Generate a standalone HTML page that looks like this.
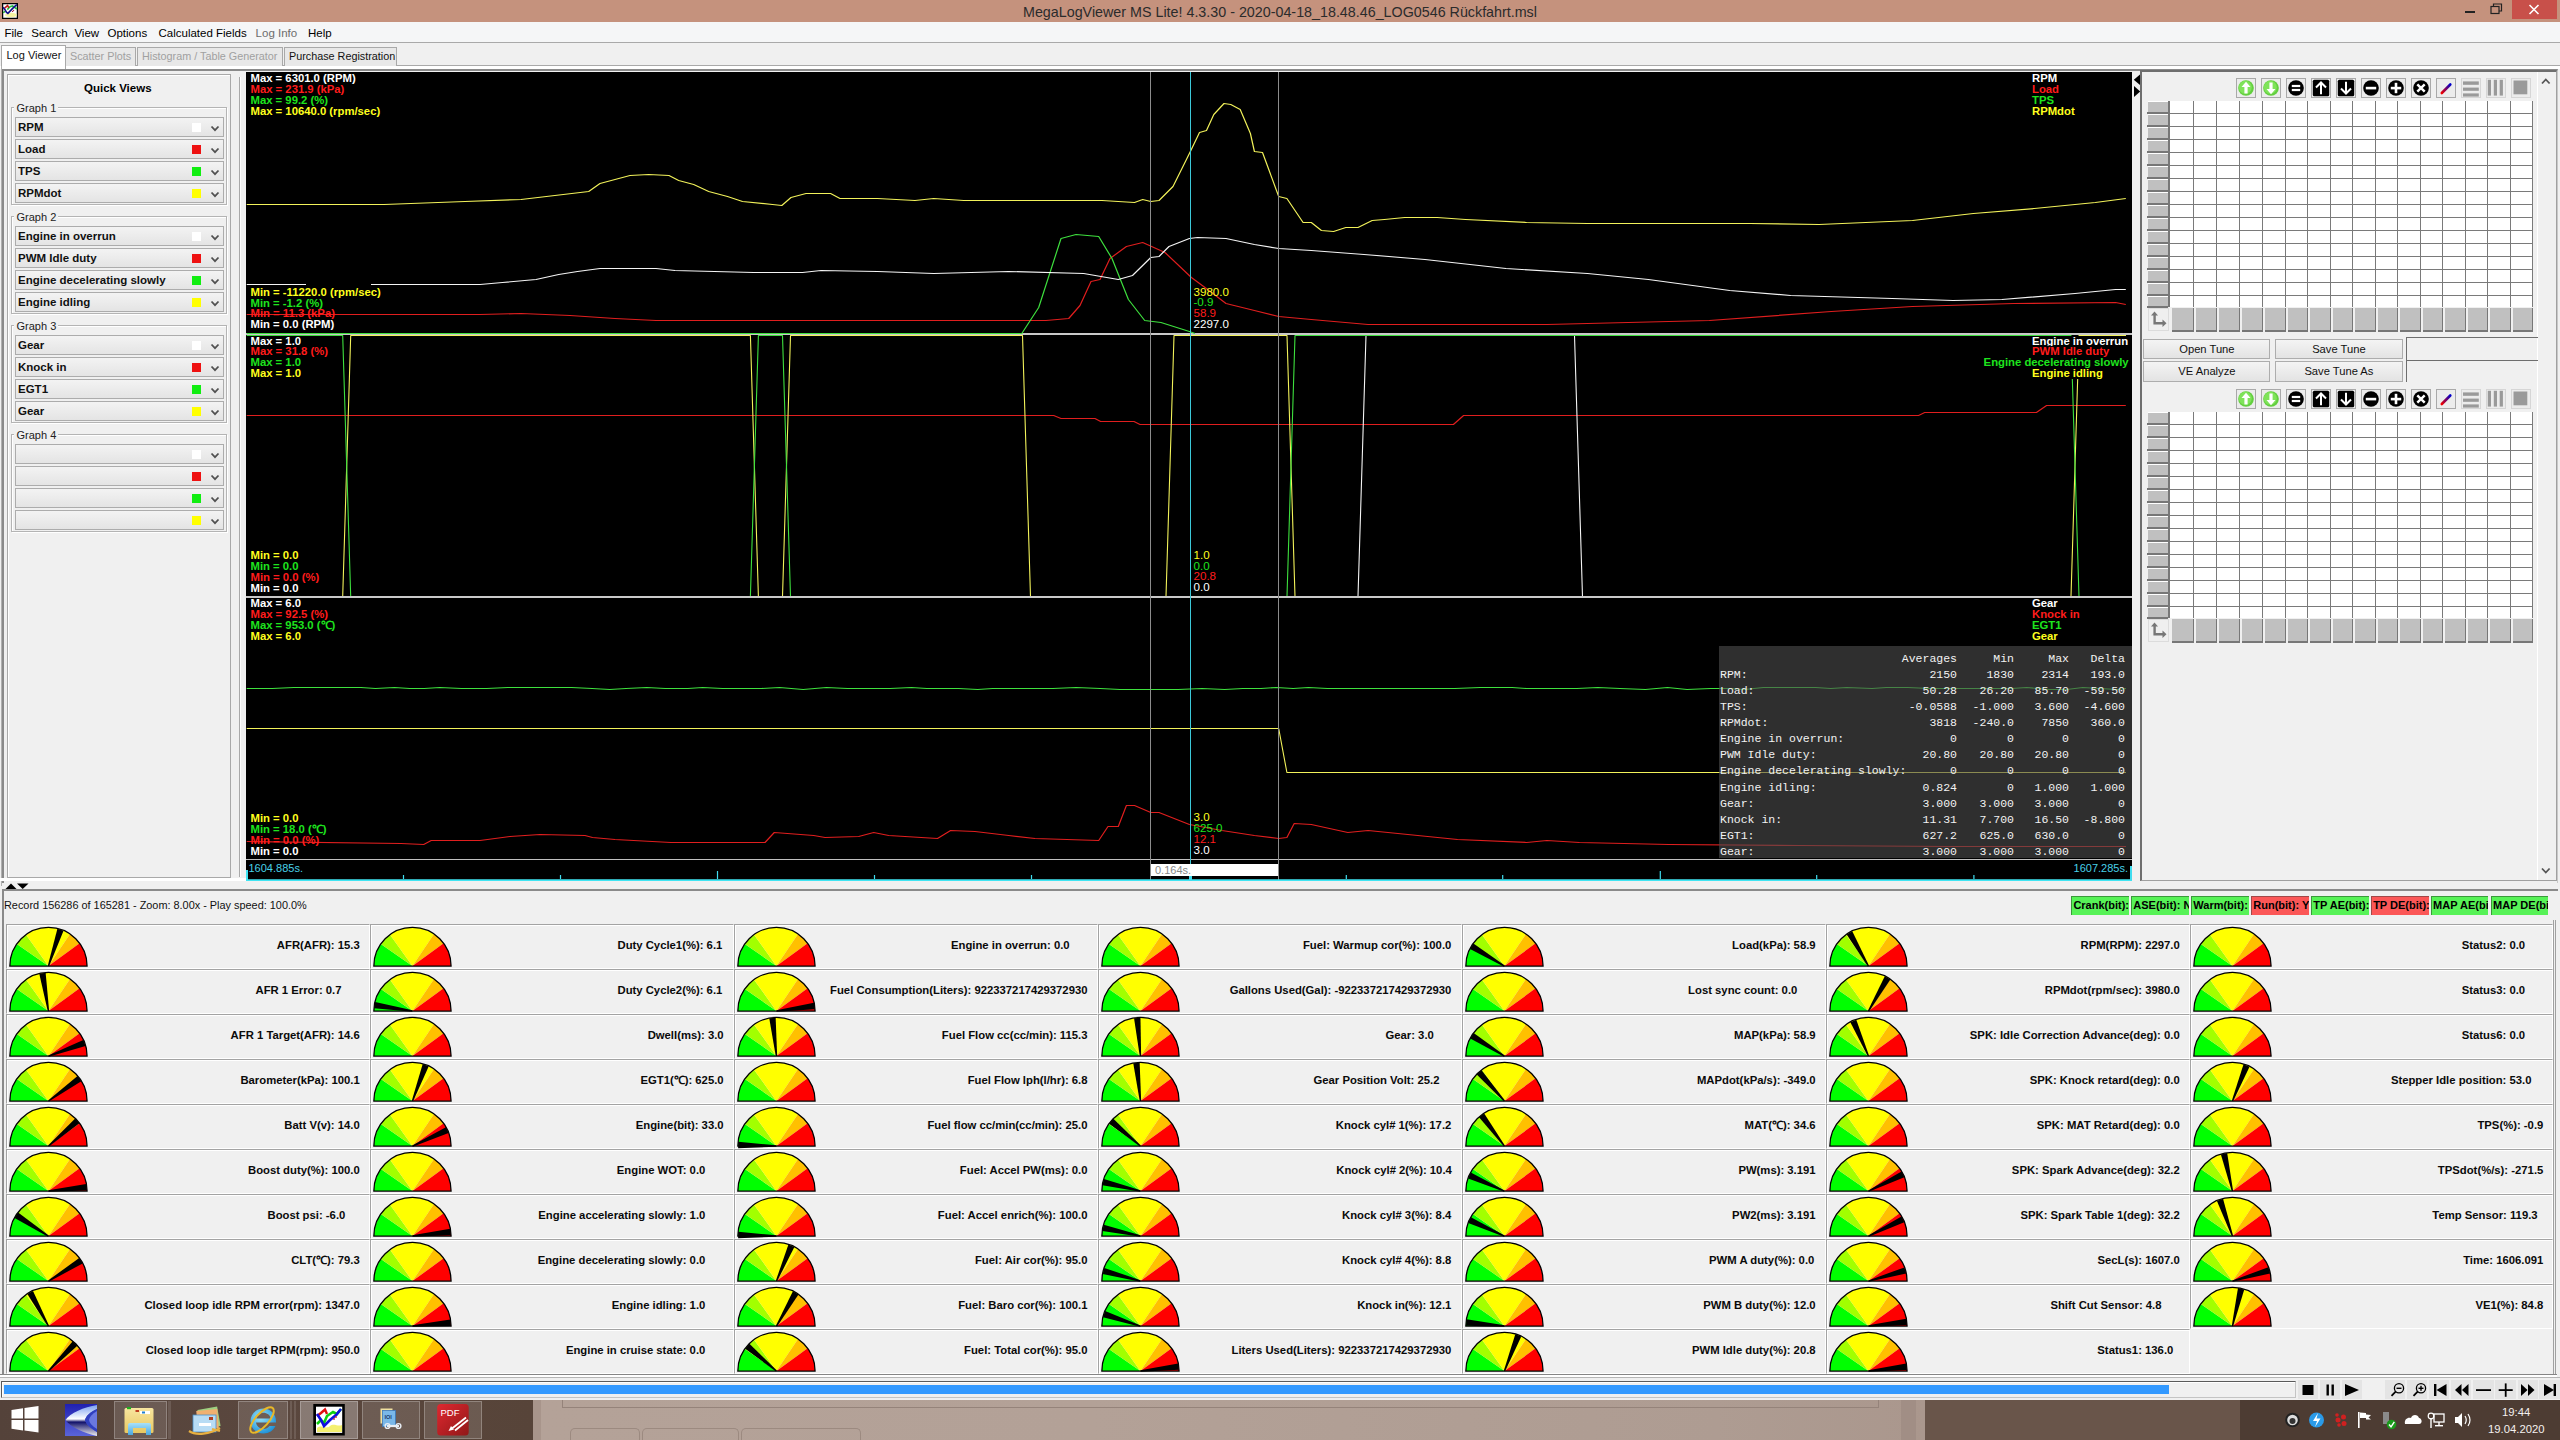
<!DOCTYPE html><html><head><meta charset="utf-8"><title>MegaLogViewer</title><style>html,body{margin:0;padding:0;width:2560px;height:1440px;overflow:hidden;background:#f0f0f0;position:relative;font-family:"Liberation Sans",sans-serif}div{box-sizing:border-box}</style></head><body>
<div style="position:absolute;left:0px;top:0px;width:2560px;height:22px;background:#c5927d"></div>
<div style="position:absolute;left:1023px;top:5px;font-family:'Liberation Sans', sans-serif;font-size:14.3px;line-height:14.3px;color:#2b2b2b;font-weight:normal;white-space:nowrap;">MegaLogViewer MS Lite! 4.3.30 - 2020-04-18_18.48.46_LOG0546 Rückfahrt.msl</div>
<div style="position:absolute;left:0px;top:22px;width:2560px;height:20px;background:#f5f6f7"></div>
<div style="position:absolute;left:0px;top:42px;width:2560px;height:1px;background:#a9a9a9"></div>
<div style="position:absolute;left:4.4px;top:28px;font-family:'Liberation Sans', sans-serif;font-size:11.5px;line-height:11.5px;color:#000;font-weight:normal;white-space:nowrap;">File</div>
<div style="position:absolute;left:31.3px;top:28px;font-family:'Liberation Sans', sans-serif;font-size:11.5px;line-height:11.5px;color:#000;font-weight:normal;white-space:nowrap;">Search</div>
<div style="position:absolute;left:74.4px;top:28px;font-family:'Liberation Sans', sans-serif;font-size:11.5px;line-height:11.5px;color:#000;font-weight:normal;white-space:nowrap;">View</div>
<div style="position:absolute;left:107.5px;top:28px;font-family:'Liberation Sans', sans-serif;font-size:11.5px;line-height:11.5px;color:#000;font-weight:normal;white-space:nowrap;">Options</div>
<div style="position:absolute;left:158.5px;top:28px;font-family:'Liberation Sans', sans-serif;font-size:11.5px;line-height:11.5px;color:#000;font-weight:normal;white-space:nowrap;">Calculated Fields</div>
<div style="position:absolute;left:255.6px;top:28px;font-family:'Liberation Sans', sans-serif;font-size:11.5px;line-height:11.5px;color:#6d6d6d;font-weight:normal;white-space:nowrap;">Log Info</div>
<div style="position:absolute;left:308px;top:28px;font-family:'Liberation Sans', sans-serif;font-size:11.5px;line-height:11.5px;color:#000;font-weight:normal;white-space:nowrap;">Help</div>
<div style="position:absolute;left:0px;top:43px;width:2560px;height:23px;background:#f0f0f0"></div>
<div style="position:absolute;left:65px;top:65px;width:2495px;height:1px;background:#a9a9a9"></div>
<div style="position:absolute;left:0px;top:66px;width:2560px;height:3px;background:#ffffff"></div>
<div style="position:absolute;left:0.6px;top:45.3px;width:65px;height:24px;background:#ffffff;border:1px solid #a9a9a9;border-bottom:none"></div>
<div style="position:absolute;left:6.5px;top:49.5px;font-family:'Liberation Sans', sans-serif;font-size:11px;line-height:11px;color:#111;font-weight:normal;white-space:nowrap;">Log Viewer</div>
<div style="position:absolute;left:65px;top:47.2px;width:71px;height:18.5px;background:#e8e8e8;border:1px solid #a9a9a9;border-bottom:none"></div>
<div style="position:absolute;left:70px;top:51px;font-family:'Liberation Sans', sans-serif;font-size:10.8px;line-height:10.8px;color:#a0a0a0;font-weight:normal;white-space:nowrap;">Scatter Plots</div>
<div style="position:absolute;left:137px;top:47.2px;width:146px;height:18.5px;background:#e8e8e8;border:1px solid #a9a9a9;border-bottom:none"></div>
<div style="position:absolute;left:142px;top:51px;font-family:'Liberation Sans', sans-serif;font-size:10.8px;line-height:10.8px;color:#a0a0a0;font-weight:normal;white-space:nowrap;">Histogram / Table Generator</div>
<div style="position:absolute;left:284px;top:47.2px;width:113px;height:18.5px;background:#e8e8e8;border:1px solid #a9a9a9;border-bottom:none"></div>
<div style="position:absolute;left:289px;top:51px;font-family:'Liberation Sans', sans-serif;font-size:10.8px;line-height:10.8px;color:#111;font-weight:normal;white-space:nowrap;">Purchase Registration</div>
<div style="position:absolute;left:0.6px;top:66px;width:1px;height:820px;background:#b0b0b0"></div>
<div style="position:absolute;left:2px;top:69px;width:2556px;height:814px;border-top:2px solid #8a8a8a;border-left:2px solid #8a8a8a;border-right:1px solid #c8c8c8"></div>
<div style="position:absolute;left:0px;top:878px;width:246px;height:3px;background:#ffffff"></div>
<div style="position:absolute;left:7px;top:74px;width:224px;height:804px;border:1px solid #a9a9a9;box-shadow:inset 1px 1px 0 #fff"></div>
<div style="position:absolute;left:239px;top:77px;width:2px;height:800px;border-left:1px solid #a9a9a9;border-right:1px solid #fff"></div>
<div style="position:absolute;left:84px;top:83px;font-family:'Liberation Sans', sans-serif;font-size:11.5px;line-height:11.5px;color:#000;font-weight:bold;white-space:nowrap;">Quick Views</div>
<div style="position:absolute;left:10.5px;top:106.5px;width:216px;height:98.5px;border:1px solid #b4b4b4;box-shadow:inset 1px 1px 0 #fff, 1px 1px 0 #fff"></div>
<div style="position:absolute;left:14px;top:101.5px;width:44px;height:12px;background:#f0f0f0"></div>
<div style="position:absolute;left:16.5px;top:102.5px;font-family:'Liberation Sans', sans-serif;font-size:11px;line-height:11px;color:#222;font-weight:normal;white-space:nowrap;">Graph 1</div>
<div style="position:absolute;left:14.5px;top:116.5px;width:209px;height:20px;border:1px solid #acacac;background:linear-gradient(#f3f3f3,#e4e4e4)"></div>
<div style="position:absolute;left:18px;top:122.0px;font-family:'Liberation Sans', sans-serif;font-size:11.5px;line-height:11.5px;color:#111;font-weight:bold;white-space:nowrap;">RPM</div>
<div style="position:absolute;left:192px;top:122.5px;width:9px;height:9px;background:#ffffff"></div>
<svg style="position:absolute;left:210px;top:124.5px" width="10" height="7"><polyline points="1.5,1.5 5,5.2 8.5,1.5" fill="none" stroke="#505050" stroke-width="1.8"/></svg>
<div style="position:absolute;left:14.5px;top:138.5px;width:209px;height:20px;border:1px solid #acacac;background:linear-gradient(#f3f3f3,#e4e4e4)"></div>
<div style="position:absolute;left:18px;top:144.0px;font-family:'Liberation Sans', sans-serif;font-size:11.5px;line-height:11.5px;color:#111;font-weight:bold;white-space:nowrap;">Load</div>
<div style="position:absolute;left:192px;top:144.5px;width:9px;height:9px;background:#ee1111"></div>
<svg style="position:absolute;left:210px;top:146.5px" width="10" height="7"><polyline points="1.5,1.5 5,5.2 8.5,1.5" fill="none" stroke="#505050" stroke-width="1.8"/></svg>
<div style="position:absolute;left:14.5px;top:160.5px;width:209px;height:20px;border:1px solid #acacac;background:linear-gradient(#f3f3f3,#e4e4e4)"></div>
<div style="position:absolute;left:18px;top:166.0px;font-family:'Liberation Sans', sans-serif;font-size:11.5px;line-height:11.5px;color:#111;font-weight:bold;white-space:nowrap;">TPS</div>
<div style="position:absolute;left:192px;top:166.5px;width:9px;height:9px;background:#11ee11"></div>
<svg style="position:absolute;left:210px;top:168.5px" width="10" height="7"><polyline points="1.5,1.5 5,5.2 8.5,1.5" fill="none" stroke="#505050" stroke-width="1.8"/></svg>
<div style="position:absolute;left:14.5px;top:182.5px;width:209px;height:20px;border:1px solid #acacac;background:linear-gradient(#f3f3f3,#e4e4e4)"></div>
<div style="position:absolute;left:18px;top:188.0px;font-family:'Liberation Sans', sans-serif;font-size:11.5px;line-height:11.5px;color:#111;font-weight:bold;white-space:nowrap;">RPMdot</div>
<div style="position:absolute;left:192px;top:188.5px;width:9px;height:9px;background:#ffff00"></div>
<svg style="position:absolute;left:210px;top:190.5px" width="10" height="7"><polyline points="1.5,1.5 5,5.2 8.5,1.5" fill="none" stroke="#505050" stroke-width="1.8"/></svg>
<div style="position:absolute;left:10.5px;top:215.5px;width:216px;height:98.5px;border:1px solid #b4b4b4;box-shadow:inset 1px 1px 0 #fff, 1px 1px 0 #fff"></div>
<div style="position:absolute;left:14px;top:210.5px;width:44px;height:12px;background:#f0f0f0"></div>
<div style="position:absolute;left:16.5px;top:211.5px;font-family:'Liberation Sans', sans-serif;font-size:11px;line-height:11px;color:#222;font-weight:normal;white-space:nowrap;">Graph 2</div>
<div style="position:absolute;left:14.5px;top:225.5px;width:209px;height:20px;border:1px solid #acacac;background:linear-gradient(#f3f3f3,#e4e4e4)"></div>
<div style="position:absolute;left:18px;top:231.0px;font-family:'Liberation Sans', sans-serif;font-size:11.5px;line-height:11.5px;color:#111;font-weight:bold;white-space:nowrap;">Engine in overrun</div>
<div style="position:absolute;left:192px;top:231.5px;width:9px;height:9px;background:#ffffff"></div>
<svg style="position:absolute;left:210px;top:233.5px" width="10" height="7"><polyline points="1.5,1.5 5,5.2 8.5,1.5" fill="none" stroke="#505050" stroke-width="1.8"/></svg>
<div style="position:absolute;left:14.5px;top:247.5px;width:209px;height:20px;border:1px solid #acacac;background:linear-gradient(#f3f3f3,#e4e4e4)"></div>
<div style="position:absolute;left:18px;top:253.0px;font-family:'Liberation Sans', sans-serif;font-size:11.5px;line-height:11.5px;color:#111;font-weight:bold;white-space:nowrap;">PWM Idle duty</div>
<div style="position:absolute;left:192px;top:253.5px;width:9px;height:9px;background:#ee1111"></div>
<svg style="position:absolute;left:210px;top:255.5px" width="10" height="7"><polyline points="1.5,1.5 5,5.2 8.5,1.5" fill="none" stroke="#505050" stroke-width="1.8"/></svg>
<div style="position:absolute;left:14.5px;top:269.5px;width:209px;height:20px;border:1px solid #acacac;background:linear-gradient(#f3f3f3,#e4e4e4)"></div>
<div style="position:absolute;left:18px;top:275.0px;font-family:'Liberation Sans', sans-serif;font-size:11.5px;line-height:11.5px;color:#111;font-weight:bold;white-space:nowrap;">Engine decelerating slowly</div>
<div style="position:absolute;left:192px;top:275.5px;width:9px;height:9px;background:#11ee11"></div>
<svg style="position:absolute;left:210px;top:277.5px" width="10" height="7"><polyline points="1.5,1.5 5,5.2 8.5,1.5" fill="none" stroke="#505050" stroke-width="1.8"/></svg>
<div style="position:absolute;left:14.5px;top:291.5px;width:209px;height:20px;border:1px solid #acacac;background:linear-gradient(#f3f3f3,#e4e4e4)"></div>
<div style="position:absolute;left:18px;top:297.0px;font-family:'Liberation Sans', sans-serif;font-size:11.5px;line-height:11.5px;color:#111;font-weight:bold;white-space:nowrap;">Engine idling</div>
<div style="position:absolute;left:192px;top:297.5px;width:9px;height:9px;background:#ffff00"></div>
<svg style="position:absolute;left:210px;top:299.5px" width="10" height="7"><polyline points="1.5,1.5 5,5.2 8.5,1.5" fill="none" stroke="#505050" stroke-width="1.8"/></svg>
<div style="position:absolute;left:10.5px;top:324.5px;width:216px;height:98.5px;border:1px solid #b4b4b4;box-shadow:inset 1px 1px 0 #fff, 1px 1px 0 #fff"></div>
<div style="position:absolute;left:14px;top:319.5px;width:44px;height:12px;background:#f0f0f0"></div>
<div style="position:absolute;left:16.5px;top:320.5px;font-family:'Liberation Sans', sans-serif;font-size:11px;line-height:11px;color:#222;font-weight:normal;white-space:nowrap;">Graph 3</div>
<div style="position:absolute;left:14.5px;top:334.5px;width:209px;height:20px;border:1px solid #acacac;background:linear-gradient(#f3f3f3,#e4e4e4)"></div>
<div style="position:absolute;left:18px;top:340.0px;font-family:'Liberation Sans', sans-serif;font-size:11.5px;line-height:11.5px;color:#111;font-weight:bold;white-space:nowrap;">Gear</div>
<div style="position:absolute;left:192px;top:340.5px;width:9px;height:9px;background:#ffffff"></div>
<svg style="position:absolute;left:210px;top:342.5px" width="10" height="7"><polyline points="1.5,1.5 5,5.2 8.5,1.5" fill="none" stroke="#505050" stroke-width="1.8"/></svg>
<div style="position:absolute;left:14.5px;top:356.5px;width:209px;height:20px;border:1px solid #acacac;background:linear-gradient(#f3f3f3,#e4e4e4)"></div>
<div style="position:absolute;left:18px;top:362.0px;font-family:'Liberation Sans', sans-serif;font-size:11.5px;line-height:11.5px;color:#111;font-weight:bold;white-space:nowrap;">Knock in</div>
<div style="position:absolute;left:192px;top:362.5px;width:9px;height:9px;background:#ee1111"></div>
<svg style="position:absolute;left:210px;top:364.5px" width="10" height="7"><polyline points="1.5,1.5 5,5.2 8.5,1.5" fill="none" stroke="#505050" stroke-width="1.8"/></svg>
<div style="position:absolute;left:14.5px;top:378.5px;width:209px;height:20px;border:1px solid #acacac;background:linear-gradient(#f3f3f3,#e4e4e4)"></div>
<div style="position:absolute;left:18px;top:384.0px;font-family:'Liberation Sans', sans-serif;font-size:11.5px;line-height:11.5px;color:#111;font-weight:bold;white-space:nowrap;">EGT1</div>
<div style="position:absolute;left:192px;top:384.5px;width:9px;height:9px;background:#11ee11"></div>
<svg style="position:absolute;left:210px;top:386.5px" width="10" height="7"><polyline points="1.5,1.5 5,5.2 8.5,1.5" fill="none" stroke="#505050" stroke-width="1.8"/></svg>
<div style="position:absolute;left:14.5px;top:400.5px;width:209px;height:20px;border:1px solid #acacac;background:linear-gradient(#f3f3f3,#e4e4e4)"></div>
<div style="position:absolute;left:18px;top:406.0px;font-family:'Liberation Sans', sans-serif;font-size:11.5px;line-height:11.5px;color:#111;font-weight:bold;white-space:nowrap;">Gear</div>
<div style="position:absolute;left:192px;top:406.5px;width:9px;height:9px;background:#ffff00"></div>
<svg style="position:absolute;left:210px;top:408.5px" width="10" height="7"><polyline points="1.5,1.5 5,5.2 8.5,1.5" fill="none" stroke="#505050" stroke-width="1.8"/></svg>
<div style="position:absolute;left:10.5px;top:433.5px;width:216px;height:98.5px;border:1px solid #b4b4b4;box-shadow:inset 1px 1px 0 #fff, 1px 1px 0 #fff"></div>
<div style="position:absolute;left:14px;top:428.5px;width:44px;height:12px;background:#f0f0f0"></div>
<div style="position:absolute;left:16.5px;top:429.5px;font-family:'Liberation Sans', sans-serif;font-size:11px;line-height:11px;color:#222;font-weight:normal;white-space:nowrap;">Graph 4</div>
<div style="position:absolute;left:14.5px;top:443.5px;width:209px;height:20px;border:1px solid #acacac;background:linear-gradient(#f3f3f3,#e4e4e4)"></div>
<div style="position:absolute;left:192px;top:449.5px;width:9px;height:9px;background:#ffffff"></div>
<svg style="position:absolute;left:210px;top:451.5px" width="10" height="7"><polyline points="1.5,1.5 5,5.2 8.5,1.5" fill="none" stroke="#505050" stroke-width="1.8"/></svg>
<div style="position:absolute;left:14.5px;top:465.5px;width:209px;height:20px;border:1px solid #acacac;background:linear-gradient(#f3f3f3,#e4e4e4)"></div>
<div style="position:absolute;left:192px;top:471.5px;width:9px;height:9px;background:#ee1111"></div>
<svg style="position:absolute;left:210px;top:473.5px" width="10" height="7"><polyline points="1.5,1.5 5,5.2 8.5,1.5" fill="none" stroke="#505050" stroke-width="1.8"/></svg>
<div style="position:absolute;left:14.5px;top:487.5px;width:209px;height:20px;border:1px solid #acacac;background:linear-gradient(#f3f3f3,#e4e4e4)"></div>
<div style="position:absolute;left:192px;top:493.5px;width:9px;height:9px;background:#11ee11"></div>
<svg style="position:absolute;left:210px;top:495.5px" width="10" height="7"><polyline points="1.5,1.5 5,5.2 8.5,1.5" fill="none" stroke="#505050" stroke-width="1.8"/></svg>
<div style="position:absolute;left:14.5px;top:509.5px;width:209px;height:20px;border:1px solid #acacac;background:linear-gradient(#f3f3f3,#e4e4e4)"></div>
<div style="position:absolute;left:192px;top:515.5px;width:9px;height:9px;background:#ffff00"></div>
<svg style="position:absolute;left:210px;top:517.5px" width="10" height="7"><polyline points="1.5,1.5 5,5.2 8.5,1.5" fill="none" stroke="#505050" stroke-width="1.8"/></svg>
<div style="position:absolute;left:246px;top:72px;width:1886px;height:809px;background:#000"></div>
<svg style="position:absolute;left:246px;top:72px" width="1886" height="809"><g transform="translate(-246,-72)"><line x1="246" y1="334" x2="2132" y2="334" stroke="#c8c8c8" stroke-width="2" opacity="1"/><polyline points="246.7,314.5 480.0,314.5 521.0,313.5 570.0,315.5 615.0,318.5 656.0,320.5 1046.0,320.5 1068.7,318.5 1080.0,305.5 1091.0,281.5 1100.0,279.5 1110.0,258.5 1126.4,246.5 1142.7,242.5 1165.0,252.5 1191.4,277.5 1207.7,289.5 1226.0,303.5 1254.4,310.5 1278.7,316.5 1311.3,319.5 1368.0,324.5 1546.9,324.5 1709.4,320.5 1831.3,311.5 1912.5,306.5 2014.0,303.5 2115.6,302.5 2125.8,304.5" fill="none" stroke="#e01e1e" stroke-width="1.2" stroke-linejoin="round" opacity="1"/><polyline points="246.7,333.5 1021.8,333.5 1038.7,307.5 1061.0,238.5 1076.0,234.5 1098.7,236.5 1112.0,258.5 1128.4,299.5 1144.7,320.5 1161.0,322.5 1189.4,331.5 1195.0,333.5" fill="none" stroke="#3ee03e" stroke-width="1.2" stroke-linejoin="round" opacity="1"/><polyline points="246.7,284.5 306.0,284.5" fill="none" stroke="#f4f4f4" stroke-width="1.2" stroke-linejoin="round" opacity="1"/><polyline points="371.0,284.5 480.0,284.5 502.5,282.5 536.0,279.5 558.7,274.5 577.5,271.5 600.0,268.5 656.0,268.5 675.0,270.5 753.7,272.5 802.5,272.5 821.0,270.5 877.5,271.5 933.7,273.5 1008.7,271.5 1083.7,273.5 1118.3,279.5 1132.5,275.5 1150.8,257.5 1159.0,256.5 1169.0,246.5 1189.4,238.5 1197.5,237.5 1226.0,238.5 1254.4,244.5 1278.7,248.5 1311.3,250.5 1364.0,254.5 1425.0,259.5 1506.0,268.5 1587.5,273.5 1648.4,279.5 1729.7,290.5 1790.6,295.5 1892.2,298.5 1953.0,300.5 2001.9,299.5 2075.0,293.5 2115.6,289.5 2125.8,289.5" fill="none" stroke="#f4f4f4" stroke-width="1.2" stroke-linejoin="round" opacity="1"/><polyline points="246.7,204.5 384.0,204.5 465.0,201.5 521.0,199.5 588.7,191.5 600.0,183.5 615.0,179.5 630.0,175.5 648.7,174.5 669.0,175.5 678.7,180.5 693.7,184.5 708.7,191.5 727.5,196.5 742.5,201.5 772.5,204.5 781.8,205.5 791.0,197.5 806.0,193.5 830.6,193.5 840.0,198.5 877.5,198.5 915.0,200.5 933.7,198.5 963.7,200.5 1102.0,200.5 1134.5,202.5 1142.7,199.5 1150.8,201.5 1159.0,200.5 1173.0,186.5 1189.4,153.5 1199.5,132.5 1206.5,130.5 1213.8,114.5 1224.0,103.5 1230.8,104.5 1240.2,109.5 1250.4,133.5 1254.4,151.5 1262.5,152.5 1278.7,196.5 1286.9,198.5 1303.1,222.5 1311.3,222.5 1321.4,230.5 1333.6,231.5 1345.8,227.5 1358.0,227.5 1372.2,220.5 1384.4,219.5 1404.7,217.5 1437.2,217.5 1465.6,219.5 1526.6,222.5 1587.5,223.5 1750.0,223.5 1819.0,224.5 1912.5,220.5 1973.4,213.5 2034.4,208.5 2095.3,202.5 2125.8,198.5" fill="none" stroke="#f2f25a" stroke-width="1.2" stroke-linejoin="round" opacity="1"/><polyline points="246.7,415.5 1053.7,415.5 1061.0,418.5 1095.0,418.5 1100.6,421.5 1134.0,421.5 1140.0,424.5 1453.4,424.5 1463.6,415.5 1918.6,415.5 1924.7,412.5 2036.4,412.5 2046.6,405.5 2125.8,405.5" fill="none" stroke="#e01e1e" stroke-width="1.2" stroke-linejoin="round" opacity="1"/><polyline points="246.7,596.5 1358.0,596.5 1366.0,335.5 1574.5,335.5 1582.5,596.5 2126.0,596.5" fill="none" stroke="#f4f4f4" stroke-width="1.1" stroke-linejoin="round" opacity="1"/><polyline points="246.7,596.5 342.7,596.5 350.7,335.5 750.4,335.5 758.4,596.5 782.5,596.5 790.5,335.5 1022.5,335.5 1030.5,596.5 1166.0,596.5 1174.0,335.5 1287.0,335.5 1295.0,596.5 2071.0,596.5 2079.0,335.5 2126.0,335.5" fill="none" stroke="#f2f25a" stroke-width="1.1" stroke-linejoin="round" opacity="1"/><polyline points="246.7,335.5 342.7,335.5 350.7,596.5 750.4,596.5 758.4,335.5 782.5,335.5 790.5,596.5 1287.0,596.5 1295.0,335.5 2071.0,335.5 2079.0,596.5 2126.0,596.5" fill="none" stroke="#3ee03e" stroke-width="1.1" stroke-linejoin="round" opacity="1"/><line x1="246" y1="597" x2="2132" y2="597" stroke="#c8c8c8" stroke-width="2" opacity="1"/><polyline points="246.7,688.5 272.1,688.5 293.9,687.5 317.7,687.5 336.1,687.5 361.0,687.5 375.5,688.5 394.5,687.5 409.6,688.5 424.3,688.5 439.8,687.5 461.4,688.5 486.7,688.5 507.8,687.5 533.5,687.5 554.2,687.5 571.6,687.5 592.1,688.5 609.8,689.5 626.0,688.5 646.8,687.5 665.3,688.5 687.9,688.5 702.6,687.5 722.5,688.5 741.7,688.5 761.3,688.5 779.6,687.5 803.1,689.5 826.5,687.5 847.4,688.5 867.3,688.5 890.1,688.5 911.4,687.5 926.8,688.5 942.8,688.5 958.6,688.5 977.7,689.5 992.6,688.5 1013.5,688.5 1031.5,688.5 1052.7,688.5 1076.2,687.5 1100.3,688.5 1120.0,689.5 1134.8,689.5 1157.2,689.5 1178.1,689.5 1202.0,688.5 1224.6,689.5 1242.8,688.5 1261.0,688.5 1276.4,687.5 1293.1,688.5 1308.6,687.5 1327.4,688.5 1342.4,688.5 1361.2,688.5 1385.8,688.5 1410.1,688.5 1432.6,688.5 1454.8,688.5 1480.3,687.5 1495.3,687.5 1512.1,687.5 1526.2,688.5 1542.4,688.5 1556.5,688.5 1576.9,688.5 1597.7,687.5 1620.0,688.5 1645.4,689.5 1667.5,687.5 1687.0,689.5 1710.5,688.5 1729.3,688.5 1744.6,689.5 1763.4,687.5 1778.2,687.5 1797.5,687.5 1815.5,687.5 1830.8,688.5 1846.6,687.5 1872.0,688.5 1886.3,687.5 1907.6,687.5 1929.3,688.5 1950.5,688.5 1966.0,688.5 1991.9,688.5 2011.6,688.5 2026.7,687.5 2049.7,689.5 2066.8,689.5 2082.8,687.5 2099.2,688.5 2117.6,689.5 2126.0,688.5" fill="none" stroke="#3ee03e" stroke-width="1.1" stroke-linejoin="round" opacity="1"/><polyline points="246.7,728.5 1278.7,728.5 1286.9,772.5 2126.0,772.5" fill="none" stroke="#f2f25a" stroke-width="1.1" stroke-linejoin="round" opacity="1"/><polyline points="246.7,841.5 401.0,843.5 423.7,844.5 431.2,840.5 480.0,840.5 510.0,836.5 540.0,834.5 585.0,835.5 592.5,837.5 615.0,839.5 671.0,842.5 765.0,842.5 774.3,832.5 813.7,835.5 825.0,837.5 858.7,836.5 873.7,832.5 888.7,835.5 937.5,838.5 950.6,830.5 975.0,831.5 1008.7,835.5 1035.0,838.5 1098.7,840.5 1108.0,826.5 1118.3,826.5 1126.4,805.5 1134.5,805.5 1150.8,812.5 1159.0,812.5 1189.4,824.5 1221.9,830.5 1254.4,835.5 1278.7,838.5 1286.9,837.5 1294.2,823.5 1311.3,824.5 1347.8,832.5 1368.1,830.5 1457.5,839.5 1526.6,842.5 1546.9,840.5 1579.4,842.5 1668.8,844.5 1800.0,845.5 1950.0,846.5 2126.0,846.5" fill="none" stroke="#e01e1e" stroke-width="1.2" stroke-linejoin="round" opacity="1"/><line x1="246" y1="859.5" x2="2132" y2="859.5" stroke="#c0c0c0" stroke-width="1.2" opacity="1"/><line x1="1150.5" y1="72" x2="1150.5" y2="880" stroke="#8c8c8c" stroke-width="1" opacity="1"/><line x1="1278.5" y1="72" x2="1278.5" y2="880" stroke="#8c8c8c" stroke-width="1" opacity="1"/><line x1="1190.5" y1="72" x2="1190.5" y2="880" stroke="#3cc8d8" stroke-width="1" opacity="1"/><line x1="246" y1="880.2" x2="2132" y2="880.2" stroke="#40e4f2" stroke-width="1.8" opacity="1"/><line x1="403.5" y1="875" x2="403.5" y2="879" stroke="#40dcef" stroke-width="1.2" opacity="1"/><line x1="560.5" y1="875" x2="560.5" y2="879" stroke="#40dcef" stroke-width="1.2" opacity="1"/><line x1="717.5" y1="871" x2="717.5" y2="879" stroke="#40dcef" stroke-width="1.2" opacity="1"/><line x1="874.5" y1="875" x2="874.5" y2="879" stroke="#40dcef" stroke-width="1.2" opacity="1"/><line x1="1031.5" y1="875" x2="1031.5" y2="879" stroke="#40dcef" stroke-width="1.2" opacity="1"/><line x1="1189.9" y1="875" x2="1189.9" y2="879" stroke="#40dcef" stroke-width="1.2" opacity="1"/><line x1="1346.3" y1="875" x2="1346.3" y2="879" stroke="#40dcef" stroke-width="1.2" opacity="1"/><line x1="1502.7" y1="875" x2="1502.7" y2="879" stroke="#40dcef" stroke-width="1.2" opacity="1"/><line x1="1660.3" y1="871" x2="1660.3" y2="879" stroke="#40dcef" stroke-width="1.2" opacity="1"/><line x1="1816.7" y1="875" x2="1816.7" y2="879" stroke="#40dcef" stroke-width="1.2" opacity="1"/><line x1="1973.9" y1="875" x2="1973.9" y2="879" stroke="#40dcef" stroke-width="1.2" opacity="1"/><line x1="247" y1="870" x2="247" y2="880" stroke="#40e4f2" stroke-width="2" opacity="1"/><line x1="2131" y1="866" x2="2131" y2="880" stroke="#40dcef" stroke-width="2" opacity="1"/><line x1="1190.5" y1="876" x2="1190.5" y2="881" stroke="#40dcef" stroke-width="3" opacity="1"/></g></svg>
<div style="position:absolute;left:1151px;top:864px;width:127px;height:12px;background:#fff"></div>
<div style="position:absolute;left:1155px;top:865px;font-family:'Liberation Sans', sans-serif;font-size:11px;line-height:11px;color:#888888;font-weight:normal;white-space:nowrap;">0.164s.</div>
<div style="position:absolute;left:248.5px;top:863px;font-family:'Liberation Sans', sans-serif;font-size:11px;line-height:11px;color:#48d0e8;font-weight:normal;white-space:nowrap;">1604.885s.</div>
<div style="position:absolute;right:432px;top:863px;font-family:'Liberation Sans', sans-serif;font-size:11px;line-height:11px;color:#48d0e8;font-weight:normal;white-space:nowrap;text-align:right;">1607.285s.</div>
<div style="position:absolute;left:250.5px;top:73px;font-family:'Liberation Sans', sans-serif;font-size:11.3px;line-height:11.3px;color:#ffffff;font-weight:bold;white-space:nowrap;">Max = 6301.0 (RPM)</div>
<div style="position:absolute;left:250.5px;top:84px;font-family:'Liberation Sans', sans-serif;font-size:11.3px;line-height:11.3px;color:#ff1c1c;font-weight:bold;white-space:nowrap;">Max = 231.9 (kPa)</div>
<div style="position:absolute;left:250.5px;top:95px;font-family:'Liberation Sans', sans-serif;font-size:11.3px;line-height:11.3px;color:#1ee41e;font-weight:bold;white-space:nowrap;">Max = 99.2 (%)</div>
<div style="position:absolute;left:250.5px;top:106px;font-family:'Liberation Sans', sans-serif;font-size:11.3px;line-height:11.3px;color:#ffff1e;font-weight:bold;white-space:nowrap;">Max = 10640.0 (rpm/sec)</div>
<div style="position:absolute;left:250.5px;top:287px;font-family:'Liberation Sans', sans-serif;font-size:11.3px;line-height:11.3px;color:#ffff1e;font-weight:bold;white-space:nowrap;">Min = -11220.0 (rpm/sec)</div>
<div style="position:absolute;left:250.5px;top:298px;font-family:'Liberation Sans', sans-serif;font-size:11.3px;line-height:11.3px;color:#1ee41e;font-weight:bold;white-space:nowrap;">Min = -1.2 (%)</div>
<div style="position:absolute;left:250.5px;top:308px;font-family:'Liberation Sans', sans-serif;font-size:11.3px;line-height:11.3px;color:#ff1c1c;font-weight:bold;white-space:nowrap;">Min = 11.3 (kPa)</div>
<div style="position:absolute;left:250.5px;top:319px;font-family:'Liberation Sans', sans-serif;font-size:11.3px;line-height:11.3px;color:#ffffff;font-weight:bold;white-space:nowrap;">Min = 0.0 (RPM)</div>
<div style="position:absolute;left:2032px;top:73px;font-family:'Liberation Sans', sans-serif;font-size:11.3px;line-height:11.3px;color:#ffffff;font-weight:bold;white-space:nowrap;">RPM</div>
<div style="position:absolute;left:2032px;top:84px;font-family:'Liberation Sans', sans-serif;font-size:11.3px;line-height:11.3px;color:#ff1c1c;font-weight:bold;white-space:nowrap;">Load</div>
<div style="position:absolute;left:2032px;top:95px;font-family:'Liberation Sans', sans-serif;font-size:11.3px;line-height:11.3px;color:#1ee41e;font-weight:bold;white-space:nowrap;">TPS</div>
<div style="position:absolute;left:2032px;top:106px;font-family:'Liberation Sans', sans-serif;font-size:11.3px;line-height:11.3px;color:#ffff1e;font-weight:bold;white-space:nowrap;">RPMdot</div>
<div style="position:absolute;left:1193.5px;top:286px;font-family:'Liberation Sans', sans-serif;font-size:11.6px;line-height:11.6px;color:#ffff1e;font-weight:normal;white-space:nowrap;">3980.0</div>
<div style="position:absolute;left:1193.5px;top:296px;font-family:'Liberation Sans', sans-serif;font-size:11.6px;line-height:11.6px;color:#1ee41e;font-weight:normal;white-space:nowrap;">-0.9</div>
<div style="position:absolute;left:1193.5px;top:307px;font-family:'Liberation Sans', sans-serif;font-size:11.6px;line-height:11.6px;color:#ff1c1c;font-weight:normal;white-space:nowrap;">58.9</div>
<div style="position:absolute;left:1193.5px;top:318px;font-family:'Liberation Sans', sans-serif;font-size:11.6px;line-height:11.6px;color:#ffffff;font-weight:normal;white-space:nowrap;">2297.0</div>
<div style="position:absolute;left:250.5px;top:336px;font-family:'Liberation Sans', sans-serif;font-size:11.3px;line-height:11.3px;color:#ffffff;font-weight:bold;white-space:nowrap;">Max = 1.0</div>
<div style="position:absolute;left:250.5px;top:346px;font-family:'Liberation Sans', sans-serif;font-size:11.3px;line-height:11.3px;color:#ff1c1c;font-weight:bold;white-space:nowrap;">Max = 31.8 (%)</div>
<div style="position:absolute;left:250.5px;top:357px;font-family:'Liberation Sans', sans-serif;font-size:11.3px;line-height:11.3px;color:#1ee41e;font-weight:bold;white-space:nowrap;">Max = 1.0</div>
<div style="position:absolute;left:250.5px;top:368px;font-family:'Liberation Sans', sans-serif;font-size:11.3px;line-height:11.3px;color:#ffff1e;font-weight:bold;white-space:nowrap;">Max = 1.0</div>
<div style="position:absolute;left:250.5px;top:550px;font-family:'Liberation Sans', sans-serif;font-size:11.3px;line-height:11.3px;color:#ffff1e;font-weight:bold;white-space:nowrap;">Min = 0.0</div>
<div style="position:absolute;left:250.5px;top:561px;font-family:'Liberation Sans', sans-serif;font-size:11.3px;line-height:11.3px;color:#1ee41e;font-weight:bold;white-space:nowrap;">Min = 0.0</div>
<div style="position:absolute;left:250.5px;top:572px;font-family:'Liberation Sans', sans-serif;font-size:11.3px;line-height:11.3px;color:#ff1c1c;font-weight:bold;white-space:nowrap;">Min = 0.0 (%)</div>
<div style="position:absolute;left:250.5px;top:583px;font-family:'Liberation Sans', sans-serif;font-size:11.3px;line-height:11.3px;color:#ffffff;font-weight:bold;white-space:nowrap;">Min = 0.0</div>
<div style="position:absolute;left:2032px;top:336px;font-family:'Liberation Sans', sans-serif;font-size:11.3px;line-height:11.3px;color:#ffffff;font-weight:bold;white-space:nowrap;background:#000;">Engine in overrun</div>
<div style="position:absolute;left:2032px;top:346px;font-family:'Liberation Sans', sans-serif;font-size:11.3px;line-height:11.3px;color:#ff1c1c;font-weight:bold;white-space:nowrap;background:#000;">PWM Idle duty</div>
<div style="position:absolute;left:1983.6px;top:357px;font-family:'Liberation Sans', sans-serif;font-size:11.3px;line-height:11.3px;color:#1ee41e;font-weight:bold;white-space:nowrap;background:#000;">Engine decelerating slowly</div>
<div style="position:absolute;left:2032px;top:368px;font-family:'Liberation Sans', sans-serif;font-size:11.3px;line-height:11.3px;color:#ffff1e;font-weight:bold;white-space:nowrap;background:#000;">Engine idling</div>
<div style="position:absolute;left:1193.5px;top:549px;font-family:'Liberation Sans', sans-serif;font-size:11.6px;line-height:11.6px;color:#ffff1e;font-weight:normal;white-space:nowrap;">1.0</div>
<div style="position:absolute;left:1193.5px;top:560px;font-family:'Liberation Sans', sans-serif;font-size:11.6px;line-height:11.6px;color:#1ee41e;font-weight:normal;white-space:nowrap;">0.0</div>
<div style="position:absolute;left:1193.5px;top:570px;font-family:'Liberation Sans', sans-serif;font-size:11.6px;line-height:11.6px;color:#ff1c1c;font-weight:normal;white-space:nowrap;">20.8</div>
<div style="position:absolute;left:1193.5px;top:581px;font-family:'Liberation Sans', sans-serif;font-size:11.6px;line-height:11.6px;color:#ffffff;font-weight:normal;white-space:nowrap;">0.0</div>
<div style="position:absolute;left:250.5px;top:598px;font-family:'Liberation Sans', sans-serif;font-size:11.3px;line-height:11.3px;color:#ffffff;font-weight:bold;white-space:nowrap;">Max = 6.0</div>
<div style="position:absolute;left:250.5px;top:609px;font-family:'Liberation Sans', sans-serif;font-size:11.3px;line-height:11.3px;color:#ff1c1c;font-weight:bold;white-space:nowrap;">Max = 92.5 (%)</div>
<div style="position:absolute;left:250.5px;top:620px;font-family:'Liberation Sans', sans-serif;font-size:11.3px;line-height:11.3px;color:#1ee41e;font-weight:bold;white-space:nowrap;">Max = 953.0 (&#8451;)</div>
<div style="position:absolute;left:250.5px;top:631px;font-family:'Liberation Sans', sans-serif;font-size:11.3px;line-height:11.3px;color:#ffff1e;font-weight:bold;white-space:nowrap;">Max = 6.0</div>
<div style="position:absolute;left:250.5px;top:813px;font-family:'Liberation Sans', sans-serif;font-size:11.3px;line-height:11.3px;color:#ffff1e;font-weight:bold;white-space:nowrap;">Min = 0.0</div>
<div style="position:absolute;left:250.5px;top:824px;font-family:'Liberation Sans', sans-serif;font-size:11.3px;line-height:11.3px;color:#1ee41e;font-weight:bold;white-space:nowrap;">Min = 18.0 (&#8451;)</div>
<div style="position:absolute;left:250.5px;top:835px;font-family:'Liberation Sans', sans-serif;font-size:11.3px;line-height:11.3px;color:#ff1c1c;font-weight:bold;white-space:nowrap;">Min = 0.0 (%)</div>
<div style="position:absolute;left:250.5px;top:846px;font-family:'Liberation Sans', sans-serif;font-size:11.3px;line-height:11.3px;color:#ffffff;font-weight:bold;white-space:nowrap;">Min = 0.0</div>
<div style="position:absolute;left:2032px;top:598px;font-family:'Liberation Sans', sans-serif;font-size:11.3px;line-height:11.3px;color:#ffffff;font-weight:bold;white-space:nowrap;">Gear</div>
<div style="position:absolute;left:2032px;top:609px;font-family:'Liberation Sans', sans-serif;font-size:11.3px;line-height:11.3px;color:#ff1c1c;font-weight:bold;white-space:nowrap;">Knock in</div>
<div style="position:absolute;left:2032px;top:620px;font-family:'Liberation Sans', sans-serif;font-size:11.3px;line-height:11.3px;color:#1ee41e;font-weight:bold;white-space:nowrap;">EGT1</div>
<div style="position:absolute;left:2032px;top:631px;font-family:'Liberation Sans', sans-serif;font-size:11.3px;line-height:11.3px;color:#ffff1e;font-weight:bold;white-space:nowrap;">Gear</div>
<div style="position:absolute;left:1193.5px;top:811px;font-family:'Liberation Sans', sans-serif;font-size:11.6px;line-height:11.6px;color:#ffff1e;font-weight:normal;white-space:nowrap;">3.0</div>
<div style="position:absolute;left:1193.5px;top:822px;font-family:'Liberation Sans', sans-serif;font-size:11.6px;line-height:11.6px;color:#1ee41e;font-weight:normal;white-space:nowrap;">625.0</div>
<div style="position:absolute;left:1193.5px;top:833px;font-family:'Liberation Sans', sans-serif;font-size:11.6px;line-height:11.6px;color:#ff1c1c;font-weight:normal;white-space:nowrap;">12.1</div>
<div style="position:absolute;left:1193.5px;top:844px;font-family:'Liberation Sans', sans-serif;font-size:11.6px;line-height:11.6px;color:#ffffff;font-weight:normal;white-space:nowrap;">3.0</div>
<div style="position:absolute;left:1719px;top:646px;width:413px;height:212px;background:rgba(76,76,76,0.62)"></div>
<div style="position:absolute;right:603px;top:653.42px;font-family:'Liberation Mono', monospace;font-size:11.5px;line-height:11.5px;color:#f2f2f2;font-weight:normal;white-space:nowrap;text-align:right;">Averages</div>
<div style="position:absolute;right:546px;top:653.42px;font-family:'Liberation Mono', monospace;font-size:11.5px;line-height:11.5px;color:#f2f2f2;font-weight:normal;white-space:nowrap;text-align:right;">Min</div>
<div style="position:absolute;right:491px;top:653.42px;font-family:'Liberation Mono', monospace;font-size:11.5px;line-height:11.5px;color:#f2f2f2;font-weight:normal;white-space:nowrap;text-align:right;">Max</div>
<div style="position:absolute;right:435px;top:653.42px;font-family:'Liberation Mono', monospace;font-size:11.5px;line-height:11.5px;color:#f2f2f2;font-weight:normal;white-space:nowrap;text-align:right;">Delta</div>
<div style="position:absolute;left:1720px;top:669.43px;font-family:'Liberation Mono', monospace;font-size:11.5px;line-height:11.5px;color:#f2f2f2;font-weight:normal;white-space:nowrap;">RPM:</div>
<div style="position:absolute;right:603px;top:669.43px;font-family:'Liberation Mono', monospace;font-size:11.5px;line-height:11.5px;color:#f2f2f2;font-weight:normal;white-space:nowrap;text-align:right;">2150</div>
<div style="position:absolute;right:546px;top:669.43px;font-family:'Liberation Mono', monospace;font-size:11.5px;line-height:11.5px;color:#f2f2f2;font-weight:normal;white-space:nowrap;text-align:right;">1830</div>
<div style="position:absolute;right:491px;top:669.43px;font-family:'Liberation Mono', monospace;font-size:11.5px;line-height:11.5px;color:#f2f2f2;font-weight:normal;white-space:nowrap;text-align:right;">2314</div>
<div style="position:absolute;right:435px;top:669.43px;font-family:'Liberation Mono', monospace;font-size:11.5px;line-height:11.5px;color:#f2f2f2;font-weight:normal;white-space:nowrap;text-align:right;">193.0</div>
<div style="position:absolute;left:1720px;top:685.44px;font-family:'Liberation Mono', monospace;font-size:11.5px;line-height:11.5px;color:#f2f2f2;font-weight:normal;white-space:nowrap;">Load:</div>
<div style="position:absolute;right:603px;top:685.44px;font-family:'Liberation Mono', monospace;font-size:11.5px;line-height:11.5px;color:#f2f2f2;font-weight:normal;white-space:nowrap;text-align:right;">50.28</div>
<div style="position:absolute;right:546px;top:685.44px;font-family:'Liberation Mono', monospace;font-size:11.5px;line-height:11.5px;color:#f2f2f2;font-weight:normal;white-space:nowrap;text-align:right;">26.20</div>
<div style="position:absolute;right:491px;top:685.44px;font-family:'Liberation Mono', monospace;font-size:11.5px;line-height:11.5px;color:#f2f2f2;font-weight:normal;white-space:nowrap;text-align:right;">85.70</div>
<div style="position:absolute;right:435px;top:685.44px;font-family:'Liberation Mono', monospace;font-size:11.5px;line-height:11.5px;color:#f2f2f2;font-weight:normal;white-space:nowrap;text-align:right;">-59.50</div>
<div style="position:absolute;left:1720px;top:701.45px;font-family:'Liberation Mono', monospace;font-size:11.5px;line-height:11.5px;color:#f2f2f2;font-weight:normal;white-space:nowrap;">TPS:</div>
<div style="position:absolute;right:603px;top:701.45px;font-family:'Liberation Mono', monospace;font-size:11.5px;line-height:11.5px;color:#f2f2f2;font-weight:normal;white-space:nowrap;text-align:right;">-0.0588</div>
<div style="position:absolute;right:546px;top:701.45px;font-family:'Liberation Mono', monospace;font-size:11.5px;line-height:11.5px;color:#f2f2f2;font-weight:normal;white-space:nowrap;text-align:right;">-1.000</div>
<div style="position:absolute;right:491px;top:701.45px;font-family:'Liberation Mono', monospace;font-size:11.5px;line-height:11.5px;color:#f2f2f2;font-weight:normal;white-space:nowrap;text-align:right;">3.600</div>
<div style="position:absolute;right:435px;top:701.45px;font-family:'Liberation Mono', monospace;font-size:11.5px;line-height:11.5px;color:#f2f2f2;font-weight:normal;white-space:nowrap;text-align:right;">-4.600</div>
<div style="position:absolute;left:1720px;top:717.46px;font-family:'Liberation Mono', monospace;font-size:11.5px;line-height:11.5px;color:#f2f2f2;font-weight:normal;white-space:nowrap;">RPMdot:</div>
<div style="position:absolute;right:603px;top:717.46px;font-family:'Liberation Mono', monospace;font-size:11.5px;line-height:11.5px;color:#f2f2f2;font-weight:normal;white-space:nowrap;text-align:right;">3818</div>
<div style="position:absolute;right:546px;top:717.46px;font-family:'Liberation Mono', monospace;font-size:11.5px;line-height:11.5px;color:#f2f2f2;font-weight:normal;white-space:nowrap;text-align:right;">-240.0</div>
<div style="position:absolute;right:491px;top:717.46px;font-family:'Liberation Mono', monospace;font-size:11.5px;line-height:11.5px;color:#f2f2f2;font-weight:normal;white-space:nowrap;text-align:right;">7850</div>
<div style="position:absolute;right:435px;top:717.46px;font-family:'Liberation Mono', monospace;font-size:11.5px;line-height:11.5px;color:#f2f2f2;font-weight:normal;white-space:nowrap;text-align:right;">360.0</div>
<div style="position:absolute;left:1720px;top:733.47px;font-family:'Liberation Mono', monospace;font-size:11.5px;line-height:11.5px;color:#f2f2f2;font-weight:normal;white-space:nowrap;">Engine in overrun:</div>
<div style="position:absolute;right:603px;top:733.47px;font-family:'Liberation Mono', monospace;font-size:11.5px;line-height:11.5px;color:#f2f2f2;font-weight:normal;white-space:nowrap;text-align:right;">0</div>
<div style="position:absolute;right:546px;top:733.47px;font-family:'Liberation Mono', monospace;font-size:11.5px;line-height:11.5px;color:#f2f2f2;font-weight:normal;white-space:nowrap;text-align:right;">0</div>
<div style="position:absolute;right:491px;top:733.47px;font-family:'Liberation Mono', monospace;font-size:11.5px;line-height:11.5px;color:#f2f2f2;font-weight:normal;white-space:nowrap;text-align:right;">0</div>
<div style="position:absolute;right:435px;top:733.47px;font-family:'Liberation Mono', monospace;font-size:11.5px;line-height:11.5px;color:#f2f2f2;font-weight:normal;white-space:nowrap;text-align:right;">0</div>
<div style="position:absolute;left:1720px;top:749.48px;font-family:'Liberation Mono', monospace;font-size:11.5px;line-height:11.5px;color:#f2f2f2;font-weight:normal;white-space:nowrap;">PWM Idle duty:</div>
<div style="position:absolute;right:603px;top:749.48px;font-family:'Liberation Mono', monospace;font-size:11.5px;line-height:11.5px;color:#f2f2f2;font-weight:normal;white-space:nowrap;text-align:right;">20.80</div>
<div style="position:absolute;right:546px;top:749.48px;font-family:'Liberation Mono', monospace;font-size:11.5px;line-height:11.5px;color:#f2f2f2;font-weight:normal;white-space:nowrap;text-align:right;">20.80</div>
<div style="position:absolute;right:491px;top:749.48px;font-family:'Liberation Mono', monospace;font-size:11.5px;line-height:11.5px;color:#f2f2f2;font-weight:normal;white-space:nowrap;text-align:right;">20.80</div>
<div style="position:absolute;right:435px;top:749.48px;font-family:'Liberation Mono', monospace;font-size:11.5px;line-height:11.5px;color:#f2f2f2;font-weight:normal;white-space:nowrap;text-align:right;">0</div>
<div style="position:absolute;left:1720px;top:765.49px;font-family:'Liberation Mono', monospace;font-size:11.5px;line-height:11.5px;color:#f2f2f2;font-weight:normal;white-space:nowrap;">Engine decelerating slowly:</div>
<div style="position:absolute;right:603px;top:765.49px;font-family:'Liberation Mono', monospace;font-size:11.5px;line-height:11.5px;color:#f2f2f2;font-weight:normal;white-space:nowrap;text-align:right;">0</div>
<div style="position:absolute;right:546px;top:765.49px;font-family:'Liberation Mono', monospace;font-size:11.5px;line-height:11.5px;color:#f2f2f2;font-weight:normal;white-space:nowrap;text-align:right;">0</div>
<div style="position:absolute;right:491px;top:765.49px;font-family:'Liberation Mono', monospace;font-size:11.5px;line-height:11.5px;color:#f2f2f2;font-weight:normal;white-space:nowrap;text-align:right;">0</div>
<div style="position:absolute;right:435px;top:765.49px;font-family:'Liberation Mono', monospace;font-size:11.5px;line-height:11.5px;color:#f2f2f2;font-weight:normal;white-space:nowrap;text-align:right;">0</div>
<div style="position:absolute;left:1720px;top:781.5px;font-family:'Liberation Mono', monospace;font-size:11.5px;line-height:11.5px;color:#f2f2f2;font-weight:normal;white-space:nowrap;">Engine idling:</div>
<div style="position:absolute;right:603px;top:781.5px;font-family:'Liberation Mono', monospace;font-size:11.5px;line-height:11.5px;color:#f2f2f2;font-weight:normal;white-space:nowrap;text-align:right;">0.824</div>
<div style="position:absolute;right:546px;top:781.5px;font-family:'Liberation Mono', monospace;font-size:11.5px;line-height:11.5px;color:#f2f2f2;font-weight:normal;white-space:nowrap;text-align:right;">0</div>
<div style="position:absolute;right:491px;top:781.5px;font-family:'Liberation Mono', monospace;font-size:11.5px;line-height:11.5px;color:#f2f2f2;font-weight:normal;white-space:nowrap;text-align:right;">1.000</div>
<div style="position:absolute;right:435px;top:781.5px;font-family:'Liberation Mono', monospace;font-size:11.5px;line-height:11.5px;color:#f2f2f2;font-weight:normal;white-space:nowrap;text-align:right;">1.000</div>
<div style="position:absolute;left:1720px;top:797.51px;font-family:'Liberation Mono', monospace;font-size:11.5px;line-height:11.5px;color:#f2f2f2;font-weight:normal;white-space:nowrap;">Gear:</div>
<div style="position:absolute;right:603px;top:797.51px;font-family:'Liberation Mono', monospace;font-size:11.5px;line-height:11.5px;color:#f2f2f2;font-weight:normal;white-space:nowrap;text-align:right;">3.000</div>
<div style="position:absolute;right:546px;top:797.51px;font-family:'Liberation Mono', monospace;font-size:11.5px;line-height:11.5px;color:#f2f2f2;font-weight:normal;white-space:nowrap;text-align:right;">3.000</div>
<div style="position:absolute;right:491px;top:797.51px;font-family:'Liberation Mono', monospace;font-size:11.5px;line-height:11.5px;color:#f2f2f2;font-weight:normal;white-space:nowrap;text-align:right;">3.000</div>
<div style="position:absolute;right:435px;top:797.51px;font-family:'Liberation Mono', monospace;font-size:11.5px;line-height:11.5px;color:#f2f2f2;font-weight:normal;white-space:nowrap;text-align:right;">0</div>
<div style="position:absolute;left:1720px;top:813.52px;font-family:'Liberation Mono', monospace;font-size:11.5px;line-height:11.5px;color:#f2f2f2;font-weight:normal;white-space:nowrap;">Knock in:</div>
<div style="position:absolute;right:603px;top:813.52px;font-family:'Liberation Mono', monospace;font-size:11.5px;line-height:11.5px;color:#f2f2f2;font-weight:normal;white-space:nowrap;text-align:right;">11.31</div>
<div style="position:absolute;right:546px;top:813.52px;font-family:'Liberation Mono', monospace;font-size:11.5px;line-height:11.5px;color:#f2f2f2;font-weight:normal;white-space:nowrap;text-align:right;">7.700</div>
<div style="position:absolute;right:491px;top:813.52px;font-family:'Liberation Mono', monospace;font-size:11.5px;line-height:11.5px;color:#f2f2f2;font-weight:normal;white-space:nowrap;text-align:right;">16.50</div>
<div style="position:absolute;right:435px;top:813.52px;font-family:'Liberation Mono', monospace;font-size:11.5px;line-height:11.5px;color:#f2f2f2;font-weight:normal;white-space:nowrap;text-align:right;">-8.800</div>
<div style="position:absolute;left:1720px;top:829.53px;font-family:'Liberation Mono', monospace;font-size:11.5px;line-height:11.5px;color:#f2f2f2;font-weight:normal;white-space:nowrap;">EGT1:</div>
<div style="position:absolute;right:603px;top:829.53px;font-family:'Liberation Mono', monospace;font-size:11.5px;line-height:11.5px;color:#f2f2f2;font-weight:normal;white-space:nowrap;text-align:right;">627.2</div>
<div style="position:absolute;right:546px;top:829.53px;font-family:'Liberation Mono', monospace;font-size:11.5px;line-height:11.5px;color:#f2f2f2;font-weight:normal;white-space:nowrap;text-align:right;">625.0</div>
<div style="position:absolute;right:491px;top:829.53px;font-family:'Liberation Mono', monospace;font-size:11.5px;line-height:11.5px;color:#f2f2f2;font-weight:normal;white-space:nowrap;text-align:right;">630.0</div>
<div style="position:absolute;right:435px;top:829.53px;font-family:'Liberation Mono', monospace;font-size:11.5px;line-height:11.5px;color:#f2f2f2;font-weight:normal;white-space:nowrap;text-align:right;">0</div>
<div style="position:absolute;left:1720px;top:845.54px;font-family:'Liberation Mono', monospace;font-size:11.5px;line-height:11.5px;color:#f2f2f2;font-weight:normal;white-space:nowrap;">Gear:</div>
<div style="position:absolute;right:603px;top:845.54px;font-family:'Liberation Mono', monospace;font-size:11.5px;line-height:11.5px;color:#f2f2f2;font-weight:normal;white-space:nowrap;text-align:right;">3.000</div>
<div style="position:absolute;right:546px;top:845.54px;font-family:'Liberation Mono', monospace;font-size:11.5px;line-height:11.5px;color:#f2f2f2;font-weight:normal;white-space:nowrap;text-align:right;">3.000</div>
<div style="position:absolute;right:491px;top:845.54px;font-family:'Liberation Mono', monospace;font-size:11.5px;line-height:11.5px;color:#f2f2f2;font-weight:normal;white-space:nowrap;text-align:right;">3.000</div>
<div style="position:absolute;right:435px;top:845.54px;font-family:'Liberation Mono', monospace;font-size:11.5px;line-height:11.5px;color:#f2f2f2;font-weight:normal;white-space:nowrap;text-align:right;">0</div>
<svg style="position:absolute;left:2133px;top:74px" width="8" height="24"><polygon points="7,0.5 7,11 0.8,5.8" fill="#000"/><polygon points="1,12 1,23 7.2,17.5" fill="#000"/></svg>
<div style="position:absolute;left:2140px;top:70px;width:417px;height:811px;border-left:2px solid #6e6e6e;border-top:2px solid #6e6e6e;border-right:1px solid #a0a0a0;border-bottom:1px solid #a0a0a0"></div>
<div style="position:absolute;left:2142px;top:72px;width:396px;height:808px;border-right:1px solid #ffffff"></div>
<svg style="position:absolute;left:2540px;top:76px" width="12" height="10"><polyline points="2,7.5 5.8,3.5 9.6,7.5" fill="none" stroke="#555" stroke-width="1.8"/></svg>
<svg style="position:absolute;left:2540px;top:866px" width="12" height="10"><polyline points="2,2.5 5.8,6.5 9.6,2.5" fill="none" stroke="#555" stroke-width="1.8"/></svg>
<svg style="position:absolute;left:2236.3px;top:78px" width="20" height="20"><rect x="0.5" y="0.5" width="19" height="19" fill="#ececec" stroke="#a9a9a9"/><circle cx="10" cy="10" r="7.8" fill="#63cf3f"/><circle cx="9.3" cy="9.3" r="6.5" fill="#7fe35a"/><polygon points="10,3.8 14.5,9 11.6,9 11.6,15.5 8.4,15.5 8.4,9 5.5,9" fill="#fff"/></svg>
<svg style="position:absolute;left:2261.3px;top:78px" width="20" height="20"><rect x="0.5" y="0.5" width="19" height="19" fill="#ececec" stroke="#a9a9a9"/><circle cx="10" cy="10" r="7.8" fill="#63cf3f"/><circle cx="9.3" cy="9.3" r="6.5" fill="#7fe35a"/><polygon points="10,16.2 14.5,11 11.6,11 11.6,4.5 8.4,4.5 8.4,11 5.5,11" fill="#fff"/></svg>
<svg style="position:absolute;left:2286.3px;top:78px" width="20" height="20"><rect x="0.5" y="0.5" width="19" height="19" fill="#ececec" stroke="#a9a9a9"/><circle cx="10" cy="10" r="7.8" fill="#000"/><rect x="5.8" y="6.9" width="8.4" height="2.2" fill="#fff"/><rect x="5.8" y="10.9" width="8.4" height="2.2" fill="#fff"/></svg>
<svg style="position:absolute;left:2311.3px;top:78px" width="20" height="20"><rect x="0.5" y="0.5" width="19" height="19" fill="#ececec" stroke="#a9a9a9"/><rect x="1.8" y="1.8" width="16.4" height="16.4" rx="1.5" fill="#000"/><path d="M10,16.3 V4.5 M5,9.5 L10,4.5 L15,9.5" stroke="#fff" stroke-width="2" fill="none"/></svg>
<svg style="position:absolute;left:2336.3px;top:78px" width="20" height="20"><rect x="0.5" y="0.5" width="19" height="19" fill="#ececec" stroke="#a9a9a9"/><rect x="1.8" y="1.8" width="16.4" height="16.4" rx="1.5" fill="#000"/><path d="M10,3.7 V15.5 M5,10.5 L10,15.5 L15,10.5" stroke="#fff" stroke-width="2" fill="none"/></svg>
<svg style="position:absolute;left:2361.2px;top:78px" width="20" height="20"><rect x="0.5" y="0.5" width="19" height="19" fill="#ececec" stroke="#a9a9a9"/><circle cx="10" cy="10" r="7.8" fill="#000"/><rect x="4.8" y="8.8" width="10.4" height="2.6" fill="#fff"/></svg>
<svg style="position:absolute;left:2386.2px;top:78px" width="20" height="20"><rect x="0.5" y="0.5" width="19" height="19" fill="#ececec" stroke="#a9a9a9"/><circle cx="10" cy="10" r="7.8" fill="#000"/><rect x="4.8" y="8.8" width="10.4" height="2.6" fill="#fff"/><rect x="8.7" y="4.8" width="2.6" height="10.4" fill="#fff"/></svg>
<svg style="position:absolute;left:2411.2px;top:78px" width="20" height="20"><rect x="0.5" y="0.5" width="19" height="19" fill="#ececec" stroke="#a9a9a9"/><circle cx="10" cy="10" r="7.8" fill="#000"/><path d="M6.3,6.3 L13.7,13.7 M13.7,6.3 L6.3,13.7" stroke="#fff" stroke-width="2.4"/></svg>
<svg style="position:absolute;left:2436.2px;top:78px" width="20" height="20"><rect x="0.5" y="0.5" width="19" height="19" fill="#ececec" stroke="#a9a9a9"/><defs><linearGradient id="pg" x1="0" y1="1" x2="1" y2="0"><stop offset="0" stop-color="#e00"/><stop offset="1" stop-color="#00c"/></linearGradient></defs><path d="M5.8,15 L14.3,6.5" stroke="url(#pg)" stroke-width="2.6" stroke-linecap="round"/></svg>
<svg style="position:absolute;left:2461.2px;top:78px" width="20" height="20"><rect x="0.5" y="0.5" width="19" height="19" fill="#ececec" stroke="#d6d6d6"/><rect x="2" y="3.4" width="15.8" height="3.4" fill="#9a9a9a"/><rect x="2" y="9.6" width="15.8" height="3.2" fill="#9a9a9a"/><rect x="2" y="15.4" width="15.8" height="3.2" fill="#9a9a9a"/></svg>
<svg style="position:absolute;left:2486.2px;top:78px" width="20" height="20"><rect x="0.5" y="0.5" width="19" height="19" fill="#ececec" stroke="#d6d6d6"/><rect x="1.8" y="1.8" width="3.2" height="15.8" fill="#9a9a9a"/><rect x="7.8" y="1.8" width="3.2" height="15.8" fill="#9a9a9a"/><rect x="13.7" y="1.8" width="3.2" height="15.8" fill="#9a9a9a"/></svg>
<svg style="position:absolute;left:2511.2px;top:78px" width="20" height="20"><rect x="0.5" y="0.5" width="19" height="19" fill="#ececec" stroke="#d6d6d6"/><rect x="2.5" y="2.5" width="13.8" height="13.8" fill="#9a9a9a"/></svg>
<svg style="position:absolute;left:2145px;top:99px" width="395" height="240" shape-rendering="crispEdges"><g transform="translate(-2145,-99)"><rect x="2170" y="101" width="363" height="206" fill="#fff"/><rect x="2148" y="101" width="20" height="1" fill="#ffffff"/><rect x="2148" y="102" width="20" height="10" fill="#c0c0c0"/><rect x="2147" y="112" width="21" height="2" fill="#777"/><rect x="2148" y="114" width="20" height="1" fill="#ffffff"/><rect x="2148" y="115" width="20" height="10" fill="#c0c0c0"/><rect x="2147" y="125" width="21" height="2" fill="#777"/><rect x="2148" y="127" width="20" height="1" fill="#ffffff"/><rect x="2148" y="128" width="20" height="10" fill="#c0c0c0"/><rect x="2147" y="138" width="21" height="2" fill="#777"/><rect x="2148" y="140" width="20" height="1" fill="#ffffff"/><rect x="2148" y="141" width="20" height="10" fill="#c0c0c0"/><rect x="2147" y="151" width="21" height="2" fill="#777"/><rect x="2148" y="153" width="20" height="1" fill="#ffffff"/><rect x="2148" y="154" width="20" height="10" fill="#c0c0c0"/><rect x="2147" y="164" width="21" height="2" fill="#777"/><rect x="2148" y="166" width="20" height="1" fill="#ffffff"/><rect x="2148" y="167" width="20" height="10" fill="#c0c0c0"/><rect x="2147" y="177" width="21" height="2" fill="#777"/><rect x="2148" y="179" width="20" height="1" fill="#ffffff"/><rect x="2148" y="180" width="20" height="10" fill="#c0c0c0"/><rect x="2147" y="190" width="21" height="2" fill="#777"/><rect x="2148" y="192" width="20" height="1" fill="#ffffff"/><rect x="2148" y="193" width="20" height="10" fill="#c0c0c0"/><rect x="2147" y="203" width="21" height="2" fill="#777"/><rect x="2148" y="205" width="20" height="1" fill="#ffffff"/><rect x="2148" y="206" width="20" height="10" fill="#c0c0c0"/><rect x="2147" y="216" width="21" height="2" fill="#777"/><rect x="2148" y="218" width="20" height="1" fill="#ffffff"/><rect x="2148" y="219" width="20" height="10" fill="#c0c0c0"/><rect x="2147" y="229" width="21" height="2" fill="#777"/><rect x="2148" y="231" width="20" height="1" fill="#ffffff"/><rect x="2148" y="232" width="20" height="10" fill="#c0c0c0"/><rect x="2147" y="242" width="21" height="2" fill="#777"/><rect x="2148" y="244" width="20" height="1" fill="#ffffff"/><rect x="2148" y="245" width="20" height="10" fill="#c0c0c0"/><rect x="2147" y="255" width="21" height="2" fill="#777"/><rect x="2148" y="257" width="20" height="1" fill="#ffffff"/><rect x="2148" y="258" width="20" height="10" fill="#c0c0c0"/><rect x="2147" y="268" width="21" height="2" fill="#777"/><rect x="2148" y="270" width="20" height="1" fill="#ffffff"/><rect x="2148" y="271" width="20" height="10" fill="#c0c0c0"/><rect x="2147" y="281" width="21" height="2" fill="#777"/><rect x="2148" y="283" width="20" height="1" fill="#ffffff"/><rect x="2148" y="284" width="20" height="10" fill="#c0c0c0"/><rect x="2147" y="294" width="21" height="2" fill="#777"/><rect x="2148" y="296" width="20" height="1" fill="#ffffff"/><rect x="2148" y="297" width="20" height="9" fill="#c0c0c0"/><rect x="2147" y="306" width="21" height="2" fill="#777"/><rect x="2168" y="101" width="2" height="206" fill="#777"/><rect x="2170" y="113" width="363" height="1" fill="#7a7a7a"/><rect x="2170" y="126" width="363" height="1" fill="#7a7a7a"/><rect x="2170" y="139" width="363" height="1" fill="#7a7a7a"/><rect x="2170" y="152" width="363" height="1" fill="#7a7a7a"/><rect x="2170" y="165" width="363" height="1" fill="#7a7a7a"/><rect x="2170" y="178" width="363" height="1" fill="#7a7a7a"/><rect x="2170" y="191" width="363" height="1" fill="#7a7a7a"/><rect x="2170" y="204" width="363" height="1" fill="#7a7a7a"/><rect x="2170" y="217" width="363" height="1" fill="#7a7a7a"/><rect x="2170" y="230" width="363" height="1" fill="#7a7a7a"/><rect x="2170" y="243" width="363" height="1" fill="#7a7a7a"/><rect x="2170" y="256" width="363" height="1" fill="#7a7a7a"/><rect x="2170" y="269" width="363" height="1" fill="#7a7a7a"/><rect x="2170" y="282" width="363" height="1" fill="#7a7a7a"/><rect x="2170" y="295" width="363" height="1" fill="#7a7a7a"/><rect x="2193" y="101" width="1" height="206" fill="#7a7a7a"/><rect x="2216" y="101" width="1" height="206" fill="#7a7a7a"/><rect x="2239" y="101" width="1" height="206" fill="#7a7a7a"/><rect x="2262" y="101" width="1" height="206" fill="#7a7a7a"/><rect x="2285" y="101" width="1" height="206" fill="#7a7a7a"/><rect x="2307" y="101" width="1" height="206" fill="#7a7a7a"/><rect x="2330" y="101" width="1" height="206" fill="#7a7a7a"/><rect x="2352" y="101" width="1" height="206" fill="#7a7a7a"/><rect x="2375" y="101" width="1" height="206" fill="#7a7a7a"/><rect x="2397" y="101" width="1" height="206" fill="#7a7a7a"/><rect x="2420" y="101" width="1" height="206" fill="#7a7a7a"/><rect x="2442" y="101" width="1" height="206" fill="#7a7a7a"/><rect x="2465" y="101" width="1" height="206" fill="#7a7a7a"/><rect x="2487" y="101" width="1" height="206" fill="#7a7a7a"/><rect x="2510" y="101" width="1" height="206" fill="#7a7a7a"/><rect x="2532" y="101" width="1" height="206" fill="#7a7a7a"/><rect x="2172" y="308" width="22" height="23" fill="#c0c0c0"/><rect x="2172" y="330" width="22" height="2" fill="#777"/><rect x="2193" y="308" width="1" height="24" fill="#777"/><rect x="2196" y="308" width="21" height="23" fill="#c0c0c0"/><rect x="2196" y="330" width="21" height="2" fill="#777"/><rect x="2216" y="308" width="1" height="24" fill="#777"/><rect x="2219" y="308" width="21" height="23" fill="#c0c0c0"/><rect x="2219" y="330" width="21" height="2" fill="#777"/><rect x="2239" y="308" width="1" height="24" fill="#777"/><rect x="2242" y="308" width="21" height="23" fill="#c0c0c0"/><rect x="2242" y="330" width="21" height="2" fill="#777"/><rect x="2262" y="308" width="1" height="24" fill="#777"/><rect x="2265" y="308" width="21" height="23" fill="#c0c0c0"/><rect x="2265" y="330" width="21" height="2" fill="#777"/><rect x="2285" y="308" width="1" height="24" fill="#777"/><rect x="2288" y="308" width="20" height="23" fill="#c0c0c0"/><rect x="2288" y="330" width="20" height="2" fill="#777"/><rect x="2307" y="308" width="1" height="24" fill="#777"/><rect x="2310" y="308" width="21" height="23" fill="#c0c0c0"/><rect x="2310" y="330" width="21" height="2" fill="#777"/><rect x="2330" y="308" width="1" height="24" fill="#777"/><rect x="2333" y="308" width="20" height="23" fill="#c0c0c0"/><rect x="2333" y="330" width="20" height="2" fill="#777"/><rect x="2352" y="308" width="1" height="24" fill="#777"/><rect x="2355" y="308" width="21" height="23" fill="#c0c0c0"/><rect x="2355" y="330" width="21" height="2" fill="#777"/><rect x="2375" y="308" width="1" height="24" fill="#777"/><rect x="2378" y="308" width="20" height="23" fill="#c0c0c0"/><rect x="2378" y="330" width="20" height="2" fill="#777"/><rect x="2397" y="308" width="1" height="24" fill="#777"/><rect x="2400" y="308" width="21" height="23" fill="#c0c0c0"/><rect x="2400" y="330" width="21" height="2" fill="#777"/><rect x="2420" y="308" width="1" height="24" fill="#777"/><rect x="2423" y="308" width="20" height="23" fill="#c0c0c0"/><rect x="2423" y="330" width="20" height="2" fill="#777"/><rect x="2442" y="308" width="1" height="24" fill="#777"/><rect x="2445" y="308" width="21" height="23" fill="#c0c0c0"/><rect x="2445" y="330" width="21" height="2" fill="#777"/><rect x="2465" y="308" width="1" height="24" fill="#777"/><rect x="2468" y="308" width="20" height="23" fill="#c0c0c0"/><rect x="2468" y="330" width="20" height="2" fill="#777"/><rect x="2487" y="308" width="1" height="24" fill="#777"/><rect x="2490" y="308" width="21" height="23" fill="#c0c0c0"/><rect x="2490" y="330" width="21" height="2" fill="#777"/><rect x="2510" y="308" width="1" height="24" fill="#777"/><rect x="2513" y="308" width="20" height="23" fill="#c0c0c0"/><rect x="2513" y="330" width="20" height="2" fill="#777"/><rect x="2532" y="308" width="1" height="24" fill="#777"/><rect x="2148.5" y="308.5" width="20" height="22" fill="#efefef" stroke="#dcdcdc"/></g></svg>
<svg style="position:absolute;left:2145px;top:308px" width="30" height="30"><g transform="translate(-2145,-308)"><path d="M2154.5,311.5 L2151,315.5 L2153.4,315.5 L2153.4,324.5 L2162.5,324.5 L2162.5,327 L2166.5,323.2 L2162.5,319.5 L2162.5,322 L2155.8,322 L2155.8,315.5 L2158,315.5 Z" fill="#777"/></g></svg>
<div style="position:absolute;left:2143.3px;top:338.5px;width:127.2px;height:20.5px;border:1px solid #adadad;background:linear-gradient(#f4f4f4,#e3e3e3)"></div>
<div style="position:absolute;left:2143.3px;top:338.5px;width:127.2px;height:20.5px;font-family:'Liberation Sans', sans-serif;font-size:11.2px;line-height:20.5px;text-align:center;color:#111;white-space:nowrap">Open Tune</div>
<div style="position:absolute;left:2275px;top:338.5px;width:127.8px;height:20.5px;border:1px solid #adadad;background:linear-gradient(#f4f4f4,#e3e3e3)"></div>
<div style="position:absolute;left:2275px;top:338.5px;width:127.8px;height:20.5px;font-family:'Liberation Sans', sans-serif;font-size:11.2px;line-height:20.5px;text-align:center;color:#111;white-space:nowrap">Save Tune</div>
<div style="position:absolute;left:2143.3px;top:361.4px;width:127.2px;height:20.5px;border:1px solid #adadad;background:linear-gradient(#f4f4f4,#e3e3e3)"></div>
<div style="position:absolute;left:2143.3px;top:361.4px;width:127.2px;height:20.5px;font-family:'Liberation Sans', sans-serif;font-size:11.2px;line-height:20.5px;text-align:center;color:#111;white-space:nowrap">VE Analyze</div>
<div style="position:absolute;left:2275px;top:361.4px;width:127.8px;height:20.5px;border:1px solid #adadad;background:linear-gradient(#f4f4f4,#e3e3e3)"></div>
<div style="position:absolute;left:2275px;top:361.4px;width:127.8px;height:20.5px;font-family:'Liberation Sans', sans-serif;font-size:11.2px;line-height:20.5px;text-align:center;color:#111;white-space:nowrap">Save Tune As</div>
<div style="position:absolute;left:2406px;top:337px;width:132px;height:23px;border-top:1px solid #6e6e6e;border-left:1px solid #6e6e6e"></div>
<div style="position:absolute;left:2406px;top:360px;width:132px;height:22px;border-top:1px solid #6e6e6e;border-left:1px solid #6e6e6e"></div>
<svg style="position:absolute;left:2236.3px;top:389px" width="20" height="20"><rect x="0.5" y="0.5" width="19" height="19" fill="#ececec" stroke="#a9a9a9"/><circle cx="10" cy="10" r="7.8" fill="#63cf3f"/><circle cx="9.3" cy="9.3" r="6.5" fill="#7fe35a"/><polygon points="10,3.8 14.5,9 11.6,9 11.6,15.5 8.4,15.5 8.4,9 5.5,9" fill="#fff"/></svg>
<svg style="position:absolute;left:2261.3px;top:389px" width="20" height="20"><rect x="0.5" y="0.5" width="19" height="19" fill="#ececec" stroke="#a9a9a9"/><circle cx="10" cy="10" r="7.8" fill="#63cf3f"/><circle cx="9.3" cy="9.3" r="6.5" fill="#7fe35a"/><polygon points="10,16.2 14.5,11 11.6,11 11.6,4.5 8.4,4.5 8.4,11 5.5,11" fill="#fff"/></svg>
<svg style="position:absolute;left:2286.3px;top:389px" width="20" height="20"><rect x="0.5" y="0.5" width="19" height="19" fill="#ececec" stroke="#a9a9a9"/><circle cx="10" cy="10" r="7.8" fill="#000"/><rect x="5.8" y="6.9" width="8.4" height="2.2" fill="#fff"/><rect x="5.8" y="10.9" width="8.4" height="2.2" fill="#fff"/></svg>
<svg style="position:absolute;left:2311.3px;top:389px" width="20" height="20"><rect x="0.5" y="0.5" width="19" height="19" fill="#ececec" stroke="#a9a9a9"/><rect x="1.8" y="1.8" width="16.4" height="16.4" rx="1.5" fill="#000"/><path d="M10,16.3 V4.5 M5,9.5 L10,4.5 L15,9.5" stroke="#fff" stroke-width="2" fill="none"/></svg>
<svg style="position:absolute;left:2336.3px;top:389px" width="20" height="20"><rect x="0.5" y="0.5" width="19" height="19" fill="#ececec" stroke="#a9a9a9"/><rect x="1.8" y="1.8" width="16.4" height="16.4" rx="1.5" fill="#000"/><path d="M10,3.7 V15.5 M5,10.5 L10,15.5 L15,10.5" stroke="#fff" stroke-width="2" fill="none"/></svg>
<svg style="position:absolute;left:2361.2px;top:389px" width="20" height="20"><rect x="0.5" y="0.5" width="19" height="19" fill="#ececec" stroke="#a9a9a9"/><circle cx="10" cy="10" r="7.8" fill="#000"/><rect x="4.8" y="8.8" width="10.4" height="2.6" fill="#fff"/></svg>
<svg style="position:absolute;left:2386.2px;top:389px" width="20" height="20"><rect x="0.5" y="0.5" width="19" height="19" fill="#ececec" stroke="#a9a9a9"/><circle cx="10" cy="10" r="7.8" fill="#000"/><rect x="4.8" y="8.8" width="10.4" height="2.6" fill="#fff"/><rect x="8.7" y="4.8" width="2.6" height="10.4" fill="#fff"/></svg>
<svg style="position:absolute;left:2411.2px;top:389px" width="20" height="20"><rect x="0.5" y="0.5" width="19" height="19" fill="#ececec" stroke="#a9a9a9"/><circle cx="10" cy="10" r="7.8" fill="#000"/><path d="M6.3,6.3 L13.7,13.7 M13.7,6.3 L6.3,13.7" stroke="#fff" stroke-width="2.4"/></svg>
<svg style="position:absolute;left:2436.2px;top:389px" width="20" height="20"><rect x="0.5" y="0.5" width="19" height="19" fill="#ececec" stroke="#a9a9a9"/><defs><linearGradient id="pg" x1="0" y1="1" x2="1" y2="0"><stop offset="0" stop-color="#e00"/><stop offset="1" stop-color="#00c"/></linearGradient></defs><path d="M5.8,15 L14.3,6.5" stroke="url(#pg)" stroke-width="2.6" stroke-linecap="round"/></svg>
<svg style="position:absolute;left:2461.2px;top:389px" width="20" height="20"><rect x="0.5" y="0.5" width="19" height="19" fill="#ececec" stroke="#d6d6d6"/><rect x="2" y="3.4" width="15.8" height="3.4" fill="#9a9a9a"/><rect x="2" y="9.6" width="15.8" height="3.2" fill="#9a9a9a"/><rect x="2" y="15.4" width="15.8" height="3.2" fill="#9a9a9a"/></svg>
<svg style="position:absolute;left:2486.2px;top:389px" width="20" height="20"><rect x="0.5" y="0.5" width="19" height="19" fill="#ececec" stroke="#d6d6d6"/><rect x="1.8" y="1.8" width="3.2" height="15.8" fill="#9a9a9a"/><rect x="7.8" y="1.8" width="3.2" height="15.8" fill="#9a9a9a"/><rect x="13.7" y="1.8" width="3.2" height="15.8" fill="#9a9a9a"/></svg>
<svg style="position:absolute;left:2511.2px;top:389px" width="20" height="20"><rect x="0.5" y="0.5" width="19" height="19" fill="#ececec" stroke="#d6d6d6"/><rect x="2.5" y="2.5" width="13.8" height="13.8" fill="#9a9a9a"/></svg>
<svg style="position:absolute;left:2145px;top:410px" width="395" height="240" shape-rendering="crispEdges"><g transform="translate(-2145,-410)"><rect x="2170" y="412" width="363" height="206" fill="#fff"/><rect x="2148" y="412" width="20" height="1" fill="#ffffff"/><rect x="2148" y="413" width="20" height="10" fill="#c0c0c0"/><rect x="2147" y="423" width="21" height="2" fill="#777"/><rect x="2148" y="425" width="20" height="1" fill="#ffffff"/><rect x="2148" y="426" width="20" height="10" fill="#c0c0c0"/><rect x="2147" y="436" width="21" height="2" fill="#777"/><rect x="2148" y="438" width="20" height="1" fill="#ffffff"/><rect x="2148" y="439" width="20" height="10" fill="#c0c0c0"/><rect x="2147" y="449" width="21" height="2" fill="#777"/><rect x="2148" y="451" width="20" height="1" fill="#ffffff"/><rect x="2148" y="452" width="20" height="10" fill="#c0c0c0"/><rect x="2147" y="462" width="21" height="2" fill="#777"/><rect x="2148" y="464" width="20" height="1" fill="#ffffff"/><rect x="2148" y="465" width="20" height="10" fill="#c0c0c0"/><rect x="2147" y="475" width="21" height="2" fill="#777"/><rect x="2148" y="477" width="20" height="1" fill="#ffffff"/><rect x="2148" y="478" width="20" height="10" fill="#c0c0c0"/><rect x="2147" y="488" width="21" height="2" fill="#777"/><rect x="2148" y="490" width="20" height="1" fill="#ffffff"/><rect x="2148" y="491" width="20" height="10" fill="#c0c0c0"/><rect x="2147" y="501" width="21" height="2" fill="#777"/><rect x="2148" y="503" width="20" height="1" fill="#ffffff"/><rect x="2148" y="504" width="20" height="10" fill="#c0c0c0"/><rect x="2147" y="514" width="21" height="2" fill="#777"/><rect x="2148" y="516" width="20" height="1" fill="#ffffff"/><rect x="2148" y="517" width="20" height="10" fill="#c0c0c0"/><rect x="2147" y="527" width="21" height="2" fill="#777"/><rect x="2148" y="529" width="20" height="1" fill="#ffffff"/><rect x="2148" y="530" width="20" height="10" fill="#c0c0c0"/><rect x="2147" y="540" width="21" height="2" fill="#777"/><rect x="2148" y="542" width="20" height="1" fill="#ffffff"/><rect x="2148" y="543" width="20" height="10" fill="#c0c0c0"/><rect x="2147" y="553" width="21" height="2" fill="#777"/><rect x="2148" y="555" width="20" height="1" fill="#ffffff"/><rect x="2148" y="556" width="20" height="10" fill="#c0c0c0"/><rect x="2147" y="566" width="21" height="2" fill="#777"/><rect x="2148" y="568" width="20" height="1" fill="#ffffff"/><rect x="2148" y="569" width="20" height="10" fill="#c0c0c0"/><rect x="2147" y="579" width="21" height="2" fill="#777"/><rect x="2148" y="581" width="20" height="1" fill="#ffffff"/><rect x="2148" y="582" width="20" height="10" fill="#c0c0c0"/><rect x="2147" y="592" width="21" height="2" fill="#777"/><rect x="2148" y="594" width="20" height="1" fill="#ffffff"/><rect x="2148" y="595" width="20" height="10" fill="#c0c0c0"/><rect x="2147" y="605" width="21" height="2" fill="#777"/><rect x="2148" y="607" width="20" height="1" fill="#ffffff"/><rect x="2148" y="608" width="20" height="9" fill="#c0c0c0"/><rect x="2147" y="617" width="21" height="2" fill="#777"/><rect x="2168" y="412" width="2" height="206" fill="#777"/><rect x="2170" y="424" width="363" height="1" fill="#7a7a7a"/><rect x="2170" y="437" width="363" height="1" fill="#7a7a7a"/><rect x="2170" y="450" width="363" height="1" fill="#7a7a7a"/><rect x="2170" y="463" width="363" height="1" fill="#7a7a7a"/><rect x="2170" y="476" width="363" height="1" fill="#7a7a7a"/><rect x="2170" y="489" width="363" height="1" fill="#7a7a7a"/><rect x="2170" y="502" width="363" height="1" fill="#7a7a7a"/><rect x="2170" y="515" width="363" height="1" fill="#7a7a7a"/><rect x="2170" y="528" width="363" height="1" fill="#7a7a7a"/><rect x="2170" y="541" width="363" height="1" fill="#7a7a7a"/><rect x="2170" y="554" width="363" height="1" fill="#7a7a7a"/><rect x="2170" y="567" width="363" height="1" fill="#7a7a7a"/><rect x="2170" y="580" width="363" height="1" fill="#7a7a7a"/><rect x="2170" y="593" width="363" height="1" fill="#7a7a7a"/><rect x="2170" y="606" width="363" height="1" fill="#7a7a7a"/><rect x="2193" y="412" width="1" height="206" fill="#7a7a7a"/><rect x="2216" y="412" width="1" height="206" fill="#7a7a7a"/><rect x="2239" y="412" width="1" height="206" fill="#7a7a7a"/><rect x="2262" y="412" width="1" height="206" fill="#7a7a7a"/><rect x="2285" y="412" width="1" height="206" fill="#7a7a7a"/><rect x="2307" y="412" width="1" height="206" fill="#7a7a7a"/><rect x="2330" y="412" width="1" height="206" fill="#7a7a7a"/><rect x="2352" y="412" width="1" height="206" fill="#7a7a7a"/><rect x="2375" y="412" width="1" height="206" fill="#7a7a7a"/><rect x="2397" y="412" width="1" height="206" fill="#7a7a7a"/><rect x="2420" y="412" width="1" height="206" fill="#7a7a7a"/><rect x="2442" y="412" width="1" height="206" fill="#7a7a7a"/><rect x="2465" y="412" width="1" height="206" fill="#7a7a7a"/><rect x="2487" y="412" width="1" height="206" fill="#7a7a7a"/><rect x="2510" y="412" width="1" height="206" fill="#7a7a7a"/><rect x="2532" y="412" width="1" height="206" fill="#7a7a7a"/><rect x="2172" y="619" width="22" height="23" fill="#c0c0c0"/><rect x="2172" y="641" width="22" height="2" fill="#777"/><rect x="2193" y="619" width="1" height="24" fill="#777"/><rect x="2196" y="619" width="21" height="23" fill="#c0c0c0"/><rect x="2196" y="641" width="21" height="2" fill="#777"/><rect x="2216" y="619" width="1" height="24" fill="#777"/><rect x="2219" y="619" width="21" height="23" fill="#c0c0c0"/><rect x="2219" y="641" width="21" height="2" fill="#777"/><rect x="2239" y="619" width="1" height="24" fill="#777"/><rect x="2242" y="619" width="21" height="23" fill="#c0c0c0"/><rect x="2242" y="641" width="21" height="2" fill="#777"/><rect x="2262" y="619" width="1" height="24" fill="#777"/><rect x="2265" y="619" width="21" height="23" fill="#c0c0c0"/><rect x="2265" y="641" width="21" height="2" fill="#777"/><rect x="2285" y="619" width="1" height="24" fill="#777"/><rect x="2288" y="619" width="20" height="23" fill="#c0c0c0"/><rect x="2288" y="641" width="20" height="2" fill="#777"/><rect x="2307" y="619" width="1" height="24" fill="#777"/><rect x="2310" y="619" width="21" height="23" fill="#c0c0c0"/><rect x="2310" y="641" width="21" height="2" fill="#777"/><rect x="2330" y="619" width="1" height="24" fill="#777"/><rect x="2333" y="619" width="20" height="23" fill="#c0c0c0"/><rect x="2333" y="641" width="20" height="2" fill="#777"/><rect x="2352" y="619" width="1" height="24" fill="#777"/><rect x="2355" y="619" width="21" height="23" fill="#c0c0c0"/><rect x="2355" y="641" width="21" height="2" fill="#777"/><rect x="2375" y="619" width="1" height="24" fill="#777"/><rect x="2378" y="619" width="20" height="23" fill="#c0c0c0"/><rect x="2378" y="641" width="20" height="2" fill="#777"/><rect x="2397" y="619" width="1" height="24" fill="#777"/><rect x="2400" y="619" width="21" height="23" fill="#c0c0c0"/><rect x="2400" y="641" width="21" height="2" fill="#777"/><rect x="2420" y="619" width="1" height="24" fill="#777"/><rect x="2423" y="619" width="20" height="23" fill="#c0c0c0"/><rect x="2423" y="641" width="20" height="2" fill="#777"/><rect x="2442" y="619" width="1" height="24" fill="#777"/><rect x="2445" y="619" width="21" height="23" fill="#c0c0c0"/><rect x="2445" y="641" width="21" height="2" fill="#777"/><rect x="2465" y="619" width="1" height="24" fill="#777"/><rect x="2468" y="619" width="20" height="23" fill="#c0c0c0"/><rect x="2468" y="641" width="20" height="2" fill="#777"/><rect x="2487" y="619" width="1" height="24" fill="#777"/><rect x="2490" y="619" width="21" height="23" fill="#c0c0c0"/><rect x="2490" y="641" width="21" height="2" fill="#777"/><rect x="2510" y="619" width="1" height="24" fill="#777"/><rect x="2513" y="619" width="20" height="23" fill="#c0c0c0"/><rect x="2513" y="641" width="20" height="2" fill="#777"/><rect x="2532" y="619" width="1" height="24" fill="#777"/><rect x="2148.5" y="619.5" width="20" height="22" fill="#efefef" stroke="#dcdcdc"/></g></svg>
<svg style="position:absolute;left:2145px;top:619px" width="30" height="30"><g transform="translate(-2145,-619)"><path d="M2154.5,622.5 L2151,626.5 L2153.4,626.5 L2153.4,635.5 L2162.5,635.5 L2162.5,638 L2166.5,634.2 L2162.5,630.5 L2162.5,633 L2155.8,633 L2155.8,626.5 L2158,626.5 Z" fill="#777"/></g></svg>
<div style="position:absolute;left:2px;top:889px;width:2556px;height:486px;border-top:2px solid #8a8a8a;border-left:2px solid #8a8a8a"></div>
<svg style="position:absolute;left:5px;top:883px" width="24" height="6"><polygon points="0.5,6 6,0.5 11.5,6" fill="#000"/><polygon points="12,0.5 23.5,0.5 17.7,6" fill="#000"/></svg>
<div style="position:absolute;left:4px;top:900px;font-family:'Liberation Sans', sans-serif;font-size:10.9px;line-height:10.9px;color:#111;font-weight:normal;white-space:nowrap;">Record 156286 of 165281 - Zoom: 8.00x - Play speed: 100.0%</div>
<div style="position:absolute;left:6px;top:924px;width:364px;height:45px;border-top:1px solid #a3a3a3;border-left:1px solid #a3a3a3;border-right:1px solid #fff;border-bottom:1px solid #fff;box-shadow:inset 1px 1px 0 #fff"></div><div style="position:absolute;left:6px;top:969px;width:364px;height:45px;border-top:1px solid #a3a3a3;border-left:1px solid #a3a3a3;border-right:1px solid #fff;border-bottom:1px solid #fff;box-shadow:inset 1px 1px 0 #fff"></div><div style="position:absolute;left:6px;top:1014px;width:364px;height:45px;border-top:1px solid #a3a3a3;border-left:1px solid #a3a3a3;border-right:1px solid #fff;border-bottom:1px solid #fff;box-shadow:inset 1px 1px 0 #fff"></div><div style="position:absolute;left:6px;top:1059px;width:364px;height:45px;border-top:1px solid #a3a3a3;border-left:1px solid #a3a3a3;border-right:1px solid #fff;border-bottom:1px solid #fff;box-shadow:inset 1px 1px 0 #fff"></div><div style="position:absolute;left:6px;top:1104px;width:364px;height:45px;border-top:1px solid #a3a3a3;border-left:1px solid #a3a3a3;border-right:1px solid #fff;border-bottom:1px solid #fff;box-shadow:inset 1px 1px 0 #fff"></div><div style="position:absolute;left:6px;top:1149px;width:364px;height:45px;border-top:1px solid #a3a3a3;border-left:1px solid #a3a3a3;border-right:1px solid #fff;border-bottom:1px solid #fff;box-shadow:inset 1px 1px 0 #fff"></div><div style="position:absolute;left:6px;top:1194px;width:364px;height:45px;border-top:1px solid #a3a3a3;border-left:1px solid #a3a3a3;border-right:1px solid #fff;border-bottom:1px solid #fff;box-shadow:inset 1px 1px 0 #fff"></div><div style="position:absolute;left:6px;top:1239px;width:364px;height:45px;border-top:1px solid #a3a3a3;border-left:1px solid #a3a3a3;border-right:1px solid #fff;border-bottom:1px solid #fff;box-shadow:inset 1px 1px 0 #fff"></div><div style="position:absolute;left:6px;top:1284px;width:364px;height:45px;border-top:1px solid #a3a3a3;border-left:1px solid #a3a3a3;border-right:1px solid #fff;border-bottom:1px solid #fff;box-shadow:inset 1px 1px 0 #fff"></div><div style="position:absolute;left:6px;top:1329px;width:364px;height:45px;border-top:1px solid #a3a3a3;border-left:1px solid #a3a3a3;border-right:1px solid #fff;border-bottom:1px solid #fff;box-shadow:inset 1px 1px 0 #fff"></div><div style="position:absolute;left:370px;top:924px;width:364px;height:45px;border-top:1px solid #a3a3a3;border-left:1px solid #a3a3a3;border-right:1px solid #fff;border-bottom:1px solid #fff;box-shadow:inset 1px 1px 0 #fff"></div><div style="position:absolute;left:370px;top:969px;width:364px;height:45px;border-top:1px solid #a3a3a3;border-left:1px solid #a3a3a3;border-right:1px solid #fff;border-bottom:1px solid #fff;box-shadow:inset 1px 1px 0 #fff"></div><div style="position:absolute;left:370px;top:1014px;width:364px;height:45px;border-top:1px solid #a3a3a3;border-left:1px solid #a3a3a3;border-right:1px solid #fff;border-bottom:1px solid #fff;box-shadow:inset 1px 1px 0 #fff"></div><div style="position:absolute;left:370px;top:1059px;width:364px;height:45px;border-top:1px solid #a3a3a3;border-left:1px solid #a3a3a3;border-right:1px solid #fff;border-bottom:1px solid #fff;box-shadow:inset 1px 1px 0 #fff"></div><div style="position:absolute;left:370px;top:1104px;width:364px;height:45px;border-top:1px solid #a3a3a3;border-left:1px solid #a3a3a3;border-right:1px solid #fff;border-bottom:1px solid #fff;box-shadow:inset 1px 1px 0 #fff"></div><div style="position:absolute;left:370px;top:1149px;width:364px;height:45px;border-top:1px solid #a3a3a3;border-left:1px solid #a3a3a3;border-right:1px solid #fff;border-bottom:1px solid #fff;box-shadow:inset 1px 1px 0 #fff"></div><div style="position:absolute;left:370px;top:1194px;width:364px;height:45px;border-top:1px solid #a3a3a3;border-left:1px solid #a3a3a3;border-right:1px solid #fff;border-bottom:1px solid #fff;box-shadow:inset 1px 1px 0 #fff"></div><div style="position:absolute;left:370px;top:1239px;width:364px;height:45px;border-top:1px solid #a3a3a3;border-left:1px solid #a3a3a3;border-right:1px solid #fff;border-bottom:1px solid #fff;box-shadow:inset 1px 1px 0 #fff"></div><div style="position:absolute;left:370px;top:1284px;width:364px;height:45px;border-top:1px solid #a3a3a3;border-left:1px solid #a3a3a3;border-right:1px solid #fff;border-bottom:1px solid #fff;box-shadow:inset 1px 1px 0 #fff"></div><div style="position:absolute;left:370px;top:1329px;width:364px;height:45px;border-top:1px solid #a3a3a3;border-left:1px solid #a3a3a3;border-right:1px solid #fff;border-bottom:1px solid #fff;box-shadow:inset 1px 1px 0 #fff"></div><div style="position:absolute;left:734px;top:924px;width:364px;height:45px;border-top:1px solid #a3a3a3;border-left:1px solid #a3a3a3;border-right:1px solid #fff;border-bottom:1px solid #fff;box-shadow:inset 1px 1px 0 #fff"></div><div style="position:absolute;left:734px;top:969px;width:364px;height:45px;border-top:1px solid #a3a3a3;border-left:1px solid #a3a3a3;border-right:1px solid #fff;border-bottom:1px solid #fff;box-shadow:inset 1px 1px 0 #fff"></div><div style="position:absolute;left:734px;top:1014px;width:364px;height:45px;border-top:1px solid #a3a3a3;border-left:1px solid #a3a3a3;border-right:1px solid #fff;border-bottom:1px solid #fff;box-shadow:inset 1px 1px 0 #fff"></div><div style="position:absolute;left:734px;top:1059px;width:364px;height:45px;border-top:1px solid #a3a3a3;border-left:1px solid #a3a3a3;border-right:1px solid #fff;border-bottom:1px solid #fff;box-shadow:inset 1px 1px 0 #fff"></div><div style="position:absolute;left:734px;top:1104px;width:364px;height:45px;border-top:1px solid #a3a3a3;border-left:1px solid #a3a3a3;border-right:1px solid #fff;border-bottom:1px solid #fff;box-shadow:inset 1px 1px 0 #fff"></div><div style="position:absolute;left:734px;top:1149px;width:364px;height:45px;border-top:1px solid #a3a3a3;border-left:1px solid #a3a3a3;border-right:1px solid #fff;border-bottom:1px solid #fff;box-shadow:inset 1px 1px 0 #fff"></div><div style="position:absolute;left:734px;top:1194px;width:364px;height:45px;border-top:1px solid #a3a3a3;border-left:1px solid #a3a3a3;border-right:1px solid #fff;border-bottom:1px solid #fff;box-shadow:inset 1px 1px 0 #fff"></div><div style="position:absolute;left:734px;top:1239px;width:364px;height:45px;border-top:1px solid #a3a3a3;border-left:1px solid #a3a3a3;border-right:1px solid #fff;border-bottom:1px solid #fff;box-shadow:inset 1px 1px 0 #fff"></div><div style="position:absolute;left:734px;top:1284px;width:364px;height:45px;border-top:1px solid #a3a3a3;border-left:1px solid #a3a3a3;border-right:1px solid #fff;border-bottom:1px solid #fff;box-shadow:inset 1px 1px 0 #fff"></div><div style="position:absolute;left:734px;top:1329px;width:364px;height:45px;border-top:1px solid #a3a3a3;border-left:1px solid #a3a3a3;border-right:1px solid #fff;border-bottom:1px solid #fff;box-shadow:inset 1px 1px 0 #fff"></div><div style="position:absolute;left:1098px;top:924px;width:364px;height:45px;border-top:1px solid #a3a3a3;border-left:1px solid #a3a3a3;border-right:1px solid #fff;border-bottom:1px solid #fff;box-shadow:inset 1px 1px 0 #fff"></div><div style="position:absolute;left:1098px;top:969px;width:364px;height:45px;border-top:1px solid #a3a3a3;border-left:1px solid #a3a3a3;border-right:1px solid #fff;border-bottom:1px solid #fff;box-shadow:inset 1px 1px 0 #fff"></div><div style="position:absolute;left:1098px;top:1014px;width:364px;height:45px;border-top:1px solid #a3a3a3;border-left:1px solid #a3a3a3;border-right:1px solid #fff;border-bottom:1px solid #fff;box-shadow:inset 1px 1px 0 #fff"></div><div style="position:absolute;left:1098px;top:1059px;width:364px;height:45px;border-top:1px solid #a3a3a3;border-left:1px solid #a3a3a3;border-right:1px solid #fff;border-bottom:1px solid #fff;box-shadow:inset 1px 1px 0 #fff"></div><div style="position:absolute;left:1098px;top:1104px;width:364px;height:45px;border-top:1px solid #a3a3a3;border-left:1px solid #a3a3a3;border-right:1px solid #fff;border-bottom:1px solid #fff;box-shadow:inset 1px 1px 0 #fff"></div><div style="position:absolute;left:1098px;top:1149px;width:364px;height:45px;border-top:1px solid #a3a3a3;border-left:1px solid #a3a3a3;border-right:1px solid #fff;border-bottom:1px solid #fff;box-shadow:inset 1px 1px 0 #fff"></div><div style="position:absolute;left:1098px;top:1194px;width:364px;height:45px;border-top:1px solid #a3a3a3;border-left:1px solid #a3a3a3;border-right:1px solid #fff;border-bottom:1px solid #fff;box-shadow:inset 1px 1px 0 #fff"></div><div style="position:absolute;left:1098px;top:1239px;width:364px;height:45px;border-top:1px solid #a3a3a3;border-left:1px solid #a3a3a3;border-right:1px solid #fff;border-bottom:1px solid #fff;box-shadow:inset 1px 1px 0 #fff"></div><div style="position:absolute;left:1098px;top:1284px;width:364px;height:45px;border-top:1px solid #a3a3a3;border-left:1px solid #a3a3a3;border-right:1px solid #fff;border-bottom:1px solid #fff;box-shadow:inset 1px 1px 0 #fff"></div><div style="position:absolute;left:1098px;top:1329px;width:364px;height:45px;border-top:1px solid #a3a3a3;border-left:1px solid #a3a3a3;border-right:1px solid #fff;border-bottom:1px solid #fff;box-shadow:inset 1px 1px 0 #fff"></div><div style="position:absolute;left:1462px;top:924px;width:364px;height:45px;border-top:1px solid #a3a3a3;border-left:1px solid #a3a3a3;border-right:1px solid #fff;border-bottom:1px solid #fff;box-shadow:inset 1px 1px 0 #fff"></div><div style="position:absolute;left:1462px;top:969px;width:364px;height:45px;border-top:1px solid #a3a3a3;border-left:1px solid #a3a3a3;border-right:1px solid #fff;border-bottom:1px solid #fff;box-shadow:inset 1px 1px 0 #fff"></div><div style="position:absolute;left:1462px;top:1014px;width:364px;height:45px;border-top:1px solid #a3a3a3;border-left:1px solid #a3a3a3;border-right:1px solid #fff;border-bottom:1px solid #fff;box-shadow:inset 1px 1px 0 #fff"></div><div style="position:absolute;left:1462px;top:1059px;width:364px;height:45px;border-top:1px solid #a3a3a3;border-left:1px solid #a3a3a3;border-right:1px solid #fff;border-bottom:1px solid #fff;box-shadow:inset 1px 1px 0 #fff"></div><div style="position:absolute;left:1462px;top:1104px;width:364px;height:45px;border-top:1px solid #a3a3a3;border-left:1px solid #a3a3a3;border-right:1px solid #fff;border-bottom:1px solid #fff;box-shadow:inset 1px 1px 0 #fff"></div><div style="position:absolute;left:1462px;top:1149px;width:364px;height:45px;border-top:1px solid #a3a3a3;border-left:1px solid #a3a3a3;border-right:1px solid #fff;border-bottom:1px solid #fff;box-shadow:inset 1px 1px 0 #fff"></div><div style="position:absolute;left:1462px;top:1194px;width:364px;height:45px;border-top:1px solid #a3a3a3;border-left:1px solid #a3a3a3;border-right:1px solid #fff;border-bottom:1px solid #fff;box-shadow:inset 1px 1px 0 #fff"></div><div style="position:absolute;left:1462px;top:1239px;width:364px;height:45px;border-top:1px solid #a3a3a3;border-left:1px solid #a3a3a3;border-right:1px solid #fff;border-bottom:1px solid #fff;box-shadow:inset 1px 1px 0 #fff"></div><div style="position:absolute;left:1462px;top:1284px;width:364px;height:45px;border-top:1px solid #a3a3a3;border-left:1px solid #a3a3a3;border-right:1px solid #fff;border-bottom:1px solid #fff;box-shadow:inset 1px 1px 0 #fff"></div><div style="position:absolute;left:1462px;top:1329px;width:364px;height:45px;border-top:1px solid #a3a3a3;border-left:1px solid #a3a3a3;border-right:1px solid #fff;border-bottom:1px solid #fff;box-shadow:inset 1px 1px 0 #fff"></div><div style="position:absolute;left:1826px;top:924px;width:364px;height:45px;border-top:1px solid #a3a3a3;border-left:1px solid #a3a3a3;border-right:1px solid #fff;border-bottom:1px solid #fff;box-shadow:inset 1px 1px 0 #fff"></div><div style="position:absolute;left:1826px;top:969px;width:364px;height:45px;border-top:1px solid #a3a3a3;border-left:1px solid #a3a3a3;border-right:1px solid #fff;border-bottom:1px solid #fff;box-shadow:inset 1px 1px 0 #fff"></div><div style="position:absolute;left:1826px;top:1014px;width:364px;height:45px;border-top:1px solid #a3a3a3;border-left:1px solid #a3a3a3;border-right:1px solid #fff;border-bottom:1px solid #fff;box-shadow:inset 1px 1px 0 #fff"></div><div style="position:absolute;left:1826px;top:1059px;width:364px;height:45px;border-top:1px solid #a3a3a3;border-left:1px solid #a3a3a3;border-right:1px solid #fff;border-bottom:1px solid #fff;box-shadow:inset 1px 1px 0 #fff"></div><div style="position:absolute;left:1826px;top:1104px;width:364px;height:45px;border-top:1px solid #a3a3a3;border-left:1px solid #a3a3a3;border-right:1px solid #fff;border-bottom:1px solid #fff;box-shadow:inset 1px 1px 0 #fff"></div><div style="position:absolute;left:1826px;top:1149px;width:364px;height:45px;border-top:1px solid #a3a3a3;border-left:1px solid #a3a3a3;border-right:1px solid #fff;border-bottom:1px solid #fff;box-shadow:inset 1px 1px 0 #fff"></div><div style="position:absolute;left:1826px;top:1194px;width:364px;height:45px;border-top:1px solid #a3a3a3;border-left:1px solid #a3a3a3;border-right:1px solid #fff;border-bottom:1px solid #fff;box-shadow:inset 1px 1px 0 #fff"></div><div style="position:absolute;left:1826px;top:1239px;width:364px;height:45px;border-top:1px solid #a3a3a3;border-left:1px solid #a3a3a3;border-right:1px solid #fff;border-bottom:1px solid #fff;box-shadow:inset 1px 1px 0 #fff"></div><div style="position:absolute;left:1826px;top:1284px;width:364px;height:45px;border-top:1px solid #a3a3a3;border-left:1px solid #a3a3a3;border-right:1px solid #fff;border-bottom:1px solid #fff;box-shadow:inset 1px 1px 0 #fff"></div><div style="position:absolute;left:1826px;top:1329px;width:364px;height:45px;border-top:1px solid #a3a3a3;border-left:1px solid #a3a3a3;border-right:1px solid #fff;border-bottom:1px solid #fff;box-shadow:inset 1px 1px 0 #fff"></div><div style="position:absolute;left:2190px;top:924px;width:363px;height:45px;border-top:1px solid #a3a3a3;border-left:1px solid #a3a3a3;border-right:1px solid #fff;border-bottom:1px solid #fff;box-shadow:inset 1px 1px 0 #fff"></div><div style="position:absolute;left:2190px;top:969px;width:363px;height:45px;border-top:1px solid #a3a3a3;border-left:1px solid #a3a3a3;border-right:1px solid #fff;border-bottom:1px solid #fff;box-shadow:inset 1px 1px 0 #fff"></div><div style="position:absolute;left:2190px;top:1014px;width:363px;height:45px;border-top:1px solid #a3a3a3;border-left:1px solid #a3a3a3;border-right:1px solid #fff;border-bottom:1px solid #fff;box-shadow:inset 1px 1px 0 #fff"></div><div style="position:absolute;left:2190px;top:1059px;width:363px;height:45px;border-top:1px solid #a3a3a3;border-left:1px solid #a3a3a3;border-right:1px solid #fff;border-bottom:1px solid #fff;box-shadow:inset 1px 1px 0 #fff"></div><div style="position:absolute;left:2190px;top:1104px;width:363px;height:45px;border-top:1px solid #a3a3a3;border-left:1px solid #a3a3a3;border-right:1px solid #fff;border-bottom:1px solid #fff;box-shadow:inset 1px 1px 0 #fff"></div><div style="position:absolute;left:2190px;top:1149px;width:363px;height:45px;border-top:1px solid #a3a3a3;border-left:1px solid #a3a3a3;border-right:1px solid #fff;border-bottom:1px solid #fff;box-shadow:inset 1px 1px 0 #fff"></div><div style="position:absolute;left:2190px;top:1194px;width:363px;height:45px;border-top:1px solid #a3a3a3;border-left:1px solid #a3a3a3;border-right:1px solid #fff;border-bottom:1px solid #fff;box-shadow:inset 1px 1px 0 #fff"></div><div style="position:absolute;left:2190px;top:1239px;width:363px;height:45px;border-top:1px solid #a3a3a3;border-left:1px solid #a3a3a3;border-right:1px solid #fff;border-bottom:1px solid #fff;box-shadow:inset 1px 1px 0 #fff"></div><div style="position:absolute;left:2190px;top:1284px;width:363px;height:45px;border-top:1px solid #a3a3a3;border-left:1px solid #a3a3a3;border-right:1px solid #fff;border-bottom:1px solid #fff;box-shadow:inset 1px 1px 0 #fff"></div>
<svg style="position:absolute;left:0;top:920px" width="2560" height="460"><g transform="translate(0,-920)"><path d="M48.45,966.05 L9.85,966.05 A38.6,38.6 0 0 1 16.83,943.91 Z" fill="#00ff00"/><path d="M48.45,966.05 L16.83,943.91 A38.6,38.6 0 0 1 26.03,934.63 Z" fill="#a2ff00"/><path d="M48.45,966.05 L26.03,934.63 A38.6,38.6 0 0 1 70.03,934.05 Z" fill="#ffff00"/><path d="M48.45,966.05 L70.03,934.05 A38.6,38.6 0 0 1 79.68,943.36 Z" fill="#ffc000"/><path d="M48.45,966.05 L79.68,943.36 A38.6,38.6 0 0 1 87.05,966.05 Z" fill="#ff0000"/><polygon points="47.79,965.83 57.41,928.71 63.52,930.73 49.11,966.27" fill="#000"/><path d="M9.85,966.05 A38.6,38.6 0 0 1 87.05,966.05 Z" fill="none" stroke="#000" stroke-width="1.3"/><path d="M48.45,1011.05 L9.85,1011.05 A38.6,38.6 0 0 1 16.83,988.91 Z" fill="#00ff00"/><path d="M48.45,1011.05 L16.83,988.91 A38.6,38.6 0 0 1 26.03,979.63 Z" fill="#a2ff00"/><path d="M48.45,1011.05 L26.03,979.63 A38.6,38.6 0 0 1 70.03,979.05 Z" fill="#ffff00"/><path d="M48.45,1011.05 L70.03,979.05 A38.6,38.6 0 0 1 79.68,988.36 Z" fill="#ffc000"/><path d="M48.45,1011.05 L79.68,988.36 A38.6,38.6 0 0 1 87.05,1011.05 Z" fill="#ff0000"/><polygon points="47.76,1011.16 39.29,973.76 45.64,972.75 49.14,1010.94" fill="#000"/><path d="M9.85,1011.05 A38.6,38.6 0 0 1 87.05,1011.05 Z" fill="none" stroke="#000" stroke-width="1.3"/><path d="M48.45,1056.05 L9.85,1056.05 A38.6,38.6 0 0 1 16.83,1033.91 Z" fill="#00ff00"/><path d="M48.45,1056.05 L16.83,1033.91 A38.6,38.6 0 0 1 26.03,1024.63 Z" fill="#a2ff00"/><path d="M48.45,1056.05 L26.03,1024.63 A38.6,38.6 0 0 1 70.03,1024.05 Z" fill="#ffff00"/><path d="M48.45,1056.05 L70.03,1024.05 A38.6,38.6 0 0 1 79.68,1033.36 Z" fill="#ffc000"/><path d="M48.45,1056.05 L79.68,1033.36 A38.6,38.6 0 0 1 87.05,1056.05 Z" fill="#ff0000"/><polygon points="48.21,1055.39 83.31,1039.94 85.51,1045.98 48.69,1056.71" fill="#000"/><path d="M9.85,1056.05 A38.6,38.6 0 0 1 87.05,1056.05 Z" fill="none" stroke="#000" stroke-width="1.3"/><path d="M48.45,1101.05 L9.85,1101.05 A38.6,38.6 0 0 1 16.83,1078.91 Z" fill="#00ff00"/><path d="M48.45,1101.05 L16.83,1078.91 A38.6,38.6 0 0 1 26.03,1069.63 Z" fill="#a2ff00"/><path d="M48.45,1101.05 L26.03,1069.63 A38.6,38.6 0 0 1 70.03,1069.05 Z" fill="#ffff00"/><path d="M48.45,1101.05 L70.03,1069.05 A38.6,38.6 0 0 1 79.68,1078.36 Z" fill="#ffc000"/><path d="M48.45,1101.05 L79.68,1078.36 A38.6,38.6 0 0 1 87.05,1101.05 Z" fill="#ff0000"/><polygon points="48.04,1100.48 77.52,1075.96 81.30,1081.16 48.86,1101.62" fill="#000"/><path d="M9.85,1101.05 A38.6,38.6 0 0 1 87.05,1101.05 Z" fill="none" stroke="#000" stroke-width="1.3"/><path d="M48.45,1146.05 L9.85,1146.05 A38.6,38.6 0 0 1 16.83,1123.91 Z" fill="#00ff00"/><path d="M48.45,1146.05 L16.83,1123.91 A38.6,38.6 0 0 1 26.03,1114.63 Z" fill="#a2ff00"/><path d="M48.45,1146.05 L26.03,1114.63 A38.6,38.6 0 0 1 70.03,1114.05 Z" fill="#ffff00"/><path d="M48.45,1146.05 L70.03,1114.05 A38.6,38.6 0 0 1 79.68,1123.36 Z" fill="#ffc000"/><path d="M48.45,1146.05 L79.68,1123.36 A38.6,38.6 0 0 1 87.05,1146.05 Z" fill="#ff0000"/><polygon points="47.99,1145.52 75.22,1118.52 79.44,1123.37 48.91,1146.58" fill="#000"/><path d="M9.85,1146.05 A38.6,38.6 0 0 1 87.05,1146.05 Z" fill="none" stroke="#000" stroke-width="1.3"/><path d="M48.45,1191.05 L9.85,1191.05 A38.6,38.6 0 0 1 16.83,1168.91 Z" fill="#00ff00"/><path d="M48.45,1191.05 L16.83,1168.91 A38.6,38.6 0 0 1 26.03,1159.63 Z" fill="#a2ff00"/><path d="M48.45,1191.05 L26.03,1159.63 A38.6,38.6 0 0 1 70.03,1159.05 Z" fill="#ffff00"/><path d="M48.45,1191.05 L70.03,1159.05 A38.6,38.6 0 0 1 79.68,1168.36 Z" fill="#ffc000"/><path d="M48.45,1191.05 L79.68,1168.36 A38.6,38.6 0 0 1 87.05,1191.05 Z" fill="#ff0000"/><polygon points="48.38,1190.35 86.21,1184.05 86.85,1190.45 48.52,1191.75" fill="#000"/><path d="M9.85,1191.05 A38.6,38.6 0 0 1 87.05,1191.05 Z" fill="none" stroke="#000" stroke-width="1.3"/><path d="M48.45,1236.05 L9.85,1236.05 A38.6,38.6 0 0 1 16.83,1213.91 Z" fill="#00ff00"/><path d="M48.45,1236.05 L16.83,1213.91 A38.6,38.6 0 0 1 26.03,1204.63 Z" fill="#a2ff00"/><path d="M48.45,1236.05 L26.03,1204.63 A38.6,38.6 0 0 1 70.03,1204.05 Z" fill="#ffff00"/><path d="M48.45,1236.05 L70.03,1204.05 A38.6,38.6 0 0 1 79.68,1213.36 Z" fill="#ffc000"/><path d="M48.45,1236.05 L79.68,1213.36 A38.6,38.6 0 0 1 87.05,1236.05 Z" fill="#ff0000"/><polygon points="48.07,1236.64 14.61,1217.90 18.11,1212.51 48.83,1235.46" fill="#000"/><path d="M9.85,1236.05 A38.6,38.6 0 0 1 87.05,1236.05 Z" fill="none" stroke="#000" stroke-width="1.3"/><path d="M48.45,1281.05 L9.85,1281.05 A38.6,38.6 0 0 1 16.83,1258.91 Z" fill="#00ff00"/><path d="M48.45,1281.05 L16.83,1258.91 A38.6,38.6 0 0 1 26.03,1249.63 Z" fill="#a2ff00"/><path d="M48.45,1281.05 L26.03,1249.63 A38.6,38.6 0 0 1 70.03,1249.05 Z" fill="#ffff00"/><path d="M48.45,1281.05 L70.03,1249.05 A38.6,38.6 0 0 1 79.68,1258.36 Z" fill="#ffc000"/><path d="M48.45,1281.05 L79.68,1258.36 A38.6,38.6 0 0 1 87.05,1281.05 Z" fill="#ff0000"/><polygon points="48.08,1280.46 79.20,1258.05 82.60,1263.50 48.82,1281.64" fill="#000"/><path d="M9.85,1281.05 A38.6,38.6 0 0 1 87.05,1281.05 Z" fill="none" stroke="#000" stroke-width="1.3"/><path d="M48.45,1326.05 L9.85,1326.05 A38.6,38.6 0 0 1 16.83,1303.91 Z" fill="#00ff00"/><path d="M48.45,1326.05 L16.83,1303.91 A38.6,38.6 0 0 1 26.03,1294.63 Z" fill="#a2ff00"/><path d="M48.45,1326.05 L26.03,1294.63 A38.6,38.6 0 0 1 70.03,1294.05 Z" fill="#ffff00"/><path d="M48.45,1326.05 L70.03,1294.05 A38.6,38.6 0 0 1 79.68,1303.36 Z" fill="#ffc000"/><path d="M48.45,1326.05 L79.68,1303.36 A38.6,38.6 0 0 1 87.05,1326.05 Z" fill="#ff0000"/><polygon points="47.83,1326.38 27.37,1293.95 33.02,1290.89 49.07,1325.72" fill="#000"/><path d="M9.85,1326.05 A38.6,38.6 0 0 1 87.05,1326.05 Z" fill="none" stroke="#000" stroke-width="1.3"/><path d="M48.45,1371.05 L9.85,1371.05 A38.6,38.6 0 0 1 16.83,1348.91 Z" fill="#00ff00"/><path d="M48.45,1371.05 L16.83,1348.91 A38.6,38.6 0 0 1 26.03,1339.63 Z" fill="#a2ff00"/><path d="M48.45,1371.05 L26.03,1339.63 A38.6,38.6 0 0 1 70.03,1339.05 Z" fill="#ffff00"/><path d="M48.45,1371.05 L70.03,1339.05 A38.6,38.6 0 0 1 79.68,1348.36 Z" fill="#ffc000"/><path d="M48.45,1371.05 L79.68,1348.36 A38.6,38.6 0 0 1 87.05,1371.05 Z" fill="#ff0000"/><polygon points="47.95,1370.56 72.72,1341.29 77.34,1345.76 48.95,1371.54" fill="#000"/><path d="M9.85,1371.05 A38.6,38.6 0 0 1 87.05,1371.05 Z" fill="none" stroke="#000" stroke-width="1.3"/><path d="M412.45,966.05 L373.85,966.05 A38.6,38.6 0 0 1 380.83,943.91 Z" fill="#00ff00"/><path d="M412.45,966.05 L380.83,943.91 A38.6,38.6 0 0 1 390.03,934.63 Z" fill="#a2ff00"/><path d="M412.45,966.05 L390.03,934.63 A38.6,38.6 0 0 1 434.03,934.05 Z" fill="#ffff00"/><path d="M412.45,966.05 L434.03,934.05 A38.6,38.6 0 0 1 443.68,943.36 Z" fill="#ffc000"/><path d="M412.45,966.05 L443.68,943.36 A38.6,38.6 0 0 1 451.05,966.05 Z" fill="#ff0000"/><path d="M373.85,966.05 A38.6,38.6 0 0 1 451.05,966.05 Z" fill="none" stroke="#000" stroke-width="1.3"/><path d="M412.45,1011.05 L373.85,1011.05 A38.6,38.6 0 0 1 380.83,988.91 Z" fill="#00ff00"/><path d="M412.45,1011.05 L380.83,988.91 A38.6,38.6 0 0 1 390.03,979.63 Z" fill="#a2ff00"/><path d="M412.45,1011.05 L390.03,979.63 A38.6,38.6 0 0 1 434.03,979.05 Z" fill="#ffff00"/><path d="M412.45,1011.05 L434.03,979.05 A38.6,38.6 0 0 1 443.68,988.36 Z" fill="#ffc000"/><path d="M412.45,1011.05 L443.68,988.36 A38.6,38.6 0 0 1 451.05,1011.05 Z" fill="#ff0000"/><polygon points="412.34,1011.74 374.15,1008.24 375.16,1001.89 412.56,1010.36" fill="#000"/><path d="M373.85,1011.05 A38.6,38.6 0 0 1 451.05,1011.05 Z" fill="none" stroke="#000" stroke-width="1.3"/><path d="M412.45,1056.05 L373.85,1056.05 A38.6,38.6 0 0 1 380.83,1033.91 Z" fill="#00ff00"/><path d="M412.45,1056.05 L380.83,1033.91 A38.6,38.6 0 0 1 390.03,1024.63 Z" fill="#a2ff00"/><path d="M412.45,1056.05 L390.03,1024.63 A38.6,38.6 0 0 1 434.03,1024.05 Z" fill="#ffff00"/><path d="M412.45,1056.05 L434.03,1024.05 A38.6,38.6 0 0 1 443.68,1033.36 Z" fill="#ffc000"/><path d="M412.45,1056.05 L443.68,1033.36 A38.6,38.6 0 0 1 451.05,1056.05 Z" fill="#ff0000"/><path d="M373.85,1056.05 A38.6,38.6 0 0 1 451.05,1056.05 Z" fill="none" stroke="#000" stroke-width="1.3"/><path d="M412.45,1101.05 L373.85,1101.05 A38.6,38.6 0 0 1 380.83,1078.91 Z" fill="#00ff00"/><path d="M412.45,1101.05 L380.83,1078.91 A38.6,38.6 0 0 1 390.03,1069.63 Z" fill="#a2ff00"/><path d="M412.45,1101.05 L390.03,1069.63 A38.6,38.6 0 0 1 434.03,1069.05 Z" fill="#ffff00"/><path d="M412.45,1101.05 L434.03,1069.05 A38.6,38.6 0 0 1 443.68,1078.36 Z" fill="#ffc000"/><path d="M412.45,1101.05 L443.68,1078.36 A38.6,38.6 0 0 1 451.05,1101.05 Z" fill="#ff0000"/><polygon points="411.79,1100.81 422.71,1064.05 428.74,1066.28 413.11,1101.29" fill="#000"/><path d="M373.85,1101.05 A38.6,38.6 0 0 1 451.05,1101.05 Z" fill="none" stroke="#000" stroke-width="1.3"/><path d="M412.45,1146.05 L373.85,1146.05 A38.6,38.6 0 0 1 380.83,1123.91 Z" fill="#00ff00"/><path d="M412.45,1146.05 L380.83,1123.91 A38.6,38.6 0 0 1 390.03,1114.63 Z" fill="#a2ff00"/><path d="M412.45,1146.05 L390.03,1114.63 A38.6,38.6 0 0 1 434.03,1114.05 Z" fill="#ffff00"/><path d="M412.45,1146.05 L434.03,1114.05 A38.6,38.6 0 0 1 443.68,1123.36 Z" fill="#ffc000"/><path d="M412.45,1146.05 L443.68,1123.36 A38.6,38.6 0 0 1 451.05,1146.05 Z" fill="#ff0000"/><polygon points="412.16,1145.41 445.87,1127.14 448.56,1132.98 412.74,1146.69" fill="#000"/><path d="M373.85,1146.05 A38.6,38.6 0 0 1 451.05,1146.05 Z" fill="none" stroke="#000" stroke-width="1.3"/><path d="M412.45,1191.05 L373.85,1191.05 A38.6,38.6 0 0 1 380.83,1168.91 Z" fill="#00ff00"/><path d="M412.45,1191.05 L380.83,1168.91 A38.6,38.6 0 0 1 390.03,1159.63 Z" fill="#a2ff00"/><path d="M412.45,1191.05 L390.03,1159.63 A38.6,38.6 0 0 1 434.03,1159.05 Z" fill="#ffff00"/><path d="M412.45,1191.05 L434.03,1159.05 A38.6,38.6 0 0 1 443.68,1168.36 Z" fill="#ffc000"/><path d="M412.45,1191.05 L443.68,1168.36 A38.6,38.6 0 0 1 451.05,1191.05 Z" fill="#ff0000"/><path d="M373.85,1191.05 A38.6,38.6 0 0 1 451.05,1191.05 Z" fill="none" stroke="#000" stroke-width="1.3"/><path d="M412.45,1236.05 L373.85,1236.05 A38.6,38.6 0 0 1 380.83,1213.91 Z" fill="#00ff00"/><path d="M412.45,1236.05 L380.83,1213.91 A38.6,38.6 0 0 1 390.03,1204.63 Z" fill="#a2ff00"/><path d="M412.45,1236.05 L390.03,1204.63 A38.6,38.6 0 0 1 434.03,1204.05 Z" fill="#ffff00"/><path d="M412.45,1236.05 L434.03,1204.05 A38.6,38.6 0 0 1 443.68,1213.36 Z" fill="#ffc000"/><path d="M412.45,1236.05 L443.68,1213.36 A38.6,38.6 0 0 1 451.05,1236.05 Z" fill="#ff0000"/><polygon points="412.38,1235.35 450.17,1228.85 450.84,1235.25 412.52,1236.75" fill="#000"/><path d="M373.85,1236.05 A38.6,38.6 0 0 1 451.05,1236.05 Z" fill="none" stroke="#000" stroke-width="1.3"/><path d="M412.45,1281.05 L373.85,1281.05 A38.6,38.6 0 0 1 380.83,1258.91 Z" fill="#00ff00"/><path d="M412.45,1281.05 L380.83,1258.91 A38.6,38.6 0 0 1 390.03,1249.63 Z" fill="#a2ff00"/><path d="M412.45,1281.05 L390.03,1249.63 A38.6,38.6 0 0 1 434.03,1249.05 Z" fill="#ffff00"/><path d="M412.45,1281.05 L434.03,1249.05 A38.6,38.6 0 0 1 443.68,1258.36 Z" fill="#ffc000"/><path d="M412.45,1281.05 L443.68,1258.36 A38.6,38.6 0 0 1 451.05,1281.05 Z" fill="#ff0000"/><path d="M373.85,1281.05 A38.6,38.6 0 0 1 451.05,1281.05 Z" fill="none" stroke="#000" stroke-width="1.3"/><path d="M412.45,1326.05 L373.85,1326.05 A38.6,38.6 0 0 1 380.83,1303.91 Z" fill="#00ff00"/><path d="M412.45,1326.05 L380.83,1303.91 A38.6,38.6 0 0 1 390.03,1294.63 Z" fill="#a2ff00"/><path d="M412.45,1326.05 L390.03,1294.63 A38.6,38.6 0 0 1 434.03,1294.05 Z" fill="#ffff00"/><path d="M412.45,1326.05 L434.03,1294.05 A38.6,38.6 0 0 1 443.68,1303.36 Z" fill="#ffc000"/><path d="M412.45,1326.05 L443.68,1303.36 A38.6,38.6 0 0 1 451.05,1326.05 Z" fill="#ff0000"/><polygon points="412.39,1325.35 450.29,1319.51 450.85,1325.92 412.51,1326.75" fill="#000"/><path d="M373.85,1326.05 A38.6,38.6 0 0 1 451.05,1326.05 Z" fill="none" stroke="#000" stroke-width="1.3"/><path d="M412.45,1371.05 L373.85,1371.05 A38.6,38.6 0 0 1 380.83,1348.91 Z" fill="#00ff00"/><path d="M412.45,1371.05 L380.83,1348.91 A38.6,38.6 0 0 1 390.03,1339.63 Z" fill="#a2ff00"/><path d="M412.45,1371.05 L390.03,1339.63 A38.6,38.6 0 0 1 434.03,1339.05 Z" fill="#ffff00"/><path d="M412.45,1371.05 L434.03,1339.05 A38.6,38.6 0 0 1 443.68,1348.36 Z" fill="#ffc000"/><path d="M412.45,1371.05 L443.68,1348.36 A38.6,38.6 0 0 1 451.05,1371.05 Z" fill="#ff0000"/><path d="M373.85,1371.05 A38.6,38.6 0 0 1 451.05,1371.05 Z" fill="none" stroke="#000" stroke-width="1.3"/><path d="M776.45,966.05 L737.85,966.05 A38.6,38.6 0 0 1 744.83,943.91 Z" fill="#00ff00"/><path d="M776.45,966.05 L744.83,943.91 A38.6,38.6 0 0 1 754.03,934.63 Z" fill="#a2ff00"/><path d="M776.45,966.05 L754.03,934.63 A38.6,38.6 0 0 1 798.03,934.05 Z" fill="#ffff00"/><path d="M776.45,966.05 L798.03,934.05 A38.6,38.6 0 0 1 807.68,943.36 Z" fill="#ffc000"/><path d="M776.45,966.05 L807.68,943.36 A38.6,38.6 0 0 1 815.05,966.05 Z" fill="#ff0000"/><path d="M737.85,966.05 A38.6,38.6 0 0 1 815.05,966.05 Z" fill="none" stroke="#000" stroke-width="1.3"/><path d="M776.45,1011.05 L737.85,1011.05 A38.6,38.6 0 0 1 744.83,988.91 Z" fill="#00ff00"/><path d="M776.45,1011.05 L744.83,988.91 A38.6,38.6 0 0 1 754.03,979.63 Z" fill="#a2ff00"/><path d="M776.45,1011.05 L754.03,979.63 A38.6,38.6 0 0 1 798.03,979.05 Z" fill="#ffff00"/><path d="M776.45,1011.05 L798.03,979.05 A38.6,38.6 0 0 1 807.68,988.36 Z" fill="#ffc000"/><path d="M776.45,1011.05 L807.68,988.36 A38.6,38.6 0 0 1 815.05,1011.05 Z" fill="#ff0000"/><polygon points="776.36,1010.36 813.95,1002.80 814.80,1009.17 776.54,1011.74" fill="#000"/><path d="M737.85,1011.05 A38.6,38.6 0 0 1 815.05,1011.05 Z" fill="none" stroke="#000" stroke-width="1.3"/><path d="M776.45,1056.05 L737.85,1056.05 A38.6,38.6 0 0 1 744.83,1033.91 Z" fill="#00ff00"/><path d="M776.45,1056.05 L744.83,1033.91 A38.6,38.6 0 0 1 754.03,1024.63 Z" fill="#a2ff00"/><path d="M776.45,1056.05 L754.03,1024.63 A38.6,38.6 0 0 1 798.03,1024.05 Z" fill="#ffff00"/><path d="M776.45,1056.05 L798.03,1024.05 A38.6,38.6 0 0 1 807.68,1033.36 Z" fill="#ffc000"/><path d="M776.45,1056.05 L807.68,1033.36 A38.6,38.6 0 0 1 815.05,1056.05 Z" fill="#ff0000"/><polygon points="775.75,1056.12 769.25,1018.33 775.65,1017.66 777.15,1055.98" fill="#000"/><path d="M737.85,1056.05 A38.6,38.6 0 0 1 815.05,1056.05 Z" fill="none" stroke="#000" stroke-width="1.3"/><path d="M776.45,1101.05 L737.85,1101.05 A38.6,38.6 0 0 1 744.83,1078.91 Z" fill="#00ff00"/><path d="M776.45,1101.05 L744.83,1078.91 A38.6,38.6 0 0 1 754.03,1069.63 Z" fill="#a2ff00"/><path d="M776.45,1101.05 L754.03,1069.63 A38.6,38.6 0 0 1 798.03,1069.05 Z" fill="#ffff00"/><path d="M776.45,1101.05 L798.03,1069.05 A38.6,38.6 0 0 1 807.68,1078.36 Z" fill="#ffc000"/><path d="M776.45,1101.05 L807.68,1078.36 A38.6,38.6 0 0 1 815.05,1101.05 Z" fill="#ff0000"/><path d="M737.85,1101.05 A38.6,38.6 0 0 1 815.05,1101.05 Z" fill="none" stroke="#000" stroke-width="1.3"/><path d="M776.45,1146.05 L737.85,1146.05 A38.6,38.6 0 0 1 744.83,1123.91 Z" fill="#00ff00"/><path d="M776.45,1146.05 L744.83,1123.91 A38.6,38.6 0 0 1 754.03,1114.63 Z" fill="#a2ff00"/><path d="M776.45,1146.05 L754.03,1114.63 A38.6,38.6 0 0 1 798.03,1114.05 Z" fill="#ffff00"/><path d="M776.45,1146.05 L798.03,1114.05 A38.6,38.6 0 0 1 807.68,1123.36 Z" fill="#ffc000"/><path d="M776.45,1146.05 L807.68,1123.36 A38.6,38.6 0 0 1 815.05,1146.05 Z" fill="#ff0000"/><polygon points="776.43,1146.75 738.11,1148.26 738.28,1141.84 776.47,1145.35" fill="#000"/><path d="M737.85,1146.05 A38.6,38.6 0 0 1 815.05,1146.05 Z" fill="none" stroke="#000" stroke-width="1.3"/><path d="M776.45,1191.05 L737.85,1191.05 A38.6,38.6 0 0 1 744.83,1168.91 Z" fill="#00ff00"/><path d="M776.45,1191.05 L744.83,1168.91 A38.6,38.6 0 0 1 754.03,1159.63 Z" fill="#a2ff00"/><path d="M776.45,1191.05 L754.03,1159.63 A38.6,38.6 0 0 1 798.03,1159.05 Z" fill="#ffff00"/><path d="M776.45,1191.05 L798.03,1159.05 A38.6,38.6 0 0 1 807.68,1168.36 Z" fill="#ffc000"/><path d="M776.45,1191.05 L807.68,1168.36 A38.6,38.6 0 0 1 815.05,1191.05 Z" fill="#ff0000"/><path d="M737.85,1191.05 A38.6,38.6 0 0 1 815.05,1191.05 Z" fill="none" stroke="#000" stroke-width="1.3"/><path d="M776.45,1236.05 L737.85,1236.05 A38.6,38.6 0 0 1 744.83,1213.91 Z" fill="#00ff00"/><path d="M776.45,1236.05 L744.83,1213.91 A38.6,38.6 0 0 1 754.03,1204.63 Z" fill="#a2ff00"/><path d="M776.45,1236.05 L754.03,1204.63 A38.6,38.6 0 0 1 798.03,1204.05 Z" fill="#ffff00"/><path d="M776.45,1236.05 L798.03,1204.05 A38.6,38.6 0 0 1 807.68,1213.36 Z" fill="#ffc000"/><path d="M776.45,1236.05 L807.68,1213.36 A38.6,38.6 0 0 1 815.05,1236.05 Z" fill="#ff0000"/><polygon points="776.43,1236.75 738.11,1238.26 738.28,1231.84 776.47,1235.35" fill="#000"/><path d="M737.85,1236.05 A38.6,38.6 0 0 1 815.05,1236.05 Z" fill="none" stroke="#000" stroke-width="1.3"/><path d="M776.45,1281.05 L737.85,1281.05 A38.6,38.6 0 0 1 744.83,1258.91 Z" fill="#00ff00"/><path d="M776.45,1281.05 L744.83,1258.91 A38.6,38.6 0 0 1 754.03,1249.63 Z" fill="#a2ff00"/><path d="M776.45,1281.05 L754.03,1249.63 A38.6,38.6 0 0 1 798.03,1249.05 Z" fill="#ffff00"/><path d="M776.45,1281.05 L798.03,1249.05 A38.6,38.6 0 0 1 807.68,1258.36 Z" fill="#ffc000"/><path d="M776.45,1281.05 L807.68,1258.36 A38.6,38.6 0 0 1 815.05,1281.05 Z" fill="#ff0000"/><polygon points="775.81,1280.78 788.44,1244.57 794.36,1247.08 777.09,1281.32" fill="#000"/><path d="M737.85,1281.05 A38.6,38.6 0 0 1 815.05,1281.05 Z" fill="none" stroke="#000" stroke-width="1.3"/><path d="M776.45,1326.05 L737.85,1326.05 A38.6,38.6 0 0 1 744.83,1303.91 Z" fill="#00ff00"/><path d="M776.45,1326.05 L744.83,1303.91 A38.6,38.6 0 0 1 754.03,1294.63 Z" fill="#a2ff00"/><path d="M776.45,1326.05 L754.03,1294.63 A38.6,38.6 0 0 1 798.03,1294.05 Z" fill="#ffff00"/><path d="M776.45,1326.05 L798.03,1294.05 A38.6,38.6 0 0 1 807.68,1303.36 Z" fill="#ffc000"/><path d="M776.45,1326.05 L807.68,1303.36 A38.6,38.6 0 0 1 815.05,1326.05 Z" fill="#ff0000"/><polygon points="775.85,1325.70 792.92,1291.36 798.48,1294.59 777.05,1326.40" fill="#000"/><path d="M737.85,1326.05 A38.6,38.6 0 0 1 815.05,1326.05 Z" fill="none" stroke="#000" stroke-width="1.3"/><path d="M776.45,1371.05 L737.85,1371.05 A38.6,38.6 0 0 1 744.83,1348.91 Z" fill="#00ff00"/><path d="M776.45,1371.05 L744.83,1348.91 A38.6,38.6 0 0 1 754.03,1339.63 Z" fill="#a2ff00"/><path d="M776.45,1371.05 L754.03,1339.63 A38.6,38.6 0 0 1 798.03,1339.05 Z" fill="#ffff00"/><path d="M776.45,1371.05 L798.03,1339.05 A38.6,38.6 0 0 1 807.68,1348.36 Z" fill="#ffc000"/><path d="M776.45,1371.05 L807.68,1348.36 A38.6,38.6 0 0 1 815.05,1371.05 Z" fill="#ff0000"/><polygon points="776.00,1371.58 745.27,1348.64 749.44,1343.76 776.90,1370.52" fill="#000"/><path d="M737.85,1371.05 A38.6,38.6 0 0 1 815.05,1371.05 Z" fill="none" stroke="#000" stroke-width="1.3"/><path d="M1140.45,966.05 L1101.85,966.05 A38.6,38.6 0 0 1 1108.83,943.91 Z" fill="#00ff00"/><path d="M1140.45,966.05 L1108.83,943.91 A38.6,38.6 0 0 1 1118.03,934.63 Z" fill="#a2ff00"/><path d="M1140.45,966.05 L1118.03,934.63 A38.6,38.6 0 0 1 1162.03,934.05 Z" fill="#ffff00"/><path d="M1140.45,966.05 L1162.03,934.05 A38.6,38.6 0 0 1 1171.68,943.36 Z" fill="#ffc000"/><path d="M1140.45,966.05 L1171.68,943.36 A38.6,38.6 0 0 1 1179.05,966.05 Z" fill="#ff0000"/><path d="M1101.85,966.05 A38.6,38.6 0 0 1 1179.05,966.05 Z" fill="none" stroke="#000" stroke-width="1.3"/><path d="M1140.45,1011.05 L1101.85,1011.05 A38.6,38.6 0 0 1 1108.83,988.91 Z" fill="#00ff00"/><path d="M1140.45,1011.05 L1108.83,988.91 A38.6,38.6 0 0 1 1118.03,979.63 Z" fill="#a2ff00"/><path d="M1140.45,1011.05 L1118.03,979.63 A38.6,38.6 0 0 1 1162.03,979.05 Z" fill="#ffff00"/><path d="M1140.45,1011.05 L1162.03,979.05 A38.6,38.6 0 0 1 1171.68,988.36 Z" fill="#ffc000"/><path d="M1140.45,1011.05 L1171.68,988.36 A38.6,38.6 0 0 1 1179.05,1011.05 Z" fill="#ff0000"/><path d="M1101.85,1011.05 A38.6,38.6 0 0 1 1179.05,1011.05 Z" fill="none" stroke="#000" stroke-width="1.3"/><path d="M1140.45,1056.05 L1101.85,1056.05 A38.6,38.6 0 0 1 1108.83,1033.91 Z" fill="#00ff00"/><path d="M1140.45,1056.05 L1108.83,1033.91 A38.6,38.6 0 0 1 1118.03,1024.63 Z" fill="#a2ff00"/><path d="M1140.45,1056.05 L1118.03,1024.63 A38.6,38.6 0 0 1 1162.03,1024.05 Z" fill="#ffff00"/><path d="M1140.45,1056.05 L1162.03,1024.05 A38.6,38.6 0 0 1 1171.68,1033.36 Z" fill="#ffc000"/><path d="M1140.45,1056.05 L1171.68,1033.36 A38.6,38.6 0 0 1 1179.05,1056.05 Z" fill="#ff0000"/><polygon points="1139.75,1056.11 1134.05,1018.19 1140.45,1017.65 1141.15,1055.99" fill="#000"/><path d="M1101.85,1056.05 A38.6,38.6 0 0 1 1179.05,1056.05 Z" fill="none" stroke="#000" stroke-width="1.3"/><path d="M1140.45,1101.05 L1101.85,1101.05 A38.6,38.6 0 0 1 1108.83,1078.91 Z" fill="#00ff00"/><path d="M1140.45,1101.05 L1108.83,1078.91 A38.6,38.6 0 0 1 1118.03,1069.63 Z" fill="#a2ff00"/><path d="M1140.45,1101.05 L1118.03,1069.63 A38.6,38.6 0 0 1 1162.03,1069.05 Z" fill="#ffff00"/><path d="M1140.45,1101.05 L1162.03,1069.05 A38.6,38.6 0 0 1 1171.68,1078.36 Z" fill="#ffc000"/><path d="M1140.45,1101.05 L1171.68,1078.36 A38.6,38.6 0 0 1 1179.05,1101.05 Z" fill="#ff0000"/><polygon points="1139.75,1101.12 1133.25,1063.33 1139.65,1062.66 1141.15,1100.98" fill="#000"/><path d="M1101.85,1101.05 A38.6,38.6 0 0 1 1179.05,1101.05 Z" fill="none" stroke="#000" stroke-width="1.3"/><path d="M1140.45,1146.05 L1101.85,1146.05 A38.6,38.6 0 0 1 1108.83,1123.91 Z" fill="#00ff00"/><path d="M1140.45,1146.05 L1108.83,1123.91 A38.6,38.6 0 0 1 1118.03,1114.63 Z" fill="#a2ff00"/><path d="M1140.45,1146.05 L1118.03,1114.63 A38.6,38.6 0 0 1 1162.03,1114.05 Z" fill="#ffff00"/><path d="M1140.45,1146.05 L1162.03,1114.05 A38.6,38.6 0 0 1 1171.68,1123.36 Z" fill="#ffc000"/><path d="M1140.45,1146.05 L1171.68,1123.36 A38.6,38.6 0 0 1 1179.05,1146.05 Z" fill="#ff0000"/><polygon points="1140.00,1146.58 1109.19,1123.75 1113.34,1118.85 1140.90,1145.52" fill="#000"/><path d="M1101.85,1146.05 A38.6,38.6 0 0 1 1179.05,1146.05 Z" fill="none" stroke="#000" stroke-width="1.3"/><path d="M1140.45,1191.05 L1101.85,1191.05 A38.6,38.6 0 0 1 1108.83,1168.91 Z" fill="#00ff00"/><path d="M1140.45,1191.05 L1108.83,1168.91 A38.6,38.6 0 0 1 1118.03,1159.63 Z" fill="#a2ff00"/><path d="M1140.45,1191.05 L1118.03,1159.63 A38.6,38.6 0 0 1 1162.03,1159.05 Z" fill="#ffff00"/><path d="M1140.45,1191.05 L1162.03,1159.05 A38.6,38.6 0 0 1 1171.68,1168.36 Z" fill="#ffc000"/><path d="M1140.45,1191.05 L1171.68,1168.36 A38.6,38.6 0 0 1 1179.05,1191.05 Z" fill="#ff0000"/><polygon points="1140.29,1191.73 1102.47,1185.37 1103.95,1179.12 1140.61,1190.37" fill="#000"/><path d="M1101.85,1191.05 A38.6,38.6 0 0 1 1179.05,1191.05 Z" fill="none" stroke="#000" stroke-width="1.3"/><path d="M1140.45,1236.05 L1101.85,1236.05 A38.6,38.6 0 0 1 1108.83,1213.91 Z" fill="#00ff00"/><path d="M1140.45,1236.05 L1108.83,1213.91 A38.6,38.6 0 0 1 1118.03,1204.63 Z" fill="#a2ff00"/><path d="M1140.45,1236.05 L1118.03,1204.63 A38.6,38.6 0 0 1 1162.03,1204.05 Z" fill="#ffff00"/><path d="M1140.45,1236.05 L1162.03,1204.05 A38.6,38.6 0 0 1 1171.68,1213.36 Z" fill="#ffc000"/><path d="M1140.45,1236.05 L1171.68,1213.36 A38.6,38.6 0 0 1 1179.05,1236.05 Z" fill="#ff0000"/><polygon points="1140.30,1236.73 1102.39,1230.97 1103.77,1224.69 1140.60,1235.37" fill="#000"/><path d="M1101.85,1236.05 A38.6,38.6 0 0 1 1179.05,1236.05 Z" fill="none" stroke="#000" stroke-width="1.3"/><path d="M1140.45,1281.05 L1101.85,1281.05 A38.6,38.6 0 0 1 1108.83,1258.91 Z" fill="#00ff00"/><path d="M1140.45,1281.05 L1108.83,1258.91 A38.6,38.6 0 0 1 1118.03,1249.63 Z" fill="#a2ff00"/><path d="M1140.45,1281.05 L1118.03,1249.63 A38.6,38.6 0 0 1 1162.03,1249.05 Z" fill="#ffff00"/><path d="M1140.45,1281.05 L1162.03,1249.05 A38.6,38.6 0 0 1 1171.68,1258.36 Z" fill="#ffc000"/><path d="M1140.45,1281.05 L1171.68,1258.36 A38.6,38.6 0 0 1 1179.05,1281.05 Z" fill="#ff0000"/><polygon points="1140.27,1281.73 1102.68,1274.12 1104.37,1267.92 1140.63,1280.37" fill="#000"/><path d="M1101.85,1281.05 A38.6,38.6 0 0 1 1179.05,1281.05 Z" fill="none" stroke="#000" stroke-width="1.3"/><path d="M1140.45,1326.05 L1101.85,1326.05 A38.6,38.6 0 0 1 1108.83,1303.91 Z" fill="#00ff00"/><path d="M1140.45,1326.05 L1108.83,1303.91 A38.6,38.6 0 0 1 1118.03,1294.63 Z" fill="#a2ff00"/><path d="M1140.45,1326.05 L1118.03,1294.63 A38.6,38.6 0 0 1 1162.03,1294.05 Z" fill="#ffff00"/><path d="M1140.45,1326.05 L1162.03,1294.05 A38.6,38.6 0 0 1 1171.68,1303.36 Z" fill="#ffc000"/><path d="M1140.45,1326.05 L1171.68,1303.36 A38.6,38.6 0 0 1 1179.05,1326.05 Z" fill="#ff0000"/><polygon points="1140.23,1326.72 1103.08,1317.22 1105.08,1311.11 1140.67,1325.38" fill="#000"/><path d="M1101.85,1326.05 A38.6,38.6 0 0 1 1179.05,1326.05 Z" fill="none" stroke="#000" stroke-width="1.3"/><path d="M1140.45,1371.05 L1101.85,1371.05 A38.6,38.6 0 0 1 1108.83,1348.91 Z" fill="#00ff00"/><path d="M1140.45,1371.05 L1108.83,1348.91 A38.6,38.6 0 0 1 1118.03,1339.63 Z" fill="#a2ff00"/><path d="M1140.45,1371.05 L1118.03,1339.63 A38.6,38.6 0 0 1 1162.03,1339.05 Z" fill="#ffff00"/><path d="M1140.45,1371.05 L1162.03,1339.05 A38.6,38.6 0 0 1 1171.68,1348.36 Z" fill="#ffc000"/><path d="M1140.45,1371.05 L1171.68,1348.36 A38.6,38.6 0 0 1 1179.05,1371.05 Z" fill="#ff0000"/><polygon points="1140.37,1370.35 1178.08,1363.39 1178.83,1369.78 1140.53,1371.75" fill="#000"/><path d="M1101.85,1371.05 A38.6,38.6 0 0 1 1179.05,1371.05 Z" fill="none" stroke="#000" stroke-width="1.3"/><path d="M1504.45,966.05 L1465.85,966.05 A38.6,38.6 0 0 1 1472.83,943.91 Z" fill="#00ff00"/><path d="M1504.45,966.05 L1472.83,943.91 A38.6,38.6 0 0 1 1482.03,934.63 Z" fill="#a2ff00"/><path d="M1504.45,966.05 L1482.03,934.63 A38.6,38.6 0 0 1 1526.03,934.05 Z" fill="#ffff00"/><path d="M1504.45,966.05 L1526.03,934.05 A38.6,38.6 0 0 1 1535.68,943.36 Z" fill="#ffc000"/><path d="M1504.45,966.05 L1535.68,943.36 A38.6,38.6 0 0 1 1543.05,966.05 Z" fill="#ff0000"/><polygon points="1504.09,966.65 1470.08,948.92 1473.42,943.42 1504.81,965.45" fill="#000"/><path d="M1465.85,966.05 A38.6,38.6 0 0 1 1543.05,966.05 Z" fill="none" stroke="#000" stroke-width="1.3"/><path d="M1504.45,1011.05 L1465.85,1011.05 A38.6,38.6 0 0 1 1472.83,988.91 Z" fill="#00ff00"/><path d="M1504.45,1011.05 L1472.83,988.91 A38.6,38.6 0 0 1 1482.03,979.63 Z" fill="#a2ff00"/><path d="M1504.45,1011.05 L1482.03,979.63 A38.6,38.6 0 0 1 1526.03,979.05 Z" fill="#ffff00"/><path d="M1504.45,1011.05 L1526.03,979.05 A38.6,38.6 0 0 1 1535.68,988.36 Z" fill="#ffc000"/><path d="M1504.45,1011.05 L1535.68,988.36 A38.6,38.6 0 0 1 1543.05,1011.05 Z" fill="#ff0000"/><path d="M1465.85,1011.05 A38.6,38.6 0 0 1 1543.05,1011.05 Z" fill="none" stroke="#000" stroke-width="1.3"/><path d="M1504.45,1056.05 L1465.85,1056.05 A38.6,38.6 0 0 1 1472.83,1033.91 Z" fill="#00ff00"/><path d="M1504.45,1056.05 L1472.83,1033.91 A38.6,38.6 0 0 1 1482.03,1024.63 Z" fill="#a2ff00"/><path d="M1504.45,1056.05 L1482.03,1024.63 A38.6,38.6 0 0 1 1526.03,1024.05 Z" fill="#ffff00"/><path d="M1504.45,1056.05 L1526.03,1024.05 A38.6,38.6 0 0 1 1535.68,1033.36 Z" fill="#ffc000"/><path d="M1504.45,1056.05 L1535.68,1033.36 A38.6,38.6 0 0 1 1543.05,1056.05 Z" fill="#ff0000"/><polygon points="1504.08,1056.64 1470.30,1038.50 1473.70,1033.05 1504.82,1055.46" fill="#000"/><path d="M1465.85,1056.05 A38.6,38.6 0 0 1 1543.05,1056.05 Z" fill="none" stroke="#000" stroke-width="1.3"/><path d="M1504.45,1101.05 L1465.85,1101.05 A38.6,38.6 0 0 1 1472.83,1078.91 Z" fill="#00ff00"/><path d="M1504.45,1101.05 L1472.83,1078.91 A38.6,38.6 0 0 1 1482.03,1069.63 Z" fill="#a2ff00"/><path d="M1504.45,1101.05 L1482.03,1069.63 A38.6,38.6 0 0 1 1526.03,1069.05 Z" fill="#ffff00"/><path d="M1504.45,1101.05 L1526.03,1069.05 A38.6,38.6 0 0 1 1535.68,1078.36 Z" fill="#ffc000"/><path d="M1504.45,1101.05 L1535.68,1078.36 A38.6,38.6 0 0 1 1543.05,1101.05 Z" fill="#ff0000"/><polygon points="1503.92,1101.51 1476.73,1074.47 1481.55,1070.22 1504.98,1100.59" fill="#000"/><path d="M1465.85,1101.05 A38.6,38.6 0 0 1 1543.05,1101.05 Z" fill="none" stroke="#000" stroke-width="1.3"/><path d="M1504.45,1146.05 L1465.85,1146.05 A38.6,38.6 0 0 1 1472.83,1123.91 Z" fill="#00ff00"/><path d="M1504.45,1146.05 L1472.83,1123.91 A38.6,38.6 0 0 1 1482.03,1114.63 Z" fill="#a2ff00"/><path d="M1504.45,1146.05 L1482.03,1114.63 A38.6,38.6 0 0 1 1526.03,1114.05 Z" fill="#ffff00"/><path d="M1504.45,1146.05 L1526.03,1114.05 A38.6,38.6 0 0 1 1535.68,1123.36 Z" fill="#ffc000"/><path d="M1504.45,1146.05 L1535.68,1123.36 A38.6,38.6 0 0 1 1543.05,1146.05 Z" fill="#ff0000"/><polygon points="1503.89,1146.47 1479.06,1117.25 1484.21,1113.41 1505.01,1145.63" fill="#000"/><path d="M1465.85,1146.05 A38.6,38.6 0 0 1 1543.05,1146.05 Z" fill="none" stroke="#000" stroke-width="1.3"/><path d="M1504.45,1191.05 L1465.85,1191.05 A38.6,38.6 0 0 1 1472.83,1168.91 Z" fill="#00ff00"/><path d="M1504.45,1191.05 L1472.83,1168.91 A38.6,38.6 0 0 1 1482.03,1159.63 Z" fill="#a2ff00"/><path d="M1504.45,1191.05 L1482.03,1159.63 A38.6,38.6 0 0 1 1526.03,1159.05 Z" fill="#ffff00"/><path d="M1504.45,1191.05 L1526.03,1159.05 A38.6,38.6 0 0 1 1535.68,1168.36 Z" fill="#ffc000"/><path d="M1504.45,1191.05 L1535.68,1168.36 A38.6,38.6 0 0 1 1543.05,1191.05 Z" fill="#ff0000"/><polygon points="1504.17,1191.69 1468.19,1178.42 1470.80,1172.55 1504.73,1190.41" fill="#000"/><path d="M1465.85,1191.05 A38.6,38.6 0 0 1 1543.05,1191.05 Z" fill="none" stroke="#000" stroke-width="1.3"/><path d="M1504.45,1236.05 L1465.85,1236.05 A38.6,38.6 0 0 1 1472.83,1213.91 Z" fill="#00ff00"/><path d="M1504.45,1236.05 L1472.83,1213.91 A38.6,38.6 0 0 1 1482.03,1204.63 Z" fill="#a2ff00"/><path d="M1504.45,1236.05 L1482.03,1204.63 A38.6,38.6 0 0 1 1526.03,1204.05 Z" fill="#ffff00"/><path d="M1504.45,1236.05 L1526.03,1204.05 A38.6,38.6 0 0 1 1535.68,1213.36 Z" fill="#ffc000"/><path d="M1504.45,1236.05 L1535.68,1213.36 A38.6,38.6 0 0 1 1543.05,1236.05 Z" fill="#ff0000"/><polygon points="1504.16,1236.69 1468.30,1223.11 1470.96,1217.26 1504.74,1235.41" fill="#000"/><path d="M1465.85,1236.05 A38.6,38.6 0 0 1 1543.05,1236.05 Z" fill="none" stroke="#000" stroke-width="1.3"/><path d="M1504.45,1281.05 L1465.85,1281.05 A38.6,38.6 0 0 1 1472.83,1258.91 Z" fill="#00ff00"/><path d="M1504.45,1281.05 L1472.83,1258.91 A38.6,38.6 0 0 1 1482.03,1249.63 Z" fill="#a2ff00"/><path d="M1504.45,1281.05 L1482.03,1249.63 A38.6,38.6 0 0 1 1526.03,1249.05 Z" fill="#ffff00"/><path d="M1504.45,1281.05 L1526.03,1249.05 A38.6,38.6 0 0 1 1535.68,1258.36 Z" fill="#ffc000"/><path d="M1504.45,1281.05 L1535.68,1258.36 A38.6,38.6 0 0 1 1543.05,1281.05 Z" fill="#ff0000"/><path d="M1465.85,1281.05 A38.6,38.6 0 0 1 1543.05,1281.05 Z" fill="none" stroke="#000" stroke-width="1.3"/><path d="M1504.45,1326.05 L1465.85,1326.05 A38.6,38.6 0 0 1 1472.83,1303.91 Z" fill="#00ff00"/><path d="M1504.45,1326.05 L1472.83,1303.91 A38.6,38.6 0 0 1 1482.03,1294.63 Z" fill="#a2ff00"/><path d="M1504.45,1326.05 L1482.03,1294.63 A38.6,38.6 0 0 1 1526.03,1294.05 Z" fill="#ffff00"/><path d="M1504.45,1326.05 L1526.03,1294.05 A38.6,38.6 0 0 1 1535.68,1303.36 Z" fill="#ffc000"/><path d="M1504.45,1326.05 L1535.68,1303.36 A38.6,38.6 0 0 1 1543.05,1326.05 Z" fill="#ff0000"/><polygon points="1504.39,1326.75 1466.05,1325.71 1466.65,1319.32 1504.51,1325.35" fill="#000"/><path d="M1465.85,1326.05 A38.6,38.6 0 0 1 1543.05,1326.05 Z" fill="none" stroke="#000" stroke-width="1.3"/><path d="M1504.45,1371.05 L1465.85,1371.05 A38.6,38.6 0 0 1 1472.83,1348.91 Z" fill="#00ff00"/><path d="M1504.45,1371.05 L1472.83,1348.91 A38.6,38.6 0 0 1 1482.03,1339.63 Z" fill="#a2ff00"/><path d="M1504.45,1371.05 L1482.03,1339.63 A38.6,38.6 0 0 1 1526.03,1339.05 Z" fill="#ffff00"/><path d="M1504.45,1371.05 L1526.03,1339.05 A38.6,38.6 0 0 1 1535.68,1348.36 Z" fill="#ffc000"/><path d="M1504.45,1371.05 L1535.68,1348.36 A38.6,38.6 0 0 1 1543.05,1371.05 Z" fill="#ff0000"/><polygon points="1503.80,1370.80 1515.29,1334.21 1521.28,1336.54 1505.10,1371.30" fill="#000"/><path d="M1465.85,1371.05 A38.6,38.6 0 0 1 1543.05,1371.05 Z" fill="none" stroke="#000" stroke-width="1.3"/><path d="M1868.45,966.05 L1829.85,966.05 A38.6,38.6 0 0 1 1836.83,943.91 Z" fill="#00ff00"/><path d="M1868.45,966.05 L1836.83,943.91 A38.6,38.6 0 0 1 1846.03,934.63 Z" fill="#a2ff00"/><path d="M1868.45,966.05 L1846.03,934.63 A38.6,38.6 0 0 1 1890.03,934.05 Z" fill="#ffff00"/><path d="M1868.45,966.05 L1890.03,934.05 A38.6,38.6 0 0 1 1899.68,943.36 Z" fill="#ffc000"/><path d="M1868.45,966.05 L1899.68,943.36 A38.6,38.6 0 0 1 1907.05,966.05 Z" fill="#ff0000"/><polygon points="1867.84,966.40 1846.70,934.40 1852.28,931.22 1869.06,965.70" fill="#000"/><path d="M1829.85,966.05 A38.6,38.6 0 0 1 1907.05,966.05 Z" fill="none" stroke="#000" stroke-width="1.3"/><path d="M1868.45,1011.05 L1829.85,1011.05 A38.6,38.6 0 0 1 1836.83,988.91 Z" fill="#00ff00"/><path d="M1868.45,1011.05 L1836.83,988.91 A38.6,38.6 0 0 1 1846.03,979.63 Z" fill="#a2ff00"/><path d="M1868.45,1011.05 L1846.03,979.63 A38.6,38.6 0 0 1 1890.03,979.05 Z" fill="#ffff00"/><path d="M1868.45,1011.05 L1890.03,979.05 A38.6,38.6 0 0 1 1899.68,988.36 Z" fill="#ffc000"/><path d="M1868.45,1011.05 L1899.68,988.36 A38.6,38.6 0 0 1 1907.05,1011.05 Z" fill="#ff0000"/><polygon points="1867.84,1010.70 1884.80,976.30 1890.37,979.52 1869.06,1011.40" fill="#000"/><path d="M1829.85,1011.05 A38.6,38.6 0 0 1 1907.05,1011.05 Z" fill="none" stroke="#000" stroke-width="1.3"/><path d="M1868.45,1056.05 L1829.85,1056.05 A38.6,38.6 0 0 1 1836.83,1033.91 Z" fill="#00ff00"/><path d="M1868.45,1056.05 L1836.83,1033.91 A38.6,38.6 0 0 1 1846.03,1024.63 Z" fill="#a2ff00"/><path d="M1868.45,1056.05 L1846.03,1024.63 A38.6,38.6 0 0 1 1890.03,1024.05 Z" fill="#ffff00"/><path d="M1868.45,1056.05 L1890.03,1024.05 A38.6,38.6 0 0 1 1899.68,1033.36 Z" fill="#ffc000"/><path d="M1868.45,1056.05 L1899.68,1033.36 A38.6,38.6 0 0 1 1907.05,1056.05 Z" fill="#ff0000"/><polygon points="1867.81,1056.33 1850.36,1022.18 1856.27,1019.63 1869.09,1055.77" fill="#000"/><path d="M1829.85,1056.05 A38.6,38.6 0 0 1 1907.05,1056.05 Z" fill="none" stroke="#000" stroke-width="1.3"/><path d="M1868.45,1101.05 L1829.85,1101.05 A38.6,38.6 0 0 1 1836.83,1078.91 Z" fill="#00ff00"/><path d="M1868.45,1101.05 L1836.83,1078.91 A38.6,38.6 0 0 1 1846.03,1069.63 Z" fill="#a2ff00"/><path d="M1868.45,1101.05 L1846.03,1069.63 A38.6,38.6 0 0 1 1890.03,1069.05 Z" fill="#ffff00"/><path d="M1868.45,1101.05 L1890.03,1069.05 A38.6,38.6 0 0 1 1899.68,1078.36 Z" fill="#ffc000"/><path d="M1868.45,1101.05 L1899.68,1078.36 A38.6,38.6 0 0 1 1907.05,1101.05 Z" fill="#ff0000"/><path d="M1829.85,1101.05 A38.6,38.6 0 0 1 1907.05,1101.05 Z" fill="none" stroke="#000" stroke-width="1.3"/><path d="M1868.45,1146.05 L1829.85,1146.05 A38.6,38.6 0 0 1 1836.83,1123.91 Z" fill="#00ff00"/><path d="M1868.45,1146.05 L1836.83,1123.91 A38.6,38.6 0 0 1 1846.03,1114.63 Z" fill="#a2ff00"/><path d="M1868.45,1146.05 L1846.03,1114.63 A38.6,38.6 0 0 1 1890.03,1114.05 Z" fill="#ffff00"/><path d="M1868.45,1146.05 L1890.03,1114.05 A38.6,38.6 0 0 1 1899.68,1123.36 Z" fill="#ffc000"/><path d="M1868.45,1146.05 L1899.68,1123.36 A38.6,38.6 0 0 1 1907.05,1146.05 Z" fill="#ff0000"/><path d="M1829.85,1146.05 A38.6,38.6 0 0 1 1907.05,1146.05 Z" fill="none" stroke="#000" stroke-width="1.3"/><path d="M1868.45,1191.05 L1829.85,1191.05 A38.6,38.6 0 0 1 1836.83,1168.91 Z" fill="#00ff00"/><path d="M1868.45,1191.05 L1836.83,1168.91 A38.6,38.6 0 0 1 1846.03,1159.63 Z" fill="#a2ff00"/><path d="M1868.45,1191.05 L1846.03,1159.63 A38.6,38.6 0 0 1 1890.03,1159.05 Z" fill="#ffff00"/><path d="M1868.45,1191.05 L1890.03,1159.05 A38.6,38.6 0 0 1 1899.68,1168.36 Z" fill="#ffc000"/><path d="M1868.45,1191.05 L1899.68,1168.36 A38.6,38.6 0 0 1 1907.05,1191.05 Z" fill="#ff0000"/><polygon points="1868.15,1190.42 1901.54,1171.56 1904.32,1177.35 1868.75,1191.68" fill="#000"/><path d="M1829.85,1191.05 A38.6,38.6 0 0 1 1907.05,1191.05 Z" fill="none" stroke="#000" stroke-width="1.3"/><path d="M1868.45,1236.05 L1829.85,1236.05 A38.6,38.6 0 0 1 1836.83,1213.91 Z" fill="#00ff00"/><path d="M1868.45,1236.05 L1836.83,1213.91 A38.6,38.6 0 0 1 1846.03,1204.63 Z" fill="#a2ff00"/><path d="M1868.45,1236.05 L1846.03,1204.63 A38.6,38.6 0 0 1 1890.03,1204.05 Z" fill="#ffff00"/><path d="M1868.45,1236.05 L1890.03,1204.05 A38.6,38.6 0 0 1 1899.68,1213.36 Z" fill="#ffc000"/><path d="M1868.45,1236.05 L1899.68,1213.36 A38.6,38.6 0 0 1 1907.05,1236.05 Z" fill="#ff0000"/><polygon points="1868.14,1235.42 1901.43,1216.39 1904.25,1222.16 1868.76,1236.68" fill="#000"/><path d="M1829.85,1236.05 A38.6,38.6 0 0 1 1907.05,1236.05 Z" fill="none" stroke="#000" stroke-width="1.3"/><path d="M1868.45,1281.05 L1829.85,1281.05 A38.6,38.6 0 0 1 1836.83,1258.91 Z" fill="#00ff00"/><path d="M1868.45,1281.05 L1836.83,1258.91 A38.6,38.6 0 0 1 1846.03,1249.63 Z" fill="#a2ff00"/><path d="M1868.45,1281.05 L1846.03,1249.63 A38.6,38.6 0 0 1 1890.03,1249.05 Z" fill="#ffff00"/><path d="M1868.45,1281.05 L1890.03,1249.05 A38.6,38.6 0 0 1 1899.68,1258.36 Z" fill="#ffc000"/><path d="M1868.45,1281.05 L1899.68,1258.36 A38.6,38.6 0 0 1 1907.05,1281.05 Z" fill="#ff0000"/><polygon points="1868.26,1280.38 1904.35,1267.41 1906.12,1273.59 1868.64,1281.72" fill="#000"/><path d="M1829.85,1281.05 A38.6,38.6 0 0 1 1907.05,1281.05 Z" fill="none" stroke="#000" stroke-width="1.3"/><path d="M1868.45,1326.05 L1829.85,1326.05 A38.6,38.6 0 0 1 1836.83,1303.91 Z" fill="#00ff00"/><path d="M1868.45,1326.05 L1836.83,1303.91 A38.6,38.6 0 0 1 1846.03,1294.63 Z" fill="#a2ff00"/><path d="M1868.45,1326.05 L1846.03,1294.63 A38.6,38.6 0 0 1 1890.03,1294.05 Z" fill="#ffff00"/><path d="M1868.45,1326.05 L1890.03,1294.05 A38.6,38.6 0 0 1 1899.68,1303.36 Z" fill="#ffc000"/><path d="M1868.45,1326.05 L1899.68,1303.36 A38.6,38.6 0 0 1 1907.05,1326.05 Z" fill="#ff0000"/><polygon points="1868.38,1325.35 1906.17,1318.85 1906.84,1325.25 1868.52,1326.75" fill="#000"/><path d="M1829.85,1326.05 A38.6,38.6 0 0 1 1907.05,1326.05 Z" fill="none" stroke="#000" stroke-width="1.3"/><path d="M1868.45,1371.05 L1829.85,1371.05 A38.6,38.6 0 0 1 1836.83,1348.91 Z" fill="#00ff00"/><path d="M1868.45,1371.05 L1836.83,1348.91 A38.6,38.6 0 0 1 1846.03,1339.63 Z" fill="#a2ff00"/><path d="M1868.45,1371.05 L1846.03,1339.63 A38.6,38.6 0 0 1 1890.03,1339.05 Z" fill="#ffff00"/><path d="M1868.45,1371.05 L1890.03,1339.05 A38.6,38.6 0 0 1 1899.68,1348.36 Z" fill="#ffc000"/><path d="M1868.45,1371.05 L1899.68,1348.36 A38.6,38.6 0 0 1 1907.05,1371.05 Z" fill="#ff0000"/><polygon points="1868.37,1370.35 1906.11,1363.53 1906.83,1369.91 1868.53,1371.75" fill="#000"/><path d="M1829.85,1371.05 A38.6,38.6 0 0 1 1907.05,1371.05 Z" fill="none" stroke="#000" stroke-width="1.3"/><path d="M2232.45,966.05 L2193.85,966.05 A38.6,38.6 0 0 1 2200.83,943.91 Z" fill="#00ff00"/><path d="M2232.45,966.05 L2200.83,943.91 A38.6,38.6 0 0 1 2210.03,934.63 Z" fill="#a2ff00"/><path d="M2232.45,966.05 L2210.03,934.63 A38.6,38.6 0 0 1 2254.03,934.05 Z" fill="#ffff00"/><path d="M2232.45,966.05 L2254.03,934.05 A38.6,38.6 0 0 1 2263.68,943.36 Z" fill="#ffc000"/><path d="M2232.45,966.05 L2263.68,943.36 A38.6,38.6 0 0 1 2271.05,966.05 Z" fill="#ff0000"/><path d="M2193.85,966.05 A38.6,38.6 0 0 1 2271.05,966.05 Z" fill="none" stroke="#000" stroke-width="1.3"/><path d="M2232.45,1011.05 L2193.85,1011.05 A38.6,38.6 0 0 1 2200.83,988.91 Z" fill="#00ff00"/><path d="M2232.45,1011.05 L2200.83,988.91 A38.6,38.6 0 0 1 2210.03,979.63 Z" fill="#a2ff00"/><path d="M2232.45,1011.05 L2210.03,979.63 A38.6,38.6 0 0 1 2254.03,979.05 Z" fill="#ffff00"/><path d="M2232.45,1011.05 L2254.03,979.05 A38.6,38.6 0 0 1 2263.68,988.36 Z" fill="#ffc000"/><path d="M2232.45,1011.05 L2263.68,988.36 A38.6,38.6 0 0 1 2271.05,1011.05 Z" fill="#ff0000"/><path d="M2193.85,1011.05 A38.6,38.6 0 0 1 2271.05,1011.05 Z" fill="none" stroke="#000" stroke-width="1.3"/><path d="M2232.45,1056.05 L2193.85,1056.05 A38.6,38.6 0 0 1 2200.83,1033.91 Z" fill="#00ff00"/><path d="M2232.45,1056.05 L2200.83,1033.91 A38.6,38.6 0 0 1 2210.03,1024.63 Z" fill="#a2ff00"/><path d="M2232.45,1056.05 L2210.03,1024.63 A38.6,38.6 0 0 1 2254.03,1024.05 Z" fill="#ffff00"/><path d="M2232.45,1056.05 L2254.03,1024.05 A38.6,38.6 0 0 1 2263.68,1033.36 Z" fill="#ffc000"/><path d="M2232.45,1056.05 L2263.68,1033.36 A38.6,38.6 0 0 1 2271.05,1056.05 Z" fill="#ff0000"/><path d="M2193.85,1056.05 A38.6,38.6 0 0 1 2271.05,1056.05 Z" fill="none" stroke="#000" stroke-width="1.3"/><path d="M2232.45,1101.05 L2193.85,1101.05 A38.6,38.6 0 0 1 2200.83,1078.91 Z" fill="#00ff00"/><path d="M2232.45,1101.05 L2200.83,1078.91 A38.6,38.6 0 0 1 2210.03,1069.63 Z" fill="#a2ff00"/><path d="M2232.45,1101.05 L2210.03,1069.63 A38.6,38.6 0 0 1 2254.03,1069.05 Z" fill="#ffff00"/><path d="M2232.45,1101.05 L2254.03,1069.05 A38.6,38.6 0 0 1 2263.68,1078.36 Z" fill="#ffc000"/><path d="M2232.45,1101.05 L2263.68,1078.36 A38.6,38.6 0 0 1 2271.05,1101.05 Z" fill="#ff0000"/><polygon points="2231.80,1100.79 2243.55,1064.29 2249.52,1066.65 2233.10,1101.31" fill="#000"/><path d="M2193.85,1101.05 A38.6,38.6 0 0 1 2271.05,1101.05 Z" fill="none" stroke="#000" stroke-width="1.3"/><path d="M2232.45,1146.05 L2193.85,1146.05 A38.6,38.6 0 0 1 2200.83,1123.91 Z" fill="#00ff00"/><path d="M2232.45,1146.05 L2200.83,1123.91 A38.6,38.6 0 0 1 2210.03,1114.63 Z" fill="#a2ff00"/><path d="M2232.45,1146.05 L2210.03,1114.63 A38.6,38.6 0 0 1 2254.03,1114.05 Z" fill="#ffff00"/><path d="M2232.45,1146.05 L2254.03,1114.05 A38.6,38.6 0 0 1 2263.68,1123.36 Z" fill="#ffc000"/><path d="M2232.45,1146.05 L2263.68,1123.36 A38.6,38.6 0 0 1 2271.05,1146.05 Z" fill="#ff0000"/><path d="M2193.85,1146.05 A38.6,38.6 0 0 1 2271.05,1146.05 Z" fill="none" stroke="#000" stroke-width="1.3"/><path d="M2232.45,1191.05 L2193.85,1191.05 A38.6,38.6 0 0 1 2200.83,1168.91 Z" fill="#00ff00"/><path d="M2232.45,1191.05 L2200.83,1168.91 A38.6,38.6 0 0 1 2210.03,1159.63 Z" fill="#a2ff00"/><path d="M2232.45,1191.05 L2210.03,1159.63 A38.6,38.6 0 0 1 2254.03,1159.05 Z" fill="#ffff00"/><path d="M2232.45,1191.05 L2254.03,1159.05 A38.6,38.6 0 0 1 2263.68,1168.36 Z" fill="#ffc000"/><path d="M2232.45,1191.05 L2263.68,1168.36 A38.6,38.6 0 0 1 2271.05,1191.05 Z" fill="#ff0000"/><polygon points="2231.77,1191.20 2220.90,1154.43 2227.17,1153.01 2233.13,1190.90" fill="#000"/><path d="M2193.85,1191.05 A38.6,38.6 0 0 1 2271.05,1191.05 Z" fill="none" stroke="#000" stroke-width="1.3"/><path d="M2232.45,1236.05 L2193.85,1236.05 A38.6,38.6 0 0 1 2200.83,1213.91 Z" fill="#00ff00"/><path d="M2232.45,1236.05 L2200.83,1213.91 A38.6,38.6 0 0 1 2210.03,1204.63 Z" fill="#a2ff00"/><path d="M2232.45,1236.05 L2210.03,1204.63 A38.6,38.6 0 0 1 2254.03,1204.05 Z" fill="#ffff00"/><path d="M2232.45,1236.05 L2254.03,1204.05 A38.6,38.6 0 0 1 2263.68,1213.36 Z" fill="#ffc000"/><path d="M2232.45,1236.05 L2263.68,1213.36 A38.6,38.6 0 0 1 2271.05,1236.05 Z" fill="#ff0000"/><polygon points="2231.79,1236.28 2216.95,1200.92 2223.03,1198.82 2233.11,1235.82" fill="#000"/><path d="M2193.85,1236.05 A38.6,38.6 0 0 1 2271.05,1236.05 Z" fill="none" stroke="#000" stroke-width="1.3"/><path d="M2232.45,1281.05 L2193.85,1281.05 A38.6,38.6 0 0 1 2200.83,1258.91 Z" fill="#00ff00"/><path d="M2232.45,1281.05 L2200.83,1258.91 A38.6,38.6 0 0 1 2210.03,1249.63 Z" fill="#a2ff00"/><path d="M2232.45,1281.05 L2210.03,1249.63 A38.6,38.6 0 0 1 2254.03,1249.05 Z" fill="#ffff00"/><path d="M2232.45,1281.05 L2254.03,1249.05 A38.6,38.6 0 0 1 2263.68,1258.36 Z" fill="#ffc000"/><path d="M2232.45,1281.05 L2263.68,1258.36 A38.6,38.6 0 0 1 2271.05,1281.05 Z" fill="#ff0000"/><polygon points="2232.25,1280.38 2268.30,1267.29 2270.09,1273.46 2232.65,1281.72" fill="#000"/><path d="M2193.85,1281.05 A38.6,38.6 0 0 1 2271.05,1281.05 Z" fill="none" stroke="#000" stroke-width="1.3"/><path d="M2232.45,1326.05 L2193.85,1326.05 A38.6,38.6 0 0 1 2200.83,1303.91 Z" fill="#00ff00"/><path d="M2232.45,1326.05 L2200.83,1303.91 A38.6,38.6 0 0 1 2210.03,1294.63 Z" fill="#a2ff00"/><path d="M2232.45,1326.05 L2210.03,1294.63 A38.6,38.6 0 0 1 2254.03,1294.05 Z" fill="#ffff00"/><path d="M2232.45,1326.05 L2254.03,1294.05 A38.6,38.6 0 0 1 2263.68,1303.36 Z" fill="#ffc000"/><path d="M2232.45,1326.05 L2263.68,1303.36 A38.6,38.6 0 0 1 2271.05,1326.05 Z" fill="#ff0000"/><polygon points="2231.77,1325.89 2237.99,1288.05 2244.25,1289.51 2233.13,1326.21" fill="#000"/><path d="M2193.85,1326.05 A38.6,38.6 0 0 1 2271.05,1326.05 Z" fill="none" stroke="#000" stroke-width="1.3"/></g></svg>
<div style="position:absolute;right:2200.3px;top:939.83px;font-family:'Liberation Sans', sans-serif;font-size:11.3px;line-height:11.3px;color:#0a0a0a;font-weight:bold;white-space:nowrap;text-align:right;">AFR(AFR): 15.3</div>
<div style="position:absolute;right:2218.5px;top:984.83px;font-family:'Liberation Sans', sans-serif;font-size:11.3px;line-height:11.3px;color:#0a0a0a;font-weight:bold;white-space:nowrap;text-align:right;">AFR 1 Error: 0.7</div>
<div style="position:absolute;right:2200.3px;top:1029.83px;font-family:'Liberation Sans', sans-serif;font-size:11.3px;line-height:11.3px;color:#0a0a0a;font-weight:bold;white-space:nowrap;text-align:right;">AFR 1 Target(AFR): 14.6</div>
<div style="position:absolute;right:2200.3px;top:1074.83px;font-family:'Liberation Sans', sans-serif;font-size:11.3px;line-height:11.3px;color:#0a0a0a;font-weight:bold;white-space:nowrap;text-align:right;">Barometer(kPa): 100.1</div>
<div style="position:absolute;right:2200.3px;top:1119.83px;font-family:'Liberation Sans', sans-serif;font-size:11.3px;line-height:11.3px;color:#0a0a0a;font-weight:bold;white-space:nowrap;text-align:right;">Batt V(v): 14.0</div>
<div style="position:absolute;right:2200.3px;top:1164.83px;font-family:'Liberation Sans', sans-serif;font-size:11.3px;line-height:11.3px;color:#0a0a0a;font-weight:bold;white-space:nowrap;text-align:right;">Boost duty(%): 100.0</div>
<div style="position:absolute;right:2214.7px;top:1209.83px;font-family:'Liberation Sans', sans-serif;font-size:11.3px;line-height:11.3px;color:#0a0a0a;font-weight:bold;white-space:nowrap;text-align:right;">Boost psi: -6.0</div>
<div style="position:absolute;right:2200.3px;top:1254.83px;font-family:'Liberation Sans', sans-serif;font-size:11.3px;line-height:11.3px;color:#0a0a0a;font-weight:bold;white-space:nowrap;text-align:right;">CLT(&#8451;): 79.3</div>
<div style="position:absolute;right:2200.3px;top:1299.83px;font-family:'Liberation Sans', sans-serif;font-size:11.3px;line-height:11.3px;color:#0a0a0a;font-weight:bold;white-space:nowrap;text-align:right;">Closed loop idle RPM error(rpm): 1347.0</div>
<div style="position:absolute;right:2200.3px;top:1344.83px;font-family:'Liberation Sans', sans-serif;font-size:11.3px;line-height:11.3px;color:#0a0a0a;font-weight:bold;white-space:nowrap;text-align:right;">Closed loop idle target RPM(rpm): 950.0</div>
<div style="position:absolute;right:1837.7px;top:939.83px;font-family:'Liberation Sans', sans-serif;font-size:11.3px;line-height:11.3px;color:#0a0a0a;font-weight:bold;white-space:nowrap;text-align:right;">Duty Cycle1(%): 6.1</div>
<div style="position:absolute;right:1837.7px;top:984.83px;font-family:'Liberation Sans', sans-serif;font-size:11.3px;line-height:11.3px;color:#0a0a0a;font-weight:bold;white-space:nowrap;text-align:right;">Duty Cycle2(%): 6.1</div>
<div style="position:absolute;right:1836.4px;top:1029.83px;font-family:'Liberation Sans', sans-serif;font-size:11.3px;line-height:11.3px;color:#0a0a0a;font-weight:bold;white-space:nowrap;text-align:right;">Dwell(ms): 3.0</div>
<div style="position:absolute;right:1836.4px;top:1074.83px;font-family:'Liberation Sans', sans-serif;font-size:11.3px;line-height:11.3px;color:#0a0a0a;font-weight:bold;white-space:nowrap;text-align:right;">EGT1(&#8451;): 625.0</div>
<div style="position:absolute;right:1836.4px;top:1119.83px;font-family:'Liberation Sans', sans-serif;font-size:11.3px;line-height:11.3px;color:#0a0a0a;font-weight:bold;white-space:nowrap;text-align:right;">Engine(bit): 33.0</div>
<div style="position:absolute;right:1854.7px;top:1164.83px;font-family:'Liberation Sans', sans-serif;font-size:11.3px;line-height:11.3px;color:#0a0a0a;font-weight:bold;white-space:nowrap;text-align:right;">Engine WOT: 0.0</div>
<div style="position:absolute;right:1854.7px;top:1209.83px;font-family:'Liberation Sans', sans-serif;font-size:11.3px;line-height:11.3px;color:#0a0a0a;font-weight:bold;white-space:nowrap;text-align:right;">Engine accelerating slowly: 1.0</div>
<div style="position:absolute;right:1854.7px;top:1254.83px;font-family:'Liberation Sans', sans-serif;font-size:11.3px;line-height:11.3px;color:#0a0a0a;font-weight:bold;white-space:nowrap;text-align:right;">Engine decelerating slowly: 0.0</div>
<div style="position:absolute;right:1854.7px;top:1299.83px;font-family:'Liberation Sans', sans-serif;font-size:11.3px;line-height:11.3px;color:#0a0a0a;font-weight:bold;white-space:nowrap;text-align:right;">Engine idling: 1.0</div>
<div style="position:absolute;right:1854.7px;top:1344.83px;font-family:'Liberation Sans', sans-serif;font-size:11.3px;line-height:11.3px;color:#0a0a0a;font-weight:bold;white-space:nowrap;text-align:right;">Engine in cruise state: 0.0</div>
<div style="position:absolute;right:1490.4px;top:939.83px;font-family:'Liberation Sans', sans-serif;font-size:11.3px;line-height:11.3px;color:#0a0a0a;font-weight:bold;white-space:nowrap;text-align:right;">Engine in overrun: 0.0</div>
<div style="position:absolute;right:1472.5px;top:984.83px;font-family:'Liberation Sans', sans-serif;font-size:11.3px;line-height:11.3px;color:#0a0a0a;font-weight:bold;white-space:nowrap;text-align:right;">Fuel Consumption(Liters): 922337217429372930</div>
<div style="position:absolute;right:1472.5px;top:1029.83px;font-family:'Liberation Sans', sans-serif;font-size:11.3px;line-height:11.3px;color:#0a0a0a;font-weight:bold;white-space:nowrap;text-align:right;">Fuel Flow cc(cc/min): 115.3</div>
<div style="position:absolute;right:1472.5px;top:1074.83px;font-family:'Liberation Sans', sans-serif;font-size:11.3px;line-height:11.3px;color:#0a0a0a;font-weight:bold;white-space:nowrap;text-align:right;">Fuel Flow lph(l/hr): 6.8</div>
<div style="position:absolute;right:1472.5px;top:1119.83px;font-family:'Liberation Sans', sans-serif;font-size:11.3px;line-height:11.3px;color:#0a0a0a;font-weight:bold;white-space:nowrap;text-align:right;">Fuel flow cc/min(cc/min): 25.0</div>
<div style="position:absolute;right:1472.5px;top:1164.83px;font-family:'Liberation Sans', sans-serif;font-size:11.3px;line-height:11.3px;color:#0a0a0a;font-weight:bold;white-space:nowrap;text-align:right;">Fuel: Accel PW(ms): 0.0</div>
<div style="position:absolute;right:1472.5px;top:1209.83px;font-family:'Liberation Sans', sans-serif;font-size:11.3px;line-height:11.3px;color:#0a0a0a;font-weight:bold;white-space:nowrap;text-align:right;">Fuel: Accel enrich(%): 100.0</div>
<div style="position:absolute;right:1472.5px;top:1254.83px;font-family:'Liberation Sans', sans-serif;font-size:11.3px;line-height:11.3px;color:#0a0a0a;font-weight:bold;white-space:nowrap;text-align:right;">Fuel: Air cor(%): 95.0</div>
<div style="position:absolute;right:1472.5px;top:1299.83px;font-family:'Liberation Sans', sans-serif;font-size:11.3px;line-height:11.3px;color:#0a0a0a;font-weight:bold;white-space:nowrap;text-align:right;">Fuel: Baro cor(%): 100.1</div>
<div style="position:absolute;right:1472.5px;top:1344.83px;font-family:'Liberation Sans', sans-serif;font-size:11.3px;line-height:11.3px;color:#0a0a0a;font-weight:bold;white-space:nowrap;text-align:right;">Fuel: Total cor(%): 95.0</div>
<div style="position:absolute;right:1108.7px;top:939.83px;font-family:'Liberation Sans', sans-serif;font-size:11.3px;line-height:11.3px;color:#0a0a0a;font-weight:bold;white-space:nowrap;text-align:right;">Fuel: Warmup cor(%): 100.0</div>
<div style="position:absolute;right:1108.7px;top:984.83px;font-family:'Liberation Sans', sans-serif;font-size:11.3px;line-height:11.3px;color:#0a0a0a;font-weight:bold;white-space:nowrap;text-align:right;">Gallons Used(Gal): -922337217429372930</div>
<div style="position:absolute;right:1126.2px;top:1029.83px;font-family:'Liberation Sans', sans-serif;font-size:11.3px;line-height:11.3px;color:#0a0a0a;font-weight:bold;white-space:nowrap;text-align:right;">Gear: 3.0</div>
<div style="position:absolute;right:1120.5px;top:1074.83px;font-family:'Liberation Sans', sans-serif;font-size:11.3px;line-height:11.3px;color:#0a0a0a;font-weight:bold;white-space:nowrap;text-align:right;">Gear Position Volt: 25.2</div>
<div style="position:absolute;right:1108.7px;top:1119.83px;font-family:'Liberation Sans', sans-serif;font-size:11.3px;line-height:11.3px;color:#0a0a0a;font-weight:bold;white-space:nowrap;text-align:right;">Knock cyl# 1(%): 17.2</div>
<div style="position:absolute;right:1108.2px;top:1164.83px;font-family:'Liberation Sans', sans-serif;font-size:11.3px;line-height:11.3px;color:#0a0a0a;font-weight:bold;white-space:nowrap;text-align:right;">Knock cyl# 2(%): 10.4</div>
<div style="position:absolute;right:1108.7px;top:1209.83px;font-family:'Liberation Sans', sans-serif;font-size:11.3px;line-height:11.3px;color:#0a0a0a;font-weight:bold;white-space:nowrap;text-align:right;">Knock cyl# 3(%): 8.4</div>
<div style="position:absolute;right:1108.7px;top:1254.83px;font-family:'Liberation Sans', sans-serif;font-size:11.3px;line-height:11.3px;color:#0a0a0a;font-weight:bold;white-space:nowrap;text-align:right;">Knock cyl# 4(%): 8.8</div>
<div style="position:absolute;right:1108.7px;top:1299.83px;font-family:'Liberation Sans', sans-serif;font-size:11.3px;line-height:11.3px;color:#0a0a0a;font-weight:bold;white-space:nowrap;text-align:right;">Knock in(%): 12.1</div>
<div style="position:absolute;right:1108.7px;top:1344.83px;font-family:'Liberation Sans', sans-serif;font-size:11.3px;line-height:11.3px;color:#0a0a0a;font-weight:bold;white-space:nowrap;text-align:right;">Liters Used(Liters): 922337217429372930</div>
<div style="position:absolute;right:744.4000000000001px;top:939.83px;font-family:'Liberation Sans', sans-serif;font-size:11.3px;line-height:11.3px;color:#0a0a0a;font-weight:bold;white-space:nowrap;text-align:right;">Load(kPa): 58.9</div>
<div style="position:absolute;right:762.7px;top:984.83px;font-family:'Liberation Sans', sans-serif;font-size:11.3px;line-height:11.3px;color:#0a0a0a;font-weight:bold;white-space:nowrap;text-align:right;">Lost sync count: 0.0</div>
<div style="position:absolute;right:744.4000000000001px;top:1029.83px;font-family:'Liberation Sans', sans-serif;font-size:11.3px;line-height:11.3px;color:#0a0a0a;font-weight:bold;white-space:nowrap;text-align:right;">MAP(kPa): 58.9</div>
<div style="position:absolute;right:744.4000000000001px;top:1074.83px;font-family:'Liberation Sans', sans-serif;font-size:11.3px;line-height:11.3px;color:#0a0a0a;font-weight:bold;white-space:nowrap;text-align:right;">MAPdot(kPa/s): -349.0</div>
<div style="position:absolute;right:744.4000000000001px;top:1119.83px;font-family:'Liberation Sans', sans-serif;font-size:11.3px;line-height:11.3px;color:#0a0a0a;font-weight:bold;white-space:nowrap;text-align:right;">MAT(&#8451;): 34.6</div>
<div style="position:absolute;right:744.4000000000001px;top:1164.83px;font-family:'Liberation Sans', sans-serif;font-size:11.3px;line-height:11.3px;color:#0a0a0a;font-weight:bold;white-space:nowrap;text-align:right;">PW(ms): 3.191</div>
<div style="position:absolute;right:744.4000000000001px;top:1209.83px;font-family:'Liberation Sans', sans-serif;font-size:11.3px;line-height:11.3px;color:#0a0a0a;font-weight:bold;white-space:nowrap;text-align:right;">PW2(ms): 3.191</div>
<div style="position:absolute;right:745.7px;top:1254.83px;font-family:'Liberation Sans', sans-serif;font-size:11.3px;line-height:11.3px;color:#0a0a0a;font-weight:bold;white-space:nowrap;text-align:right;">PWM A duty(%): 0.0</div>
<div style="position:absolute;right:744.4000000000001px;top:1299.83px;font-family:'Liberation Sans', sans-serif;font-size:11.3px;line-height:11.3px;color:#0a0a0a;font-weight:bold;white-space:nowrap;text-align:right;">PWM B duty(%): 12.0</div>
<div style="position:absolute;right:744.4000000000001px;top:1344.83px;font-family:'Liberation Sans', sans-serif;font-size:11.3px;line-height:11.3px;color:#0a0a0a;font-weight:bold;white-space:nowrap;text-align:right;">PWM Idle duty(%): 20.8</div>
<div style="position:absolute;right:380.2999999999997px;top:939.83px;font-family:'Liberation Sans', sans-serif;font-size:11.3px;line-height:11.3px;color:#0a0a0a;font-weight:bold;white-space:nowrap;text-align:right;">RPM(RPM): 2297.0</div>
<div style="position:absolute;right:380.2999999999997px;top:984.83px;font-family:'Liberation Sans', sans-serif;font-size:11.3px;line-height:11.3px;color:#0a0a0a;font-weight:bold;white-space:nowrap;text-align:right;">RPMdot(rpm/sec): 3980.0</div>
<div style="position:absolute;right:380.2999999999997px;top:1029.83px;font-family:'Liberation Sans', sans-serif;font-size:11.3px;line-height:11.3px;color:#0a0a0a;font-weight:bold;white-space:nowrap;text-align:right;">SPK: Idle Correction Advance(deg): 0.0</div>
<div style="position:absolute;right:380.2999999999997px;top:1074.83px;font-family:'Liberation Sans', sans-serif;font-size:11.3px;line-height:11.3px;color:#0a0a0a;font-weight:bold;white-space:nowrap;text-align:right;">SPK: Knock retard(deg): 0.0</div>
<div style="position:absolute;right:380.2999999999997px;top:1119.83px;font-family:'Liberation Sans', sans-serif;font-size:11.3px;line-height:11.3px;color:#0a0a0a;font-weight:bold;white-space:nowrap;text-align:right;">SPK: MAT Retard(deg): 0.0</div>
<div style="position:absolute;right:380.2999999999997px;top:1164.83px;font-family:'Liberation Sans', sans-serif;font-size:11.3px;line-height:11.3px;color:#0a0a0a;font-weight:bold;white-space:nowrap;text-align:right;">SPK: Spark Advance(deg): 32.2</div>
<div style="position:absolute;right:380.2999999999997px;top:1209.83px;font-family:'Liberation Sans', sans-serif;font-size:11.3px;line-height:11.3px;color:#0a0a0a;font-weight:bold;white-space:nowrap;text-align:right;">SPK: Spark Table 1(deg): 32.2</div>
<div style="position:absolute;right:380.2999999999997px;top:1254.83px;font-family:'Liberation Sans', sans-serif;font-size:11.3px;line-height:11.3px;color:#0a0a0a;font-weight:bold;white-space:nowrap;text-align:right;">SecL(s): 1607.0</div>
<div style="position:absolute;right:398.5px;top:1299.83px;font-family:'Liberation Sans', sans-serif;font-size:11.3px;line-height:11.3px;color:#0a0a0a;font-weight:bold;white-space:nowrap;text-align:right;">Shift Cut Sensor: 4.8</div>
<div style="position:absolute;right:386.6999999999998px;top:1344.83px;font-family:'Liberation Sans', sans-serif;font-size:11.3px;line-height:11.3px;color:#0a0a0a;font-weight:bold;white-space:nowrap;text-align:right;">Status1: 136.0</div>
<div style="position:absolute;right:34.899999999999636px;top:939.83px;font-family:'Liberation Sans', sans-serif;font-size:11.3px;line-height:11.3px;color:#0a0a0a;font-weight:bold;white-space:nowrap;text-align:right;">Status2: 0.0</div>
<div style="position:absolute;right:34.899999999999636px;top:984.83px;font-family:'Liberation Sans', sans-serif;font-size:11.3px;line-height:11.3px;color:#0a0a0a;font-weight:bold;white-space:nowrap;text-align:right;">Status3: 0.0</div>
<div style="position:absolute;right:34.899999999999636px;top:1029.83px;font-family:'Liberation Sans', sans-serif;font-size:11.3px;line-height:11.3px;color:#0a0a0a;font-weight:bold;white-space:nowrap;text-align:right;">Status6: 0.0</div>
<div style="position:absolute;right:28.5px;top:1074.83px;font-family:'Liberation Sans', sans-serif;font-size:11.3px;line-height:11.3px;color:#0a0a0a;font-weight:bold;white-space:nowrap;text-align:right;">Stepper Idle position: 53.0</div>
<div style="position:absolute;right:16.699999999999818px;top:1119.83px;font-family:'Liberation Sans', sans-serif;font-size:11.3px;line-height:11.3px;color:#0a0a0a;font-weight:bold;white-space:nowrap;text-align:right;">TPS(%): -0.9</div>
<div style="position:absolute;right:16.699999999999818px;top:1164.83px;font-family:'Liberation Sans', sans-serif;font-size:11.3px;line-height:11.3px;color:#0a0a0a;font-weight:bold;white-space:nowrap;text-align:right;">TPSdot(%/s): -271.5</div>
<div style="position:absolute;right:22.399999999999636px;top:1209.83px;font-family:'Liberation Sans', sans-serif;font-size:11.3px;line-height:11.3px;color:#0a0a0a;font-weight:bold;white-space:nowrap;text-align:right;">Temp Sensor: 119.3</div>
<div style="position:absolute;right:16.699999999999818px;top:1254.83px;font-family:'Liberation Sans', sans-serif;font-size:11.3px;line-height:11.3px;color:#0a0a0a;font-weight:bold;white-space:nowrap;text-align:right;">Time: 1606.091</div>
<div style="position:absolute;right:16.699999999999818px;top:1299.83px;font-family:'Liberation Sans', sans-serif;font-size:11.3px;line-height:11.3px;color:#0a0a0a;font-weight:bold;white-space:nowrap;text-align:right;">VE1(%): 84.8</div>
<div style="position:absolute;left:2553px;top:920px;width:3px;height:454px;border-left:1px solid #a0a0a0;border-right:1px solid #a0a0a0"></div>
<div style="position:absolute;left:0px;top:1374px;width:2560px;height:26px;background:#f0f0f0"></div>
<div style="position:absolute;left:0px;top:1374px;width:2557px;height:1px;background:#858585"></div>
<div style="position:absolute;left:0px;top:1375px;width:2557px;height:2px;background:#ffffff"></div>
<div style="position:absolute;left:0px;top:1377px;width:2560px;height:1px;background:#b5b5b5"></div>
<div style="position:absolute;left:1px;top:1381px;width:2295px;height:17px;border-top:1px solid #5a5a5a;border-left:1px solid #5a5a5a;border-bottom:1px solid #c4c4c4;border-right:1px solid #c4c4c4;box-shadow:inset 1px 1px 0 #fff;background:#f0f0f0"></div>
<div style="position:absolute;left:4px;top:1385px;width:2165px;height:9px;background:#3399ff"></div>
<svg style="position:absolute;left:2px;top:3px" width="16" height="16"><rect x="0.6" y="0.6" width="14.8" height="14.8" fill="#fff" stroke="#000" stroke-width="1.3"/><ellipse cx="9" cy="12" rx="6" ry="2.2" fill="#f4f08a" opacity="0.8"/><polyline points="1.2,9.8 3,8.4" fill="none" stroke="#20b030" stroke-width="1.4"/><polyline points="5.3,6.6 8,3.8 10.5,2.9 14.8,6" fill="none" stroke="#28c040" stroke-width="1.6"/><polyline points="2.4,5.4 5.6,2.4 6.8,4.8" fill="none" stroke="#c01818" stroke-width="1.5"/><polyline points="0.9,4.3 3,6.6 4.4,9.2 5.9,10.4 11.4,4.6 14.8,1.6" fill="none" stroke="#10108a" stroke-width="1.6"/><circle cx="10.6" cy="8.4" r="0.7" fill="#a02040"/><circle cx="11.6" cy="7.4" r="0.6" fill="#a02040"/></svg>
<div style="position:absolute;left:2465px;top:11px;width:10px;height:2px;background:#222"></div>
<svg style="position:absolute;left:2490px;top:3px" width="14" height="12"><rect x="1" y="3.5" width="8" height="7" fill="none" stroke="#222" stroke-width="1.2"/><polyline points="3.5,3.5 3.5,1 11.5,1 11.5,8 9,8" fill="none" stroke="#222" stroke-width="1.2"/></svg>
<div style="position:absolute;left:2512px;top:0px;width:45px;height:19px;background:#c8504a"></div>
<svg style="position:absolute;left:2528px;top:4px" width="12" height="11"><path d="M1.5,1 L10.5,10 M10.5,1 L1.5,10" stroke="#fff" stroke-width="1.6"/></svg>
<div style="position:absolute;left:2071.4px;top:896.2px;width:57.4px;height:18.4px;background:#57f257;border-top:1px solid #3a9a3a;border-left:1px solid #3a9a3a;overflow:hidden;font-family:'Liberation Sans', sans-serif;font-weight:bold;font-size:11px;line-height:17px;color:#000;white-space:nowrap;padding-left:1px">Crank(bit): N</div>
<div style="position:absolute;left:2131.35px;top:896.2px;width:57.4px;height:18.4px;background:#57f257;border-top:1px solid #3a9a3a;border-left:1px solid #3a9a3a;overflow:hidden;font-family:'Liberation Sans', sans-serif;font-weight:bold;font-size:11px;line-height:17px;color:#000;white-space:nowrap;padding-left:1px">ASE(bit): N</div>
<div style="position:absolute;left:2191.3px;top:896.2px;width:57.4px;height:18.4px;background:#57f257;border-top:1px solid #3a9a3a;border-left:1px solid #3a9a3a;overflow:hidden;font-family:'Liberation Sans', sans-serif;font-weight:bold;font-size:11px;line-height:17px;color:#000;white-space:nowrap;padding-left:1px">Warm(bit): N</div>
<div style="position:absolute;left:2251.25px;top:896.2px;width:57.4px;height:18.4px;background:#fb5757;border-top:1px solid #a04848;border-left:1px solid #a04848;overflow:hidden;font-family:'Liberation Sans', sans-serif;font-weight:bold;font-size:11px;line-height:17px;color:#000;white-space:nowrap;padding-left:1px">Run(bit): Y</div>
<div style="position:absolute;left:2311.2px;top:896.2px;width:57.4px;height:18.4px;background:#57f257;border-top:1px solid #3a9a3a;border-left:1px solid #3a9a3a;overflow:hidden;font-family:'Liberation Sans', sans-serif;font-weight:bold;font-size:11px;line-height:17px;color:#000;white-space:nowrap;padding-left:1px">TP AE(bit): N</div>
<div style="position:absolute;left:2371.15px;top:896.2px;width:57.4px;height:18.4px;background:#fb5757;border-top:1px solid #a04848;border-left:1px solid #a04848;overflow:hidden;font-family:'Liberation Sans', sans-serif;font-weight:bold;font-size:11px;line-height:17px;color:#000;white-space:nowrap;padding-left:1px">TP DE(bit): Y</div>
<div style="position:absolute;left:2431.1px;top:896.2px;width:57.4px;height:18.4px;background:#57f257;border-top:1px solid #3a9a3a;border-left:1px solid #3a9a3a;overflow:hidden;font-family:'Liberation Sans', sans-serif;font-weight:bold;font-size:11px;line-height:17px;color:#000;white-space:nowrap;padding-left:1px">MAP AE(bit): N</div>
<div style="position:absolute;left:2491.05px;top:896.2px;width:57.4px;height:18.4px;background:#57f257;border-top:1px solid #3a9a3a;border-left:1px solid #3a9a3a;overflow:hidden;font-family:'Liberation Sans', sans-serif;font-weight:bold;font-size:11px;line-height:17px;color:#000;white-space:nowrap;padding-left:1px">MAP DE(bit): N</div>
<div style="position:absolute;left:2297.5px;top:1380px;width:20.0px;height:19px;background:#e4e4e4"></div>
<div style="position:absolute;left:2320px;top:1380px;width:20px;height:19px;background:#e4e4e4"></div>
<div style="position:absolute;left:2341.5px;top:1380px;width:20.0px;height:19px;background:#e4e4e4"></div>
<div style="position:absolute;left:2385px;top:1380px;width:20px;height:19px;background:#e4e4e4"></div>
<div style="position:absolute;left:2406.5px;top:1380px;width:20.5px;height:19px;background:#e4e4e4"></div>
<div style="position:absolute;left:2429px;top:1380px;width:20px;height:19px;background:#e4e4e4"></div>
<div style="position:absolute;left:2451px;top:1380px;width:20px;height:19px;background:#e4e4e4"></div>
<div style="position:absolute;left:2473px;top:1380px;width:21px;height:19px;background:#e4e4e4"></div>
<div style="position:absolute;left:2495px;top:1380px;width:21px;height:19px;background:#e4e4e4"></div>
<div style="position:absolute;left:2517.5px;top:1380px;width:20.5px;height:19px;background:#e4e4e4"></div>
<div style="position:absolute;left:2539px;top:1380px;width:21px;height:19px;background:#e4e4e4"></div>
<svg style="position:absolute;left:2296px;top:1380px" width="264" height="20"><g transform="translate(-2296,-1380)" fill="#000"><rect x="2302.5" y="1385" width="11" height="10"/><rect x="2326.5" y="1384.5" width="2.4" height="11"/><rect x="2331.5" y="1384.5" width="2.4" height="11"/><polygon points="2345,1384 2359,1390 2345,1396"/><circle cx="2399.0" cy="1388.3" r="4.6" fill="none" stroke="#000" stroke-width="1.3"/><line x1="2395.9" y1="1391.4" x2="2391.5" y2="1395.8" stroke="#000" stroke-width="1.8"/><rect x="2396.5" y="1387.6" width="5" height="1.4"/><circle cx="2421.0" cy="1388.3" r="4.6" fill="none" stroke="#000" stroke-width="1.3"/><line x1="2417.9" y1="1391.4" x2="2413.5" y2="1395.8" stroke="#000" stroke-width="1.8"/><rect x="2418.5" y="1387.6" width="5" height="1.4"/><rect x="2420.3" y="1385.8" width="1.4" height="5"/><rect x="2434" y="1384" width="2.4" height="12"/><polygon points="2446.5,1384 2436.5,1390 2446.5,1396"/><polygon points="2461.5,1384 2455,1390 2461.5,1396"/><polygon points="2468.5,1384 2462,1390 2468.5,1396"/><rect x="2476" y="1389.2" width="15" height="1.8"/><rect x="2498.7" y="1389.2" width="14" height="1.8"/><rect x="2504.8" y="1383.4" width="1.8" height="13.4"/><polygon points="2521,1384 2527.5,1390 2521,1396"/><polygon points="2528,1384 2534.5,1390 2528,1396"/><polygon points="2544,1384 2554,1390 2544,1396"/><rect x="2553.6" y="1384" width="2.4" height="12"/></g></svg>
<div style="position:absolute;left:0px;top:1400px;width:533px;height:40px;background:linear-gradient(90deg,#54423a,#5a473e 50%,#574439)"></div>
<div style="position:absolute;left:533px;top:1400px;width:1392px;height:40px;background:linear-gradient(90deg,#b4a298,#b3a197 40%,#ae9c92 85%,#aa978d)"></div>
<div style="position:absolute;left:533px;top:1400px;width:8px;height:40px;background:#a8958b"></div>
<div style="position:absolute;left:562px;top:1400px;width:1317px;height:8px;border:1px solid #95837a;border-top:none"></div>
<div style="position:absolute;left:570px;top:1428px;width:70px;height:14px;border:1px solid #9c8a80;border-bottom:none;border-radius:5px 5px 0 0"></div>
<div style="position:absolute;left:642px;top:1428px;width:97px;height:14px;border:1px solid #9c8a80;border-bottom:none;border-radius:5px 5px 0 0"></div>
<div style="position:absolute;left:741px;top:1428px;width:120px;height:14px;border:1px solid #9c8a80;border-bottom:none;border-radius:5px 5px 0 0"></div>
<div style="position:absolute;left:1901px;top:1400px;width:15px;height:40px;background:#a18e85"></div>
<div style="position:absolute;left:1925px;top:1400px;width:315px;height:40px;background:#69554a"></div>
<div style="position:absolute;left:2240px;top:1400px;width:320px;height:40px;background:#4d3c33"></div>
<div style="position:absolute;left:114px;top:1401px;width:53px;height:38px;background:rgba(255,255,255,0.12);border:1px solid rgba(255,255,255,0.25)"></div>
<div style="position:absolute;left:238px;top:1401px;width:50px;height:38px;background:rgba(255,255,255,0.12);border:1px solid rgba(255,255,255,0.25)"></div>
<div style="position:absolute;left:300px;top:1401px;width:58px;height:38px;background:rgba(255,255,255,0.28);border:1px solid rgba(255,255,255,0.25)"></div>
<div style="position:absolute;left:362px;top:1401px;width:58px;height:38px;background:rgba(255,255,255,0.12);border:1px solid rgba(255,255,255,0.25)"></div>
<div style="position:absolute;left:424px;top:1401px;width:58px;height:38px;background:rgba(255,255,255,0.12);border:1px solid rgba(255,255,255,0.25)"></div>
<div style="position:absolute;left:168px;top:1401px;width:3px;height:38px;background:rgba(255,255,255,0.12)"></div>
<div style="position:absolute;left:290px;top:1401px;width:2px;height:38px;background:rgba(255,255,255,0.12)"></div>
<div style="position:absolute;left:294px;top:1401px;width:2px;height:38px;background:rgba(255,255,255,0.12)"></div>
<svg style="position:absolute;left:0;top:1400px" width="2560" height="40"><g transform="translate(0,-1400)"><polygon points="11.5,1410 23,1408.3 23,1418.6 11.5,1418.6" fill="#fff"/><polygon points="24.5,1408 38.5,1406 38.5,1418.6 24.5,1418.6" fill="#fff"/><polygon points="11.5,1420 23,1420 23,1430.4 11.5,1428.8" fill="#fff"/><polygon points="24.5,1420 38.5,1420 38.5,1432.5 24.5,1430.6" fill="#fff"/><defs><linearGradient id="bsq" x1="0" y1="0" x2="0" y2="1"><stop offset="0" stop-color="#2020b0"/><stop offset="1" stop-color="#5a64d8"/></linearGradient><linearGradient id="bsw" x1="0" y1="0" x2="0" y2="1"><stop offset="0" stop-color="#7aa0f0"/><stop offset="0.45" stop-color="#ffffff"/><stop offset="0.55" stop-color="#10106a"/><stop offset="1" stop-color="#f0f0f0"/></linearGradient></defs><rect x="65" y="1404" width="32" height="32" fill="url(#bsq)"/><path d="M97,1405 C84,1407 70,1413 65.5,1420 C70,1427 84,1433 97,1436 L97,1432 C90,1428 86,1424 85,1420 C86,1416 90,1412 97,1409 Z" fill="url(#bsw)"/><path d="M97,1409 C90,1412 86,1416 85,1420 C86,1424 90,1428 97,1432 Z" fill="#3040c0"/><path d="M97,1411 C92,1414 89.5,1417 89,1420 C89.5,1423 92,1426 97,1429 Z" fill="#6a78e0"/><defs><linearGradient id="fld" x1="0" y1="0" x2="0" y2="1"><stop offset="0" stop-color="#f8e6a0"/><stop offset="1" stop-color="#e8c860"/></linearGradient><linearGradient id="fbl" x1="0" y1="0" x2="0" y2="1"><stop offset="0" stop-color="#a8e0f8"/><stop offset="1" stop-color="#4aa8e0"/></linearGradient></defs><rect x="124.5" y="1408" width="29" height="25" rx="1.5" fill="url(#fld)"/><rect x="127" y="1407" width="4" height="2.2" fill="#20b020"/><rect x="135.5" y="1410" width="3.5" height="2" fill="#c04020"/><rect x="140" y="1411" width="10" height="3" fill="#fff"/><rect x="142" y="1411.5" width="3" height="2" fill="#2080d0"/><path d="M128,1435 L128,1425 Q128,1423 130,1423 L149,1423 Q151,1423 151,1425 L151,1435 L146,1435 L146,1428 L133,1428 L133,1435 Z" fill="url(#fbl)"/><rect x="199" y="1408" width="20" height="20" fill="#9ed080" transform="rotate(-10 209 1418)"/><rect x="197" y="1410" width="21" height="19" fill="#f0b070" transform="rotate(-5 207 1419)"/><rect x="193" y="1415" width="23" height="17" fill="#b8dcf4" stroke="#4a90c8" stroke-width="0.8"/><rect x="209" y="1417" width="4" height="3" fill="#b04020"/><rect x="199" y="1423" width="12" height="3" fill="#fff"/><path d="M189,1431 C196,1436 210,1434 220,1428 M212,1429 L220,1431" stroke="#e8b040" stroke-width="2.2" fill="none"/><defs><radialGradient id="ieg" cx="0.4" cy="0.35" r="0.7"><stop offset="0" stop-color="#9ae4fa"/><stop offset="1" stop-color="#1a90d8"/></radialGradient></defs><path d="M276,1421.5 C276,1414 270.5,1408.5 263.5,1408.5 C256,1408.5 250.5,1414.5 250.5,1421 C250.5,1428 256,1433.5 263.5,1433.5 C269,1433.5 273.5,1430.5 275.5,1426 L269.5,1426 C268,1428 266,1429 263.5,1429 C259.5,1429 256.5,1426 256,1422.5 L276,1422.5 Z M256.3,1418.5 C257,1415 260,1412.8 263.5,1412.8 C267,1412.8 270,1415 270.7,1418.5 Z" fill="url(#ieg)"/><ellipse cx="262" cy="1420" rx="16" ry="6.5" fill="none" stroke="#e8b828" stroke-width="2" transform="rotate(-48 262 1420)"/><rect x="313.3" y="1404" width="31.5" height="31.5" fill="#000"/><rect x="316" y="1406.7" width="26.2" height="26.2" fill="#fff"/><path d="M317,1428 C322,1424 326,1430 330,1426 C334,1423 338,1427 342,1425 L342,1432 L317,1432 Z" fill="#f4f070"/><polyline points="317,1424 321,1420 324,1423 327,1416 333,1412 337,1414 341,1409" fill="none" stroke="#10d010" stroke-width="2.6"/><polyline points="317,1416 321,1413 325,1409.5 327,1414" fill="none" stroke="#e01010" stroke-width="2.4"/><polyline points="317,1414 321,1420 324,1426 330,1420 336,1415 341,1409" fill="none" stroke="#1010e0" stroke-width="2.6"/><circle cx="334" cy="1419" r="0.9" fill="#c02040"/><circle cx="336" cy="1417" r="0.9" fill="#c02040"/><rect x="380.5" y="1408.5" width="12" height="15" fill="#f0e0a0"/><rect x="382.5" y="1410.5" width="13" height="16" fill="#7ab8e8" stroke="#3a78b8" stroke-width="0.8"/><text x="384.5" y="1419" font-family="Liberation Sans" font-size="5.5" font-weight="bold" fill="#1a3a6a">IOI</text><path d="M387,1426 L399,1426" stroke="#e8eef4" stroke-width="2.2"/><circle cx="387.5" cy="1426" r="2.4" fill="none" stroke="#e8eef4" stroke-width="1.4"/><circle cx="398.5" cy="1426" r="2.4" fill="none" stroke="#e8eef4" stroke-width="1.4"/><defs><linearGradient id="pdfg" x1="0" y1="0" x2="1" y2="1"><stop offset="0" stop-color="#e02830"/><stop offset="1" stop-color="#901818"/></linearGradient></defs><rect x="437.2" y="1404" width="31.5" height="31.5" rx="3.5" fill="url(#pdfg)"/><text x="440.5" y="1415.5" font-family="Liberation Sans" font-size="9.5" fill="#fff">PDF</text><path d="M452,1428.5 L466,1417.5 M455,1430.5 L468,1420" stroke="#fff" stroke-width="1.8"/><polygon points="448.5,1431 451,1426 454,1429.5" fill="#fff"/><circle cx="2292.5" cy="1420" r="6.3" fill="#ddd" stroke="#222" stroke-width="2"/><circle cx="2292.5" cy="1421" r="3" fill="#333"/><circle cx="2316.5" cy="1420" r="7.5" fill="#2a9ae8"/><path d="M2318,1413 L2313,1421 L2317,1421 L2315,1427 L2320.5,1418.5 L2316.5,1418.5 Z" fill="#fff"/><circle cx="2338" cy="1420" r="2.5" fill="#d02020"/><circle cx="2343.5" cy="1417" r="2.5" fill="#d02020"/><circle cx="2344" cy="1423.5" r="2.5" fill="#d02020"/><circle cx="2339" cy="1425" r="1.8" fill="#d02020"/><circle cx="2337" cy="1415" r="1.8" fill="#d02020"/><rect x="2358" y="1412" width="1.6" height="16" fill="#fff"/><path d="M2360,1412.5 L2366,1413 L2366,1418 L2360,1418 Z M2366,1414.5 L2371,1415 L2368.5,1417.5 L2371,1419.5 L2366,1419.5 Z" fill="#fff"/><rect x="2383" y="1412" width="6" height="12" fill="#8a8a8a"/><circle cx="2391.5" cy="1424.5" r="4.8" fill="#1a9a1a"/><path d="M2389,1424.5 L2391,1426.8 L2394.3,1421.8" stroke="#fff" stroke-width="1.4" fill="none"/><path d="M2405,1424 C2404,1419 2408,1417 2411,1418 C2412,1414 2418,1414 2419,1418 C2422,1418 2423,1424 2419,1424 Z" fill="#fff"/><circle cx="2431" cy="1416" r="2.8" fill="none" stroke="#fff" stroke-width="1.2"/><rect x="2430.3" y="1418" width="1.4" height="10" fill="#fff"/><rect x="2434" y="1414" width="10" height="8" fill="none" stroke="#fff" stroke-width="1.3"/><rect x="2438.3" y="1422" width="1.4" height="3" fill="#fff"/><rect x="2435" y="1425" width="8" height="1.4" fill="#fff"/><path d="M2455,1417 L2458,1417 L2462,1413 L2462,1427 L2458,1423 L2455,1423 Z" fill="#fff"/><path d="M2465,1416 Q2467.5,1420 2465,1424 M2468,1414 Q2472,1420 2468,1426" stroke="#fff" stroke-width="1.2" fill="none"/></g></svg>
<div style="position:absolute;left:2502px;top:1407px;font-family:'Liberation Sans', sans-serif;font-size:11.3px;line-height:11.3px;color:#f4f0ee;font-weight:normal;white-space:nowrap;">19:44</div>
<div style="position:absolute;left:2488px;top:1424px;font-family:'Liberation Sans', sans-serif;font-size:11.3px;line-height:11.3px;color:#f4f0ee;font-weight:normal;white-space:nowrap;">19.04.2020</div>
</body></html>
